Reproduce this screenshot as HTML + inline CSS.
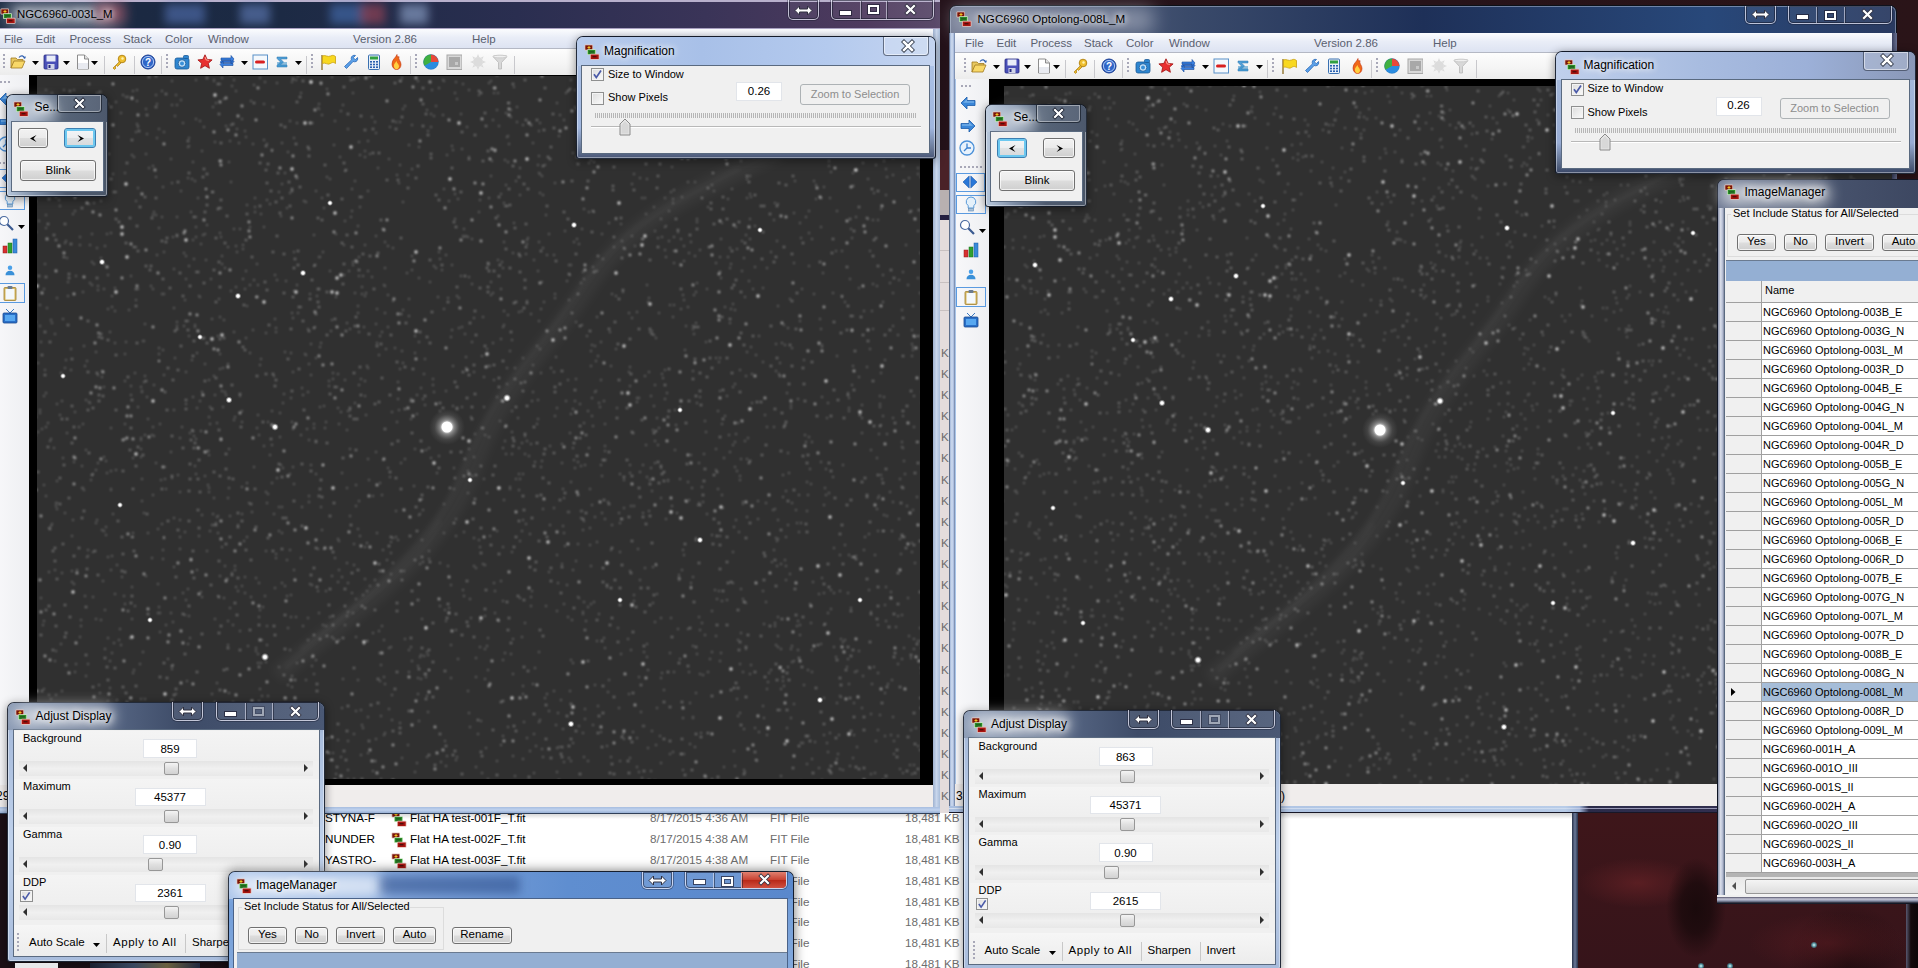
<!DOCTYPE html><html><head><meta charset="utf-8"><style>
html,body{margin:0;padding:0;width:1918px;height:968px;overflow:hidden;background:#140c10;font-family:"Liberation Sans", sans-serif;}
.abs{position:absolute;}
.t{position:absolute;white-space:nowrap;line-height:1;}
.client{position:absolute;background:#f0f0f0;}
.tbx{position:absolute;background:#fff;border:1px solid #dfe3e8;box-sizing:border-box;text-align:center;font-size:12px;color:#000;}
.btn{position:absolute;box-sizing:border-box;border:1px solid #707070;border-radius:3px;background:linear-gradient(#f2f2f2 0%,#ebebeb 45%,#dddddd 50%,#cfcfcf 100%);text-align:center;font-size:11.5px;color:#000;}
.cap{position:absolute;white-space:nowrap;line-height:1;font-size:12px;color:#000;text-shadow:0 0 6px #fff,0 0 8px #fff,0 0 10px #fff;}
.tbtn{position:absolute;box-sizing:border-box;border:1px solid rgba(40,50,70,.75);box-shadow:inset 0 0 0 1px rgba(255,255,255,.35);}
.sep{position:absolute;width:1px;background:#c5c5c5;}
</style></head><body>
<div class="abs" style="left:0;top:0;width:1918px;height:968px;background:linear-gradient(90deg,#1c1016,#24121a 50%,#2a1418);"></div>
<div class="abs" style="left:1578px;top:813px;width:328px;height:155px;background:radial-gradient(ellipse 30px 50px at 118px 95px,#1a0a0c 0%,rgba(26,10,12,.8) 50%,rgba(26,10,12,0) 100%),radial-gradient(ellipse 60px 25px at 60px 70px,rgba(110,36,40,.6) 0%,rgba(110,36,40,0) 100%),radial-gradient(ellipse 80px 30px at 250px 130px,rgba(100,30,36,.5) 0%,rgba(100,30,36,0) 100%),radial-gradient(ellipse 60px 60px at 270px 150px,rgba(20,8,10,.7) 0%,rgba(20,8,10,0) 100%),linear-gradient(#3e161a,#36141a);"></div>
<div class="abs" style="left:1906px;top:813px;width:12px;height:155px;background:linear-gradient(90deg,#585870,#140a0c 40%,#0c0608);"></div>
<div class="abs" style="left:1811px;top:942px;width:6px;height:6px;border-radius:3px;background:radial-gradient(#d0ffff,rgba(80,200,220,.6) 50%,rgba(80,200,220,0))"></div>
<div class="abs" style="left:1698px;top:963px;width:6px;height:6px;border-radius:3px;background:radial-gradient(#d0ffff,rgba(80,200,220,.6) 50%,rgba(80,200,220,0))"></div>
<div class="abs" style="left:1727px;top:963px;width:6px;height:6px;border-radius:3px;background:radial-gradient(#d0ffff,rgba(80,200,220,.6) 50%,rgba(80,200,220,0))"></div>
<div class="abs" style="left:300px;top:150px;width:1272px;height:818px;background:#fff;"></div>
<div class="abs" style="left:1572px;top:813px;width:6px;height:155px;background:linear-gradient(90deg,#28324a,#6a7898,#28324a);"></div>
<div class="abs" style="left:940px;top:150px;width:9px;height:40px;background:#4a2228;"></div>
<div class="abs" style="left:940px;top:190px;width:9px;height:25px;background:#b8b0b0;"></div>
<div class="abs" style="left:940px;top:215px;width:9px;height:5px;background:#262040;"></div>
<div class="abs" style="left:940px;top:220px;width:9px;height:593px;background:#e4dcdc;"></div>
<div class="t" style="left:325px;top:812px;font-size:11.7px;color:#000;">STYNA-F</div>
<svg class="abs" style="left:391px;top:811px" width="16" height="16" viewBox="0 0 16 16">
<rect x="0.5" y="0.5" width="8.5" height="6" rx="1" fill="#e8c8c0"/><rect x="1.3" y="1.3" width="7" height="4.4" fill="#7a1408"/><path d="M3.5 3.5h3M5 2v3" stroke="#f0c020" stroke-width="1"/>
<rect x="3" y="5.2" width="9" height="5.8" rx="1" fill="#c8e8c0"/><rect x="3.8" y="6" width="7.4" height="4.2" fill="#2a8a28"/><path d="M5 7.6h5M5 9h5" stroke="#1a4a18" stroke-width=".7"/>
<rect x="6" y="9.8" width="9.5" height="6" rx="1" fill="#e8c0b8"/><rect x="6.8" y="10.6" width="7.9" height="4.4" fill="#a81410"/><path d="M8.5 12.8h4" stroke="#300808" stroke-width="1"/></svg>
<div class="t" style="left:410px;top:812px;font-size:11.7px;color:#000;">Flat HA test-001F_T.fit</div>
<div class="t" style="left:650px;top:812px;font-size:11.7px;color:#6d6d6d;">8/17/2015 4:36 AM</div>
<div class="t" style="left:770px;top:812px;font-size:11.7px;color:#6d6d6d;">FIT File</div>
<div class="t" style="left:905px;top:812px;font-size:11.7px;color:#6d6d6d;">18,481 KB</div>
<div class="t" style="left:325px;top:833px;font-size:11.7px;color:#000;">NUNDER</div>
<svg class="abs" style="left:391px;top:832px" width="16" height="16" viewBox="0 0 16 16">
<rect x="0.5" y="0.5" width="8.5" height="6" rx="1" fill="#e8c8c0"/><rect x="1.3" y="1.3" width="7" height="4.4" fill="#7a1408"/><path d="M3.5 3.5h3M5 2v3" stroke="#f0c020" stroke-width="1"/>
<rect x="3" y="5.2" width="9" height="5.8" rx="1" fill="#c8e8c0"/><rect x="3.8" y="6" width="7.4" height="4.2" fill="#2a8a28"/><path d="M5 7.6h5M5 9h5" stroke="#1a4a18" stroke-width=".7"/>
<rect x="6" y="9.8" width="9.5" height="6" rx="1" fill="#e8c0b8"/><rect x="6.8" y="10.6" width="7.9" height="4.4" fill="#a81410"/><path d="M8.5 12.8h4" stroke="#300808" stroke-width="1"/></svg>
<div class="t" style="left:410px;top:833px;font-size:11.7px;color:#000;">Flat HA test-002F_T.fit</div>
<div class="t" style="left:650px;top:833px;font-size:11.7px;color:#6d6d6d;">8/17/2015 4:38 AM</div>
<div class="t" style="left:770px;top:833px;font-size:11.7px;color:#6d6d6d;">FIT File</div>
<div class="t" style="left:905px;top:833px;font-size:11.7px;color:#6d6d6d;">18,481 KB</div>
<div class="t" style="left:325px;top:854px;font-size:11.7px;color:#000;">YASTRO-</div>
<svg class="abs" style="left:391px;top:853px" width="16" height="16" viewBox="0 0 16 16">
<rect x="0.5" y="0.5" width="8.5" height="6" rx="1" fill="#e8c8c0"/><rect x="1.3" y="1.3" width="7" height="4.4" fill="#7a1408"/><path d="M3.5 3.5h3M5 2v3" stroke="#f0c020" stroke-width="1"/>
<rect x="3" y="5.2" width="9" height="5.8" rx="1" fill="#c8e8c0"/><rect x="3.8" y="6" width="7.4" height="4.2" fill="#2a8a28"/><path d="M5 7.6h5M5 9h5" stroke="#1a4a18" stroke-width=".7"/>
<rect x="6" y="9.8" width="9.5" height="6" rx="1" fill="#e8c0b8"/><rect x="6.8" y="10.6" width="7.9" height="4.4" fill="#a81410"/><path d="M8.5 12.8h4" stroke="#300808" stroke-width="1"/></svg>
<div class="t" style="left:410px;top:854px;font-size:11.7px;color:#000;">Flat HA test-003F_T.fit</div>
<div class="t" style="left:650px;top:854px;font-size:11.7px;color:#6d6d6d;">8/17/2015 4:38 AM</div>
<div class="t" style="left:770px;top:854px;font-size:11.7px;color:#6d6d6d;">FIT File</div>
<div class="t" style="left:905px;top:854px;font-size:11.7px;color:#6d6d6d;">18,481 KB</div>
<div class="t" style="left:650px;top:875px;font-size:11.7px;color:#6d6d6d;">8/17/2015 4:38 AM</div>
<div class="t" style="left:770px;top:875px;font-size:11.7px;color:#6d6d6d;">FIT File</div>
<div class="t" style="left:905px;top:875px;font-size:11.7px;color:#6d6d6d;">18,481 KB</div>
<div class="t" style="left:650px;top:896px;font-size:11.7px;color:#6d6d6d;">8/17/2015 4:38 AM</div>
<div class="t" style="left:770px;top:896px;font-size:11.7px;color:#6d6d6d;">FIT File</div>
<div class="t" style="left:905px;top:896px;font-size:11.7px;color:#6d6d6d;">18,481 KB</div>
<div class="t" style="left:650px;top:916px;font-size:11.7px;color:#6d6d6d;">8/17/2015 4:38 AM</div>
<div class="t" style="left:770px;top:916px;font-size:11.7px;color:#6d6d6d;">FIT File</div>
<div class="t" style="left:905px;top:916px;font-size:11.7px;color:#6d6d6d;">18,481 KB</div>
<div class="t" style="left:650px;top:937px;font-size:11.7px;color:#6d6d6d;">8/17/2015 4:38 AM</div>
<div class="t" style="left:770px;top:937px;font-size:11.7px;color:#6d6d6d;">FIT File</div>
<div class="t" style="left:905px;top:937px;font-size:11.7px;color:#6d6d6d;">18,481 KB</div>
<div class="t" style="left:650px;top:958px;font-size:11.7px;color:#6d6d6d;">8/17/2015 4:38 AM</div>
<div class="t" style="left:770px;top:958px;font-size:11.7px;color:#6d6d6d;">FIT File</div>
<div class="t" style="left:905px;top:958px;font-size:11.7px;color:#6d6d6d;">18,481 KB</div>
<div class="t" style="left:941px;top:347px;font-size:11.7px;color:#6d6d6d;">K</div>
<div class="t" style="left:941px;top:368px;font-size:11.7px;color:#6d6d6d;">K</div>
<div class="t" style="left:941px;top:389px;font-size:11.7px;color:#6d6d6d;">K</div>
<div class="t" style="left:941px;top:410px;font-size:11.7px;color:#6d6d6d;">K</div>
<div class="t" style="left:941px;top:431px;font-size:11.7px;color:#6d6d6d;">K</div>
<div class="t" style="left:941px;top:452px;font-size:11.7px;color:#6d6d6d;">K</div>
<div class="t" style="left:941px;top:474px;font-size:11.7px;color:#6d6d6d;">K</div>
<div class="t" style="left:941px;top:495px;font-size:11.7px;color:#6d6d6d;">K</div>
<div class="t" style="left:941px;top:516px;font-size:11.7px;color:#6d6d6d;">K</div>
<div class="t" style="left:941px;top:537px;font-size:11.7px;color:#6d6d6d;">K</div>
<div class="t" style="left:941px;top:558px;font-size:11.7px;color:#6d6d6d;">K</div>
<div class="t" style="left:941px;top:579px;font-size:11.7px;color:#6d6d6d;">K</div>
<div class="t" style="left:941px;top:600px;font-size:11.7px;color:#6d6d6d;">K</div>
<div class="t" style="left:941px;top:621px;font-size:11.7px;color:#6d6d6d;">K</div>
<div class="t" style="left:941px;top:642px;font-size:11.7px;color:#6d6d6d;">K</div>
<div class="t" style="left:941px;top:664px;font-size:11.7px;color:#6d6d6d;">K</div>
<div class="t" style="left:941px;top:685px;font-size:11.7px;color:#6d6d6d;">K</div>
<div class="t" style="left:941px;top:706px;font-size:11.7px;color:#6d6d6d;">K</div>
<div class="t" style="left:941px;top:727px;font-size:11.7px;color:#6d6d6d;">K</div>
<div class="t" style="left:941px;top:748px;font-size:11.7px;color:#6d6d6d;">K</div>
<div class="t" style="left:941px;top:769px;font-size:11.7px;color:#6d6d6d;">K</div>
<div class="t" style="left:941px;top:790px;font-size:11.7px;color:#6d6d6d;">K</div>
<div class="abs" style="left:940px;top:250px;width:9px;height:1px;background:#c8c0c0"></div>
<div class="abs" style="left:940px;top:282px;width:9px;height:1px;background:#c8c0c0"></div>
<div class="abs" style="left:940px;top:310px;width:9px;height:1px;background:#c8c0c0"></div>
<svg width="0" height="0" style="position:absolute"><defs><radialGradient id="bigstar"><stop offset="0" stop-color="#fff"/><stop offset=".22" stop-color="#fff"/><stop offset=".4" stop-color="#ccc" stop-opacity=".55"/><stop offset=".7" stop-color="#999" stop-opacity=".18"/><stop offset="1" stop-color="#888" stop-opacity="0"/></radialGradient><radialGradient id="st"><stop offset="0" stop-color="#fff"/><stop offset=".45" stop-color="#eee" stop-opacity=".9"/><stop offset="1" stop-color="#999" stop-opacity="0"/></radialGradient><filter id="blur3"><feGaussianBlur stdDeviation="5"/></filter><filter id="blur1"><feGaussianBlur stdDeviation="2"/></filter><filter id="sblur" x="-5%" y="-5%" width="110%" height="110%"><feGaussianBlur stdDeviation="0.8"/></filter><g id="sky"><path d="M277 676 C 340 620, 440 560, 472 470 S 540 360, 585 290 S 680 200, 760 160 S 860 120, 930 95" fill="none" stroke="#7a7a7a" stroke-width="18" opacity=".11" filter="url(#blur3)"/><path d="M285 668 C 345 612, 430 556, 462 472 S 532 362, 578 292 S 668 208, 740 168" fill="none" stroke="#8a8a8a" stroke-width="6" opacity=".06" filter="url(#blur1)"/><path d="M300 650 C 360 600, 420 570, 440 520" fill="none" stroke="#888" stroke-width="5" opacity=".06" filter="url(#blur1)"/><path d="M437 473h0M862 405h0M487 493h0M196 439h0M597 641h0M115 288h0M112 653h0M654 100h0M914 765h0M619 513h0M172 81h0M506 113h0M201 244h0M57 404h0M426 677h0M497 531h0M480 547h0M442 270h0M928 787h0M786 580h0M314 235h0M290 121h0M720 358h0M792 348h0M892 680h0M30 221h0M849 408h0M912 356h0M96 523h0M731 264h0M108 309h0M898 616h0M136 247h0M121 113h0M747 198h0M533 392h0M202 597h0M148 533h0M135 373h0M222 264h0M904 648h0M304 707h0M220 354h0M799 532h0M120 782h0M222 256h0M725 307h0M297 123h0M111 490h0M249 503h0M365 396h0M893 418h0M547 694h0M195 181h0M848 659h0M255 207h0M695 747h0M207 754h0M824 505h0M409 145h0M65 763h0M245 577h0M261 663h0M567 281h0M188 589h0M92 234h0M533 684h0M583 272h0M856 217h0M45 264h0M431 114h0M189 336h0M545 165h0M356 711h0M912 543h0M652 491h0M156 95h0M46 725h0M661 763h0M49 528h0M464 596h0M317 790h0M98 463h0M693 718h0M693 577h0M744 729h0M347 563h0M841 697h0M405 639h0M807 482h0M592 345h0M554 508h0M102 530h0M924 703h0M685 350h0M692 488h0M426 674h0M105 610h0M57 503h0M463 236h0M659 428h0M583 733h0M260 78h0M301 558h0M212 192h0M845 545h0M428 712h0M324 549h0M209 380h0M755 728h0M822 347h0M555 298h0M153 427h0M783 681h0M670 754h0M279 192h0M436 268h0M223 368h0M593 426h0M314 674h0M914 396h0M97 93h0M816 100h0M668 481h0M308 640h0M47 168h0M439 88h0M777 241h0M157 104h0M596 391h0M597 542h0M757 760h0M646 214h0M458 199h0M40 410h0M673 199h0M275 319h0M658 445h0M583 614h0M384 640h0M846 133h0M869 590h0M147 397h0M593 725h0M369 480h0M821 644h0M880 404h0M616 218h0M680 659h0M607 587h0M222 718h0M912 774h0M513 639h0M318 725h0M800 321h0M104 387h0M525 623h0M469 90h0M758 116h0M750 194h0M332 637h0M156 177h0M495 591h0M786 566h0M881 425h0M884 132h0M229 449h0M291 595h0M605 446h0M789 473h0M311 344h0M791 718h0M217 683h0M902 447h0M546 215h0M512 432h0M575 90h0M902 442h0M391 647h0M537 424h0M652 117h0M515 368h0M891 735h0M272 411h0M144 382h0M764 718h0M459 298h0M202 515h0M863 163h0M731 86h0M205 234h0M648 302h0M350 516h0M124 596h0M141 438h0M255 212h0M507 384h0M368 368h0M506 185h0M214 525h0M605 451h0M796 510h0M801 238h0M697 654h0M842 297h0M313 734h0M226 789h0M829 166h0M245 593h0M264 140h0M779 374h0M741 161h0M393 563h0M46 215h0M644 726h0M902 153h0M485 616h0M483 564h0M200 121h0M126 97h0M527 441h0M542 176h0M196 217h0M786 783h0M864 139h0M86 755h0M446 621h0M324 406h0M494 380h0M571 80h0M661 678h0M193 397h0M695 362h0M206 189h0M491 81h0M834 647h0M664 690h0M596 361h0M570 433h0M914 649h0M262 726h0M700 630h0M763 362h0M837 703h0M655 622h0M719 362h0M680 121h0M338 408h0M40 326h0M605 519h0M239 750h0M629 313h0M624 480h0M510 351h0M930 532h0M661 618h0M912 86h0M584 602h0M261 359h0M75 211h0M368 141h0M256 722h0M525 436h0M900 479h0M926 529h0M759 125h0M568 617h0M71 740h0M174 410h0M182 427h0M580 112h0M881 373h0M504 500h0M359 276h0M620 474h0M285 586h0M296 80h0M251 101h0M171 613h0M381 716h0M704 106h0M920 750h0M96 722h0M417 414h0M906 245h0M501 745h0M680 407h0M911 658h0M573 153h0M592 398h0M213 107h0M505 160h0M429 551h0M440 259h0M554 372h0M730 452h0M928 756h0M691 242h0M132 713h0M736 520h0M353 265h0M647 477h0M563 526h0M708 207h0M254 775h0M854 703h0M66 114h0M274 376h0M591 144h0M517 122h0M108 557h0M526 524h0M366 415h0M220 317h0M700 674h0M97 156h0M758 519h0M722 223h0M412 256h0M759 336h0M618 782h0M323 465h0M701 733h0M415 336h0M117 700h0M101 130h0M538 419h0M647 285h0M728 125h0M222 547h0M104 289h0M682 570h0M285 173h0M352 593h0M360 155h0M668 480h0M857 747h0M852 385h0M753 289h0M316 358h0M871 714h0M253 330h0M359 332h0M386 349h0M205 476h0M747 459h0M783 475h0M189 616h0M823 273h0M50 441h0M520 479h0M900 539h0M754 116h0M522 637h0M106 129h0M693 717h0M106 527h0M159 607h0M614 247h0M228 621h0M499 621h0M385 313h0M901 554h0M474 457h0M679 580h0M853 366h0M774 550h0M798 650h0M780 710h0M892 531h0M501 581h0M752 374h0M408 175h0M697 784h0M368 191h0M214 376h0M293 768h0M83 292h0M133 537h0M728 199h0M86 400h0M556 725h0M63 148h0M196 227h0M242 586h0M565 231h0M196 272h0M185 615h0M311 465h0M765 415h0M264 709h0M853 316h0M523 759h0M464 229h0M75 752h0M751 347h0M505 441h0M277 783h0M622 241h0M40 410h0M364 644h0M672 506h0M172 183h0M320 257h0M812 442h0M603 785h0M270 455h0M166 625h0M31 661h0M792 662h0M104 264h0M675 140h0M462 407h0M890 492h0M802 289h0M740 370h0M855 135h0M774 220h0M519 448h0M172 669h0M310 294h0M98 290h0M451 585h0M354 565h0M125 354h0M446 766h0M777 541h0M41 342h0M669 241h0M538 400h0M39 784h0M750 219h0M584 279h0M368 459h0M298 313h0M383 550h0M261 214h0M688 307h0M881 475h0M681 309h0M774 136h0M157 138h0M640 580h0M192 360h0M783 497h0M111 233h0M171 159h0M396 122h0M859 377h0M490 536h0M720 661h0M377 309h0M401 81h0M391 574h0M914 639h0M624 508h0M47 308h0M338 539h0M126 342h0M488 638h0M773 510h0M173 622h0M843 465h0M347 430h0M158 584h0M918 442h0M674 672h0M207 750h0M594 212h0M105 246h0M549 572h0M326 739h0M355 403h0M142 771h0M152 721h0M519 474h0M534 260h0M848 784h0M766 503h0M140 664h0M290 716h0M247 483h0M778 204h0M523 125h0M59 200h0M918 746h0M623 292h0M634 601h0M373 496h0M753 82h0M210 407h0M159 348h0M543 195h0M498 260h0M541 309h0M608 97h0M634 174h0M893 502h0M453 366h0M591 566h0M712 611h0M467 786h0M784 686h0M398 382h0M539 722h0M503 448h0M419 721h0M319 109h0M683 718h0M689 500h0M707 289h0M564 120h0M142 392h0M482 356h0M77 570h0M504 242h0M306 355h0M242 119h0M850 766h0M629 694h0M409 650h0M230 608h0M540 720h0M119 640h0M141 457h0M886 70h0M250 285h0M322 115h0M836 657h0M388 327h0M557 103h0M58 717h0M307 429h0M871 774h0M455 219h0M296 734h0M837 211h0M784 325h0M455 194h0M822 787h0M212 525h0M202 704h0M75 146h0M683 295h0M840 696h0M672 167h0M656 745h0M431 127h0M231 291h0M669 211h0M193 240h0M628 639h0M365 547h0M826 495h0M236 287h0M864 550h0M279 531h0M111 778h0M426 450h0M508 103h0M570 275h0M256 648h0M108 275h0M710 247h0M281 465h0M198 716h0M919 94h0M445 610h0M376 739h0M480 200h0M530 534h0M354 544h0M735 442h0M485 679h0M646 445h0M886 195h0M732 189h0M577 239h0M426 627h0M738 640h0M242 422h0M229 488h0M479 95h0M567 585h0M545 698h0M192 179h0M46 427h0M421 388h0M267 645h0M95 723h0M542 461h0M742 241h0M162 294h0M68 296h0M589 448h0M268 494h0M110 661h0M184 253h0M174 567h0M778 636h0M85 366h0M358 226h0M903 100h0M471 618h0M918 174h0M440 606h0M65 243h0M831 172h0M384 285h0M412 125h0M61 787h0M717 599h0M237 252h0M527 244h0M445 741h0M358 313h0M913 510h0M66 360h0M615 112h0M339 570h0M808 495h0M828 403h0M384 677h0M373 633h0M224 320h0M195 466h0M177 217h0M223 407h0M308 392h0M924 559h0M806 217h0M375 122h0M652 331h0M277 83h0M194 259h0M384 735h0M674 263h0M355 181h0M873 329h0M719 591h0M846 85h0M320 347h0M105 705h0M323 625h0M497 110h0M385 242h0M67 179h0M566 93h0M311 375h0M520 168h0M666 257h0M683 550h0M162 217h0M282 583h0M395 348h0M809 233h0M293 318h0M224 99h0M52 524h0M539 652h0M908 285h0M633 732h0M225 566h0M630 758h0M812 239h0M599 135h0M415 353h0M84 346h0M325 428h0M282 184h0M392 412h0M180 549h0M246 137h0M338 374h0M166 489h0M661 468h0M660 87h0M382 332h0M87 361h0M79 427h0M557 408h0M323 252h0M51 320h0M833 477h0M266 551h0M197 408h0M584 757h0M356 485h0M878 625h0M595 517h0M400 369h0M279 667h0M822 345h0M849 97h0M152 435h0M308 329h0M909 178h0M203 235h0M642 239h0M31 462h0M385 242h0M474 538h0M523 520h0M535 668h0M902 310h0M342 708h0M312 585h0M656 564h0M898 664h0M174 518h0M472 476h0M363 276h0M704 454h0M243 249h0M322 198h0M492 161h0M87 119h0M122 577h0M131 395h0M725 416h0M176 694h0M813 108h0M259 435h0M747 352h0M674 251h0M674 305h0M330 617h0M788 667h0M541 373h0M666 519h0M778 647h0M143 341h0M632 236h0M196 80h0M557 748h0M903 166h0M649 372h0M598 356h0M870 782h0M74 584h0M137 101h0M287 596h0M924 157h0M327 89h0M518 418h0M366 293h0M750 674h0M285 352h0M586 621h0M913 350h0M655 463h0M750 176h0M188 147h0M870 251h0M469 157h0M321 84h0M539 173h0M593 267h0M235 417h0M359 257h0M76 116h0M833 293h0M101 201h0M465 788h0M212 694h0M466 368h0M756 355h0M82 466h0M621 519h0M279 746h0M808 786h0M429 670h0M682 197h0M54 192h0M137 124h0M353 613h0M309 440h0M39 221h0M893 78h0M505 653h0M743 599h0M389 648h0M775 623h0M917 143h0M885 360h0M665 250h0M849 87h0M549 234h0M380 336h0M621 654h0M358 529h0M349 271h0M845 302h0M115 311h0M697 222h0M699 463h0M642 198h0M125 173h0M345 380h0M38 432h0M393 301h0M513 756h0M214 704h0M319 613h0M128 781h0M417 763h0M228 364h0M665 198h0M276 558h0M883 302h0M195 327h0M921 177h0M601 342h0M609 223h0M585 709h0M801 523h0M484 479h0M133 673h0M651 396h0M629 372h0M376 236h0M571 482h0M494 93h0M595 392h0M564 498h0M868 179h0M452 785h0M694 295h0M693 782h0M392 695h0M144 783h0M472 239h0M786 537h0M874 667h0M748 438h0M924 117h0M813 582h0M256 651h0M439 456h0M809 211h0M282 533h0M96 470h0M738 423h0M248 646h0M800 625h0M524 722h0M747 179h0M359 142h0M63 319h0M808 670h0M136 201h0M380 681h0M585 719h0M95 781h0M216 523h0M819 594h0M207 551h0M418 81h0M336 297h0M597 271h0M573 570h0M193 162h0M654 406h0M146 154h0M877 509h0M352 211h0M925 568h0M693 329h0M309 364h0M162 524h0M412 661h0M398 399h0M486 748h0M342 577h0M242 487h0M286 698h0M288 685h0M639 398h0M870 349h0M699 503h0M434 116h0M407 273h0M427 757h0M294 570h0M635 246h0M400 165h0M836 251h0M409 316h0M768 682h0M562 463h0M119 715h0M110 332h0M367 591h0M632 318h0M838 754h0M51 526h0M452 330h0M448 298h0M634 506h0M903 773h0M923 355h0M776 538h0M661 788h0M90 403h0M391 542h0M226 783h0M218 336h0M159 354h0M698 130h0M180 537h0M591 604h0M258 654h0M688 629h0M138 407h0M44 689h0M880 715h0M52 323h0M512 454h0M130 638h0M301 435h0M142 479h0M147 134h0M491 282h0M730 248h0M403 109h0M226 395h0M532 401h0M796 145h0M795 181h0M903 448h0M396 511h0M807 764h0M402 78h0M168 659h0M691 583h0M171 452h0M56 149h0M301 766h0M609 680h0M71 370h0M101 258h0M131 732h0M326 422h0M619 708h0M882 479h0M481 721h0M385 286h0M695 256h0M361 379h0M459 328h0M417 395h0M75 672h0M86 450h0M523 358h0M230 141h0M365 296h0M466 236h0M705 421h0M38 363h0M900 75h0M564 762h0M359 501h0M362 287h0M578 494h0M314 428h0M495 613h0M78 137h0M257 264h0M746 376h0M804 360h0M287 560h0M107 779h0M778 306h0M316 660h0M739 532h0M81 620h0M73 520h0M527 738h0M605 86h0M871 612h0M552 74h0M693 371h0M642 778h0M855 124h0M733 387h0M706 342h0M433 385h0M136 300h0M691 121h0M134 670h0M630 465h0M132 155h0M309 757h0M534 734h0M220 369h0M513 674h0M141 699h0M455 93h0M419 342h0M637 738h0M474 566h0M379 631h0M125 604h0M180 492h0M212 319h0M177 322h0M562 444h0M380 483h0M788 328h0M555 416h0M913 306h0M658 238h0M265 596h0M547 255h0M88 664h0M370 586h0M419 515h0M534 773h0M849 398h0M468 237h0M708 144h0M306 680h0M62 573h0M541 467h0M330 179h0M886 621h0M755 140h0M736 227h0M209 455h0M579 157h0M718 489h0M839 735h0M650 332h0M886 587h0M292 687h0M684 261h0M254 85h0M513 253h0M294 252h0M148 419h0M275 275h0M280 437h0M816 185h0M804 685h0M578 462h0M691 455h0M624 732h0M728 257h0M79 744h0M356 637h0M240 396h0M363 595h0M879 434h0M539 321h0M239 754h0M129 747h0M621 122h0M842 143h0M539 156h0M920 293h0M815 114h0M630 119h0M57 481h0M915 563h0M800 635h0M499 126h0M504 203h0M504 325h0M479 212h0M665 370h0M467 127h0M468 471h0M905 474h0M151 286h0M332 576h0M875 773h0M885 736h0M803 743h0M48 423h0M562 564h0M581 511h0M870 132h0M497 761h0M59 150h0M812 759h0M52 93h0M777 566h0M498 488h0M712 652h0M31 119h0M745 772h0M780 363h0M332 320h0M43 625h0M266 492h0M504 311h0M637 398h0M241 705h0M188 178h0M258 415h0M735 310h0M244 541h0M264 446h0M259 701h0M196 237h0M301 307h0M684 555h0M741 459h0M101 620h0M250 227h0M403 783h0M364 327h0M850 783h0M378 168h0M741 633h0M334 639h0M372 277h0M564 604h0M458 659h0M42 429h0M372 117h0M853 173h0M215 702h0M894 741h0M338 740h0M158 584h0M881 209h0M152 558h0M824 593h0M884 397h0M365 157h0M276 746h0M94 203h0M343 105h0M306 202h0M141 449h0M516 479h0M716 449h0M882 129h0M231 125h0M308 618h0M862 433h0M174 308h0M542 282h0M744 770h0M444 504h0M791 405h0M202 750h0M910 88h0M716 358h0M77 187h0M186 600h0M220 84h0M228 645h0M479 540h0M449 201h0M44 289h0M67 258h0M587 336h0M456 519h0M315 327h0M825 488h0M405 459h0M444 309h0M852 238h0M872 684h0M824 187h0M488 779h0M290 193h0M681 239h0M555 183h0M883 275h0M117 565h0M342 473h0M478 734h0M493 343h0M31 427h0M272 483h0M599 403h0M111 428h0M464 532h0M903 272h0M428 131h0M750 239h0M776 645h0M259 720h0M484 377h0M530 751h0M471 417h0M292 676h0M483 317h0M207 225h0M781 649h0M911 730h0M647 644h0M670 653h0M751 197h0M763 288h0M250 732h0M51 439h0M339 640h0M579 726h0M869 534h0M88 550h0M128 777h0M814 294h0M197 570h0M712 779h0M591 160h0M684 112h0M811 623h0M737 699h0M542 749h0M605 424h0M376 324h0M51 186h0M746 235h0M618 628h0M655 441h0M314 266h0M199 536h0M648 748h0M328 738h0M850 279h0M887 516h0M896 627h0M330 271h0M500 421h0M62 691h0M512 411h0M700 250h0M209 488h0M247 306h0M93 108h0M350 449h0M884 531h0M403 363h0M242 411h0M893 158h0M420 564h0M716 470h0M607 746h0M842 251h0M517 788h0M505 206h0M719 111h0M165 467h0M275 588h0M684 300h0M720 536h0M665 399h0M419 147h0M457 757h0M830 110h0M94 264h0M655 385h0M145 376h0M546 606h0M393 538h0M643 513h0M72 582h0M146 109h0M456 82h0M96 352h0M452 146h0M888 684h0M468 493h0M314 778h0M138 289h0M229 693h0M488 366h0M389 709h0M262 640h0M667 393h0M359 385h0M438 297h0M591 366h0M303 626h0M440 411h0M822 397h0M368 717h0M909 636h0M391 553h0M697 283h0M682 754h0M620 552h0M422 540h0M233 625h0M515 776h0M338 582h0M45 370h0M720 257h0M582 229h0M389 785h0M207 727h0M84 490h0M769 673h0M382 495h0M671 618h0M702 487h0M256 578h0M535 462h0M918 168h0M733 304h0M684 754h0M277 478h0M505 427h0M180 520h0M834 548h0M290 650h0M408 175h0M575 401h0M507 784h0M543 757h0M347 616h0M98 286h0M653 567h0M776 344h0M276 328h0M514 87h0M367 543h0M164 294h0M815 742h0M255 198h0M136 132h0M745 602h0M268 422h0M656 90h0M767 689h0M220 576h0M659 313h0M821 227h0M457 296h0M428 655h0M543 509h0M918 231h0M230 516h0M165 764h0M337 387h0M418 666h0M854 557h0M184 326h0M666 226h0M824 698h0M234 332h0M236 587h0M72 571h0M86 676h0M519 490h0M116 102h0M348 779h0M570 691h0M86 143h0M49 572h0M189 266h0M630 571h0M320 407h0M290 474h0M350 329h0M254 280h0M265 82h0M309 496h0M272 151h0M791 408h0M491 295h0M828 613h0M590 545h0M653 430h0M402 351h0M484 407h0M506 454h0M740 713h0M232 86h0M301 93h0M747 517h0M287 208h0M812 672h0M645 568h0M700 397h0M388 468h0M822 784h0M855 672h0M97 248h0M904 461h0M493 293h0M806 442h0M921 124h0M924 80h0M163 350h0M606 150h0M536 746h0M422 619h0M563 489h0M186 404h0M840 555h0M225 392h0M519 312h0M550 525h0M46 228h0M621 224h0M96 619h0M330 760h0M533 143h0M603 259h0M763 591h0M713 111h0M61 644h0M156 215h0M57 188h0M456 760h0M319 257h0M775 203h0M602 513h0M872 101h0M537 346h0M771 252h0M673 203h0M476 767h0M246 271h0M856 556h0M89 204h0M243 279h0M790 574h0M912 552h0M595 346h0M676 425h0M83 424h0M376 452h0M74 90h0M915 337h0M327 177h0M563 729h0M192 430h0M480 621h0M539 242h0M201 592h0M100 693h0M60 206h0M451 678h0M588 607h0M715 590h0M76 664h0M163 187h0M64 90h0M819 344h0M108 104h0M792 503h0M855 97h0M131 276h0M202 151h0M210 531h0M181 191h0M512 340h0M165 479h0M487 349h0M457 99h0M584 209h0M332 77h0M829 493h0M383 460h0M876 165h0M375 580h0M365 579h0M847 99h0M286 281h0M705 635h0M660 736h0M197 353h0M798 621h0M131 775h0M696 693h0M356 506h0M893 717h0M549 711h0M929 674h0M620 761h0M159 361h0M538 165h0M733 115h0M596 271h0M321 507h0M202 392h0M801 781h0M266 333h0M654 207h0M794 213h0M531 314h0M31 71h0M32 306h0M278 784h0M604 117h0M674 237h0M463 590h0M801 743h0M409 299h0M388 295h0M697 403h0M647 179h0M735 766h0M213 514h0M176 95h0M403 202h0M688 482h0M637 767h0M82 141h0M62 401h0M772 562h0M523 686h0M365 151h0M607 88h0M236 91h0M175 116h0M508 162h0M573 663h0M340 157h0M634 595h0M826 469h0M554 691h0M639 772h0M288 628h0M600 407h0M40 413h0M267 503h0M489 437h0M83 165h0M576 561h0M921 641h0M291 398h0M485 649h0M385 733h0M466 357h0M462 327h0M930 103h0M390 127h0M640 178h0M164 375h0M572 620h0M430 282h0M361 710h0M222 78h0M827 418h0M149 168h0M831 609h0M88 556h0M222 391h0M575 107h0M872 311h0M160 632h0M128 97h0M617 408h0M841 639h0M216 103h0M573 409h0M301 730h0M218 533h0M96 735h0M884 515h0M318 591h0M843 642h0M67 433h0M156 463h0M885 693h0M254 467h0M316 191h0M699 617h0M333 373h0M657 594h0M447 155h0M116 192h0M774 427h0M610 332h0M362 197h0M907 506h0M146 576h0M568 512h0M723 508h0M819 768h0M396 537h0M367 366h0M360 536h0M347 323h0M792 646h0M639 677h0M377 533h0M256 297h0M121 645h0M859 288h0M370 154h0M158 529h0M833 130h0M259 617h0M233 702h0M348 411h0M211 279h0M412 270h0M686 92h0M605 648h0M324 208h0M138 126h0M743 504h0M44 396h0M569 300h0M61 373h0M348 770h0M354 734h0M811 484h0M143 652h0M111 471h0M118 137h0M399 183h0M923 486h0M837 759h0M712 535h0M456 630h0M632 184h0M507 368h0M494 583h0M650 480h0M740 664h0M113 174h0M72 186h0M893 293h0M425 405h0M538 271h0M731 309h0M791 649h0M31 464h0M114 706h0M92 262h0M722 495h0M630 367h0M498 216h0M446 255h0M638 147h0M154 212h0M510 489h0M33 781h0M782 343h0M173 665h0M909 198h0M710 659h0M873 220h0M138 188h0M238 718h0M849 411h0M145 324h0M247 537h0M678 629h0M423 399h0M451 337h0M440 563h0M670 305h0M540 174h0M71 349h0M353 93h0M102 377h0M878 673h0M57 298h0M362 294h0M153 495h0M785 345h0M189 146h0M44 621h0M238 591h0M742 130h0M200 297h0M722 601h0M303 395h0M350 410h0M744 258h0M759 732h0M571 761h0M874 193h0M922 214h0M754 157h0M302 388h0M785 560h0M213 716h0M809 437h0M76 276h0M293 372h0M878 498h0M768 121h0M251 597h0M336 234h0M87 107h0M401 463h0M390 477h0M292 82h0M637 312h0M472 342h0M273 107h0M297 285h0M133 91h0M463 84h0M821 329h0M429 448h0M52 143h0M737 471h0M474 318h0M706 432h0M743 672h0M834 593h0M637 402h0M510 487h0M503 660h0M802 108h0M707 514h0M569 724h0M75 412h0M368 753h0M178 475h0M160 613h0M470 599h0M306 706h0M36 232h0M690 703h0M730 268h0M103 581h0M688 114h0M871 450h0M60 415h0M334 145h0M827 743h0M142 391h0M276 554h0M129 310h0M399 410h0M422 499h0M876 741h0M847 667h0M236 246h0M444 533h0M576 322h0M923 295h0M47 135h0M218 596h0M787 100h0M243 245h0M738 716h0M267 144h0M900 769h0M675 410h0M702 623h0M488 265h0M503 547h0M322 530h0M162 769h0M220 233h0M894 754h0M863 676h0M794 661h0M540 123h0M689 672h0M784 101h0M85 596h0M469 713h0M922 392h0M638 549h0M654 335h0M606 119h0M840 591h0M752 403h0M215 395h0M643 465h0M128 73h0M388 246h0M234 229h0M404 571h0M852 557h0M49 695h0M578 597h0M582 325h0M335 121h0M628 109h0M643 726h0M631 506h0M757 761h0M761 783h0M444 81h0M583 530h0M807 511h0M357 73h0M778 520h0M917 497h0M797 626h0M922 403h0M837 356h0M40 305h0M346 784h0M385 268h0M652 140h0M305 354h0M142 501h0M411 647h0M336 774h0M206 452h0M234 80h0M301 715h0M292 422h0M502 262h0M511 117h0M344 275h0M764 624h0M661 498h0M810 604h0M80 164h0M703 675h0M920 628h0M172 478h0M592 505h0M151 767h0M489 264h0M913 347h0M93 552h0M264 227h0M302 507h0M318 549h0M845 783h0M830 733h0M258 663h0M111 489h0M98 141h0M884 161h0M675 450h0M31 641h0M85 708h0M767 427h0M432 90h0M660 98h0M503 736h0M640 154h0M679 575h0M326 626h0M551 368h0M503 268h0M288 710h0M345 625h0M360 207h0M31 764h0M706 777h0M560 115h0M177 105h0M581 518h0M890 283h0M240 229h0M162 91h0M474 372h0M361 755h0M312 666h0M509 144h0M57 509h0M817 106h0M662 237h0M648 670h0M684 246h0M170 766h0M854 735h0M517 107h0M362 725h0M90 283h0M68 704h0M348 129h0M351 217h0M420 514h0M622 139h0M511 110h0M427 652h0M266 662h0M250 353h0M743 73h0M529 456h0M673 752h0M655 231h0M209 417h0M283 468h0M111 570h0M405 106h0M139 743h0M794 704h0M381 779h0M183 593h0M878 220h0M34 161h0M105 649h0M576 413h0M133 533h0M153 166h0M564 533h0M751 665h0M153 289h0M160 424h0M56 695h0M644 652h0M470 727h0M781 667h0M755 226h0M341 111h0M718 411h0M918 278h0M418 694h0M902 615h0M824 735h0M274 514h0M87 557h0M887 434h0M161 480h0M89 402h0M102 371h0M766 602h0M798 399h0M427 110h0M740 480h0M397 175h0M443 115h0M138 127h0M412 169h0M775 509h0M810 469h0M174 269h0M786 491h0M612 525h0M73 214h0M418 678h0M879 496h0M264 104h0M533 365h0M868 219h0M214 81h0M56 651h0M814 181h0M44 485h0M252 512h0M851 608h0M282 507h0M291 617h0M262 696h0M641 712h0M341 757h0M554 255h0M612 294h0M132 99h0M579 244h0M120 629h0M158 613h0M276 332h0M869 667h0M781 776h0M573 743h0M590 489h0M321 343h0M543 248h0M608 692h0M678 232h0M55 334h0M421 679h0M522 443h0M575 468h0M640 472h0M527 240h0M141 387h0M828 752h0M294 484h0M497 397h0M190 638h0M107 234h0M281 216h0M204 127h0M501 194h0M608 502h0M592 416h0M581 283h0M448 566h0M224 598h0M557 772h0M585 465h0M721 278h0M365 381h0M691 588h0M197 757h0M914 427h0M926 517h0M376 133h0M46 496h0M677 513h0M735 384h0M698 505h0M601 465h0M630 473h0M112 556h0M663 378h0M903 416h0M180 438h0M352 189h0M830 198h0M671 192h0M495 788h0M110 688h0M35 774h0M848 393h0M604 401h0M177 326h0M427 696h0M133 458h0M454 468h0M743 502h0M321 757h0M569 265h0M523 694h0M72 536h0M469 277h0M173 237h0M424 374h0M571 265h0M588 411h0M746 649h0M243 773h0M522 311h0M259 583h0M423 562h0M260 689h0M268 696h0M425 359h0M550 446h0M523 474h0M885 605h0M113 781h0M44 108h0M767 268h0M56 197h0M476 677h0M48 189h0M41 109h0M314 424h0M902 537h0M799 495h0M849 555h0M246 338h0M462 149h0M862 418h0M210 424h0M755 267h0M559 136h0M247 205h0M485 565h0M235 566h0M557 611h0M926 310h0M927 398h0M489 198h0M106 535h0M123 95h0M106 461h0M206 260h0M720 391h0M163 559h0M925 518h0M431 458h0M662 673h0M737 249h0M732 145h0M145 435h0M196 474h0M286 749h0M420 657h0M880 396h0M722 424h0M389 159h0M623 734h0M649 298h0M503 327h0M382 626h0M36 417h0M491 176h0M689 253h0M393 248h0M568 380h0M645 376h0M735 467h0M125 424h0M258 285h0M883 416h0M695 182h0M597 155h0M229 162h0M52 723h0M898 335h0M41 598h0M627 103h0M720 119h0M240 631h0M721 239h0M487 646h0M573 448h0M196 119h0M199 448h0M566 401h0M602 476h0M611 366h0M788 453h0M822 780h0M775 626h0M651 468h0M253 144h0M625 249h0M581 466h0M576 379h0M245 289h0M657 708h0M317 296h0M433 379h0M599 614h0M721 653h0M683 770h0M434 392h0M616 296h0M776 371h0M531 444h0M358 78h0M280 413h0M886 169h0M843 770h0M742 271h0M47 704h0M92 285h0M875 555h0M771 670h0M190 433h0M115 343h0M476 658h0M290 550h0M157 255h0M83 488h0M558 583h0M408 745h0M680 479h0M816 199h0M293 467h0M569 758h0M641 104h0M880 407h0M215 619h0M595 685h0M526 254h0M453 406h0M347 488h0M164 252h0M137 90h0M503 601h0M392 720h0M578 544h0M288 717h0M343 679h0M250 755h0M645 198h0M688 182h0M377 343h0M331 331h0M175 358h0M114 643h0M348 583h0M415 772h0M822 578h0M787 728h0M867 367h0M564 120h0M358 306h0M590 75h0M709 124h0M411 419h0M788 525h0M163 550h0M242 514h0M402 758h0M434 266h0M309 759h0M344 245h0M512 552h0M877 127h0M326 591h0M476 568h0M637 137h0M75 198h0M304 201h0M288 152h0M54 448h0M712 185h0M115 594h0M101 171h0M472 284h0M736 434h0M501 339h0M55 661h0M381 665h0M125 381h0M516 181h0M97 744h0M875 790h0M520 598h0M571 414h0M185 532h0M429 559h0M68 282h0M132 619h0M461 276h0M733 445h0M291 353h0M32 114h0M63 762h0M821 462h0M877 458h0M643 145h0M423 510h0M398 540h0M339 541h0M217 423h0M415 449h0M80 245h0M674 190h0M459 786h0M579 598h0M724 767h0M379 355h0M709 88h0M452 265h0M531 597h0M805 435h0M653 127h0M624 739h0M584 423h0M490 366h0M191 212h0M745 441h0M65 513h0M778 539h0M192 755h0M194 436h0M444 189h0M270 204h0M181 100h0M611 550h0M256 755h0M411 399h0M865 537h0M449 608h0M696 292h0M93 597h0M703 502h0M135 606h0M188 644h0M590 528h0M98 333h0M690 150h0M65 368h0M797 523h0M237 129h0M783 677h0M661 219h0M706 77h0M185 300h0M891 96h0M175 598h0M716 263h0M99 685h0M903 724h0M539 131h0M696 538h0M778 617h0M482 773h0M446 391h0M604 638h0M559 747h0M274 715h0M820 319h0M56 503h0M588 761h0M532 591h0M714 191h0M630 386h0M225 268h0M356 599h0M527 301h0M80 637h0M708 672h0M738 116h0M283 403h0M297 663h0M214 80h0M436 106h0M56 506h0M574 460h0M93 474h0M501 289h0M231 182h0M465 334h0M557 555h0M279 507h0M263 607h0M214 498h0M693 646h0M508 727h0M918 641h0M353 262h0M594 162h0M189 138h0M616 349h0M859 651h0M508 315h0M318 108h0M130 698h0M298 76h0M912 344h0M727 396h0M902 128h0M456 536h0M52 730h0M335 558h0M101 126h0M108 638h0M878 730h0M508 136h0M729 435h0M734 527h0M540 193h0M159 129h0M419 278h0M889 105h0M713 156h0M123 734h0M228 498h0M556 357h0M345 171h0M656 338h0M571 660h0M98 375h0M348 741h0M589 212h0M443 80h0M493 120h0M154 436h0M514 223h0M555 294h0M662 108h0M787 393h0M186 279h0M595 138h0M851 229h0M400 122h0M441 762h0M198 198h0M522 531h0M159 228h0M574 242h0M55 570h0M812 650h0M800 223h0M309 502h0M584 521h0M528 238h0M245 131h0M82 488h0M108 701h0M893 175h0M899 519h0M35 346h0M355 293h0M90 245h0M46 393h0M464 237h0M862 708h0M480 647h0M348 612h0M730 323h0M696 323h0M186 372h0M132 587h0M257 428h0M758 501h0M848 593h0M653 603h0M652 731h0M565 546h0M525 454h0M877 286h0M201 431h0M310 584h0M602 71h0M218 516h0M387 560h0M453 150h0M651 771h0M113 514h0M582 511h0M485 435h0M920 698h0M421 655h0M631 650h0M928 121h0M221 237h0M767 735h0M234 420h0M831 590h0M558 713h0M861 136h0M899 280h0M583 612h0M294 291h0M845 640h0M909 138h0M594 602h0M891 592h0M282 143h0M186 256h0M544 302h0M164 132h0M647 657h0M141 440h0M912 330h0M511 654h0M51 699h0M727 600h0M339 424h0M876 114h0M104 531h0M887 177h0M200 401h0M740 476h0M624 107h0M209 492h0M682 136h0M112 296h0M403 310h0M183 123h0M611 757h0M601 732h0M144 513h0M358 680h0M569 512h0M853 758h0M154 385h0M107 473h0M232 573h0M350 76h0M829 161h0M272 445h0M81 626h0M675 155h0M589 163h0M507 137h0M284 394h0M520 541h0M864 311h0M345 221h0M694 334h0M221 208h0M409 672h0M424 656h0M454 489h0M260 365h0M682 131h0M439 252h0M292 313h0M208 485h0M66 241h0M267 200h0M781 564h0M829 166h0M199 296h0M488 670h0M781 689h0M46 90h0M333 379h0M36 322h0M145 699h0M219 299h0M187 681h0M131 386h0M228 247h0M925 584h0M693 326h0M910 765h0M602 234h0M74 462h0M468 691h0M929 658h0M248 779h0M581 97h0M217 760h0M746 603h0M626 87h0M873 284h0M724 458h0M469 449h0M857 671h0M385 684h0M188 321h0M319 104h0M391 72h0M902 659h0M461 114h0M267 626h0M294 138h0M414 486h0M144 341h0M531 606h0M396 784h0M260 610h0M101 729h0M520 195h0M763 706h0M147 705h0M893 326h0M741 589h0M540 349h0M312 657h0M734 751h0M91 480h0M665 227h0M49 713h0M733 583h0M329 386h0M761 137h0M680 579h0M447 756h0M598 706h0M205 364h0M293 429h0M709 784h0M849 684h0M908 598h0M693 135h0M397 422h0M125 719h0M365 245h0M104 457h0M333 753h0M601 380h0M172 105h0M649 511h0M475 434h0M400 723h0M80 237h0M745 297h0M329 381h0M296 617h0M116 470h0M673 317h0M686 326h0M590 144h0M316 474h0M580 404h0M63 458h0M809 266h0M217 517h0M239 143h0M97 520h0M824 625h0M561 700h0M794 263h0M373 771h0M878 531h0M597 317h0M112 307h0M238 525h0M620 523h0M850 70h0M215 142h0M363 728h0M451 645h0M195 325h0M749 281h0M687 502h0M620 91h0M354 779h0M368 271h0M929 495h0M657 418h0M591 351h0M277 280h0M235 570h0M109 154h0M486 783h0M733 552h0M697 219h0M489 83h0M498 93h0M134 157h0M341 412h0M226 126h0M139 754h0M916 728h0M153 215h0M821 81h0M164 537h0M898 736h0M790 299h0M690 744h0M840 769h0M716 636h0M662 374h0" stroke="#f0f0f0" stroke-width="2.5" stroke-linecap="round" opacity="0.2" filter="url(#sblur)"/><path d="M546 739h0M545 88h0M433 697h0M668 417h0M871 614h0M232 575h0M813 75h0M873 381h0M793 79h0M318 289h0M226 544h0M746 538h0M849 152h0M288 359h0M744 602h0M922 698h0M507 602h0M766 445h0M641 685h0M779 183h0M57 579h0M764 206h0M796 615h0M178 182h0M622 519h0M174 724h0M224 670h0M881 157h0M661 466h0M854 390h0M401 238h0M792 301h0M850 95h0M830 84h0M681 754h0M319 496h0M402 117h0M785 425h0M752 96h0M177 236h0M765 87h0M50 342h0M378 679h0M803 243h0M698 327h0M720 545h0M93 408h0M411 401h0M530 567h0M392 444h0M775 560h0M204 169h0M274 755h0M378 703h0M898 573h0M362 606h0M482 756h0M481 528h0M646 524h0M190 479h0M415 560h0M727 219h0M363 254h0M895 423h0M435 765h0M734 688h0M483 161h0M365 130h0M390 395h0M462 774h0M509 189h0M191 559h0M494 365h0M474 365h0M640 497h0M74 427h0M255 489h0M447 618h0M898 604h0M586 435h0M132 596h0M207 343h0M556 261h0M807 463h0M905 86h0M448 302h0M547 537h0M562 747h0M427 337h0M705 469h0M272 733h0M233 124h0M514 726h0M799 658h0M580 438h0M292 189h0M429 670h0M529 777h0M750 461h0M562 371h0M846 670h0M191 719h0M639 329h0M700 373h0M654 433h0M598 733h0M831 416h0M378 585h0M630 139h0M489 271h0M613 190h0M298 251h0M282 477h0M807 532h0M612 618h0M382 378h0M616 219h0M708 733h0M823 117h0M854 231h0M147 514h0M342 199h0M577 456h0M513 438h0M585 630h0M679 578h0M775 409h0M606 151h0M103 396h0M643 239h0M894 278h0M472 407h0M904 181h0M256 527h0M356 317h0M149 730h0M428 487h0M251 744h0M125 572h0M89 453h0M323 755h0M425 674h0M56 240h0M918 336h0M64 257h0M356 450h0M374 289h0M457 408h0M195 443h0M549 483h0M696 396h0M222 749h0M136 289h0M405 367h0M220 690h0M302 464h0M578 164h0M418 166h0M518 596h0M799 746h0M132 400h0M630 339h0M880 426h0M813 118h0M380 571h0M784 427h0M803 617h0M402 580h0M495 151h0M840 678h0M833 239h0M729 98h0M480 288h0M485 346h0M525 382h0M713 544h0M280 213h0M244 305h0M412 433h0M718 777h0M265 282h0M497 75h0M601 97h0M565 493h0M375 783h0M311 82h0M126 243h0M694 602h0M348 706h0M177 235h0M544 454h0M741 292h0M842 525h0M650 484h0M220 476h0M879 81h0M327 292h0M259 625h0M614 167h0M664 702h0M89 84h0M571 704h0M525 434h0M396 478h0M851 500h0M701 405h0M825 624h0M488 287h0M300 775h0M606 121h0M499 378h0M569 274h0M844 418h0M776 257h0M829 463h0M521 383h0M878 475h0M511 332h0M442 265h0M430 260h0M99 333h0M55 548h0M115 722h0M315 265h0M525 280h0M681 289h0M859 100h0M81 705h0M650 260h0M609 329h0M487 268h0M516 537h0M792 254h0M543 478h0M817 416h0M808 736h0M397 362h0M902 487h0M508 630h0M574 443h0M622 258h0M370 76h0M679 663h0M692 770h0M710 147h0M319 734h0M127 702h0M747 176h0M219 597h0M618 92h0M507 206h0M803 456h0M42 355h0M39 722h0M829 587h0M32 745h0M268 538h0M717 472h0M134 247h0M688 159h0M369 741h0M398 180h0M615 322h0M741 333h0M776 664h0M190 464h0M431 158h0M851 316h0M580 113h0M886 776h0M646 164h0M627 408h0M456 227h0M167 678h0M574 608h0M695 359h0M525 288h0M619 380h0M736 280h0M373 129h0M65 224h0M45 375h0M371 705h0M68 779h0M115 668h0M352 247h0M580 326h0M45 164h0M641 588h0M924 252h0M722 317h0M494 271h0M400 728h0M257 376h0M848 395h0M762 455h0M345 589h0M618 344h0M928 136h0M795 589h0M669 411h0M704 102h0M633 693h0M397 603h0M656 431h0M723 419h0M138 447h0M708 188h0M445 671h0M42 691h0M346 331h0M659 483h0M289 182h0M409 711h0M925 587h0M656 565h0M853 186h0M160 677h0M48 447h0M393 731h0M592 232h0M88 410h0M527 406h0M553 114h0M354 668h0M290 206h0M191 746h0M812 362h0M327 335h0M824 724h0M887 687h0M642 154h0M878 191h0M695 327h0M63 544h0M259 709h0M193 551h0M423 104h0M284 293h0M727 625h0M872 189h0M220 339h0M318 218h0M707 74h0M513 166h0M312 280h0M446 746h0M693 379h0M921 253h0M199 528h0M723 591h0M486 590h0M329 753h0M696 647h0M516 731h0M453 755h0M429 755h0M316 442h0M534 466h0M789 680h0M194 578h0M503 361h0M134 725h0M920 592h0M544 130h0M319 307h0M108 340h0M360 367h0M92 165h0M886 469h0M240 394h0M357 419h0M189 606h0M870 522h0M894 657h0M513 446h0M652 334h0M99 395h0M765 556h0M66 665h0M72 443h0M190 286h0M238 513h0M670 707h0M485 113h0M64 131h0M145 197h0M297 178h0M796 329h0M462 635h0M193 431h0M67 419h0M865 478h0M302 526h0M482 428h0M603 582h0M831 773h0M895 653h0M644 646h0M205 212h0M789 384h0M49 606h0M151 266h0M859 207h0M774 262h0M744 345h0M536 562h0M676 219h0M634 190h0M250 630h0M168 368h0M133 489h0M188 330h0M911 391h0M481 93h0M266 146h0M588 181h0M189 173h0M696 540h0M293 297h0M279 464h0M543 166h0M168 521h0M282 549h0M188 141h0M93 687h0M513 84h0M351 525h0M227 669h0M34 449h0M547 206h0M918 463h0M148 614h0M55 561h0M781 530h0M51 116h0M777 680h0M273 738h0M762 147h0M827 80h0M322 220h0M219 430h0M71 765h0M219 561h0M347 731h0M534 427h0M714 475h0M436 195h0M750 523h0M447 782h0M448 604h0M177 329h0M598 256h0M927 783h0M611 588h0M274 626h0M805 401h0M539 541h0M254 103h0M194 448h0M603 686h0M271 191h0M408 188h0M263 422h0M646 146h0M186 409h0M499 197h0M624 477h0M897 757h0M595 134h0M500 265h0M281 125h0M652 543h0M277 236h0M923 468h0M658 247h0M878 587h0M488 151h0M423 88h0M219 633h0M130 218h0M337 767h0M178 370h0M509 103h0M537 120h0M318 302h0M927 385h0M299 307h0M300 187h0M314 568h0M347 235h0M65 637h0M298 265h0M793 768h0M526 120h0M782 619h0M46 277h0M782 413h0M189 779h0M221 200h0M655 781h0M666 84h0M48 224h0M628 761h0M134 551h0M638 91h0M842 296h0M367 641h0M519 521h0M82 518h0M164 663h0M727 537h0M610 773h0M776 586h0M354 79h0M930 116h0M69 498h0M923 391h0M218 84h0M175 331h0M344 264h0M821 790h0M911 211h0M657 188h0M446 430h0M314 635h0M228 648h0M719 523h0M99 157h0M756 760h0M246 550h0M712 696h0M152 218h0M87 569h0M352 573h0M178 530h0M275 386h0M561 754h0M202 634h0M75 197h0M657 130h0M787 710h0M227 579h0M614 774h0M476 335h0M820 262h0M852 331h0M397 672h0M711 203h0M623 782h0M390 472h0M620 588h0M381 344h0M189 521h0M327 636h0M70 617h0M174 695h0M771 326h0M119 222h0M217 775h0M756 87h0M38 472h0M439 468h0M787 673h0M151 767h0M443 408h0M166 242h0M198 272h0M520 256h0M272 150h0M92 726h0M425 396h0M148 778h0M41 635h0M69 278h0M467 398h0M664 481h0M662 118h0M294 268h0M463 372h0M127 163h0M85 109h0M612 764h0M564 212h0M580 426h0M285 649h0M267 290h0M71 244h0M860 415h0M686 423h0M269 325h0M488 292h0M494 88h0M379 153h0M461 452h0M850 698h0M834 390h0M295 680h0M137 343h0M86 655h0M701 737h0M197 672h0M658 462h0M429 650h0M455 751h0M863 335h0M515 379h0M841 685h0M391 335h0M316 548h0M629 517h0M499 554h0M35 414h0M654 595h0M763 232h0M864 768h0M588 661h0M207 205h0M226 454h0M834 322h0M870 668h0M70 91h0M928 430h0M731 690h0M303 81h0M810 741h0M389 546h0M40 746h0M580 774h0M650 329h0M191 440h0M808 455h0M515 228h0M162 241h0M304 410h0M878 266h0M235 603h0M874 240h0M299 369h0M85 137h0M526 247h0M240 650h0M464 476h0M620 605h0M859 769h0M131 603h0M52 156h0M260 163h0M167 238h0M761 636h0M481 466h0M703 495h0M99 401h0M212 409h0M910 212h0M320 489h0M623 290h0M385 429h0M867 106h0M831 471h0M855 351h0M615 87h0M230 537h0M327 443h0M915 473h0M632 476h0M257 780h0M372 87h0M413 369h0M216 378h0M95 747h0M499 276h0M523 496h0M380 653h0M440 734h0M720 569h0M176 577h0M911 655h0M69 274h0M32 549h0M828 564h0M627 460h0M687 464h0M749 182h0M454 523h0M92 475h0M854 133h0M691 588h0M831 766h0M604 500h0M457 387h0M572 313h0M749 463h0M421 441h0M668 672h0M764 580h0M250 70h0M139 131h0M486 126h0M456 614h0M426 699h0M354 419h0M268 164h0M550 159h0M163 279h0M685 775h0M225 243h0M903 488h0M747 789h0M624 248h0M914 713h0M33 767h0M614 237h0M457 287h0M727 358h0M107 710h0M328 195h0M660 164h0M575 390h0M139 757h0M654 110h0M840 534h0M770 626h0M183 296h0M185 654h0M883 483h0M629 773h0M499 387h0M283 780h0M140 207h0M796 89h0M208 451h0M243 347h0M53 551h0M97 278h0M122 571h0M226 469h0M60 478h0M338 724h0M204 283h0M812 114h0M472 419h0M292 191h0M479 91h0M39 276h0M370 256h0M669 369h0M578 495h0M670 741h0M535 570h0M531 125h0M781 451h0M65 605h0M481 752h0M405 409h0M836 738h0M723 390h0M418 600h0M838 400h0M662 474h0M526 224h0M284 254h0M916 89h0M227 216h0M764 553h0M308 147h0M636 607h0M607 585h0M568 91h0M746 697h0M181 346h0M915 773h0M765 677h0M172 700h0M770 214h0M851 656h0M854 717h0M114 192h0M755 195h0M343 638h0M777 358h0M401 571h0M926 522h0M342 243h0M198 510h0M678 230h0M700 505h0M545 449h0M400 81h0M514 547h0M829 770h0M613 186h0M803 368h0M897 750h0M111 107h0M74 556h0M473 519h0M322 497h0M116 219h0M690 235h0M132 537h0M915 744h0M824 584h0M37 182h0M554 453h0M783 92h0M593 122h0M710 134h0M468 626h0M917 644h0M734 285h0M605 460h0M475 499h0M430 343h0M717 536h0M908 737h0M751 149h0M483 428h0M741 725h0M207 78h0M813 773h0M334 503h0M377 346h0M603 568h0M841 333h0M475 394h0M917 442h0M856 767h0M56 626h0M131 428h0M597 127h0M551 568h0M343 458h0M387 180h0M260 748h0M603 460h0M755 672h0M710 358h0M516 302h0M88 736h0M102 338h0M797 293h0M850 85h0M165 392h0M602 641h0M837 660h0M197 784h0M72 406h0M344 87h0M213 785h0M903 318h0M930 602h0M60 504h0M214 270h0M676 219h0M347 74h0M319 289h0M132 140h0M396 129h0M873 256h0M361 116h0M761 206h0M99 337h0M851 731h0M450 488h0M96 720h0M709 247h0M786 185h0M465 276h0M541 251h0M519 254h0M44 152h0M740 392h0M491 545h0M260 206h0M397 611h0M689 401h0M576 254h0M883 531h0M753 336h0M551 581h0M509 618h0M275 635h0M316 441h0M159 361h0M828 92h0M199 460h0M622 565h0M648 588h0M572 181h0M520 272h0M35 435h0M907 406h0M714 519h0M64 465h0M920 541h0M298 722h0M632 742h0M794 490h0M451 452h0M317 684h0M145 782h0M335 387h0M578 294h0M577 109h0M813 146h0M816 688h0M738 610h0M198 479h0M86 607h0M739 222h0M428 135h0M631 573h0M84 511h0M821 198h0M847 267h0M45 130h0M711 209h0M804 384h0M105 658h0M325 165h0M33 287h0M445 427h0M554 128h0M33 709h0M412 591h0M835 498h0M697 229h0M221 440h0M918 769h0M238 527h0M291 329h0M283 787h0M375 404h0M108 680h0M107 667h0M246 240h0M68 325h0M890 330h0M329 605h0M237 615h0M900 687h0M66 633h0M740 642h0M551 147h0M639 488h0M467 622h0M194 341h0M599 716h0M921 708h0M266 374h0M502 401h0M101 334h0M868 341h0M821 712h0M493 730h0M909 77h0M562 757h0M309 331h0M167 705h0M537 496h0M567 716h0M495 466h0M432 312h0M902 535h0M475 135h0M605 102h0M454 222h0M383 229h0M232 385h0M138 251h0M678 143h0M792 366h0M221 626h0M369 334h0M31 198h0M874 426h0M422 495h0M111 179h0M806 524h0M317 691h0M292 391h0M736 683h0M283 777h0M219 262h0M493 475h0M516 407h0M732 251h0M422 557h0M832 253h0M350 408h0M271 439h0M876 238h0M778 710h0M470 323h0M136 466h0M790 345h0M259 667h0M172 476h0M720 437h0M294 501h0M333 552h0M746 647h0M726 159h0M273 551h0M603 713h0M426 114h0M96 105h0M514 303h0M64 724h0M88 321h0M727 562h0M227 763h0M433 662h0M410 536h0M890 113h0M541 495h0M901 503h0M266 170h0M528 189h0M346 760h0M194 217h0M633 433h0M848 306h0M712 368h0M925 731h0M204 338h0M457 409h0M562 567h0M164 538h0M771 366h0M273 252h0M577 157h0M220 287h0M650 605h0M519 177h0M348 114h0M927 402h0M784 247h0M278 173h0M379 564h0M527 303h0M146 266h0M723 197h0M922 673h0M182 72h0M772 101h0M632 432h0M401 489h0M46 610h0M787 97h0M284 675h0M207 174h0M754 783h0M919 210h0M149 77h0M136 306h0M894 614h0M193 356h0M524 184h0M82 208h0M300 97h0M907 771h0M455 382h0M528 671h0M400 733h0M891 270h0M551 758h0M304 784h0M481 553h0M116 355h0M621 218h0M903 356h0M540 630h0M311 575h0M690 628h0M316 314h0M555 392h0M455 478h0M713 173h0M221 161h0M496 218h0M867 218h0M433 623h0M285 127h0M238 578h0M344 751h0M170 288h0M475 311h0M296 144h0M485 609h0M362 779h0M590 331h0M359 270h0M116 410h0M511 643h0M100 92h0M847 330h0M682 702h0M282 198h0M732 288h0M482 71h0M555 387h0M218 209h0M864 717h0M310 299h0M335 319h0M375 761h0M45 332h0M524 510h0M330 589h0M416 178h0M850 219h0M664 739h0M183 614h0M730 319h0M855 170h0M497 775h0M503 701h0M391 537h0M467 581h0M691 587h0M714 224h0M618 642h0M702 198h0M525 80h0M904 537h0M251 504h0M311 471h0M738 688h0M914 545h0M514 441h0M166 94h0M830 771h0M777 206h0M593 211h0M320 639h0M868 79h0M731 582h0M658 176h0M345 606h0M213 192h0M461 192h0M267 183h0M221 143h0M401 314h0M156 198h0M393 121h0M297 102h0M695 158h0M452 168h0M644 771h0M664 132h0M206 189h0M827 130h0M717 625h0M780 376h0M406 323h0M617 418h0M665 385h0M788 501h0M273 374h0M239 730h0M72 359h0M416 507h0M123 554h0M150 270h0M312 123h0M929 114h0M843 564h0M867 497h0M523 391h0M524 308h0M189 491h0M744 774h0M847 505h0M214 472h0M176 689h0M710 341h0M321 710h0M423 126h0M631 374h0M136 686h0M219 208h0M506 249h0M330 394h0M867 495h0M419 669h0M864 730h0M53 650h0M728 583h0M685 544h0M216 740h0M745 243h0M510 205h0M242 521h0M156 76h0M586 513h0M847 90h0M309 156h0M853 650h0M167 410h0M650 516h0M465 459h0M219 114h0M172 436h0M159 707h0M293 79h0M612 548h0M700 391h0M854 557h0M870 642h0M276 380h0M216 525h0M379 402h0M360 197h0M561 593h0M344 163h0M583 519h0M524 667h0M877 619h0M569 746h0M537 443h0M216 302h0M357 262h0M276 202h0M123 471h0M422 648h0M682 739h0M849 149h0M622 737h0M104 169h0M49 199h0M882 703h0M158 73h0M126 693h0M321 480h0M354 373h0M602 747h0M88 372h0M672 637h0M594 272h0M54 235h0M534 714h0M560 500h0M375 610h0M903 411h0M609 452h0M258 723h0M97 373h0M862 482h0M381 220h0M365 608h0M643 517h0M885 335h0M286 518h0M867 579h0M802 667h0M50 529h0M251 560h0M739 650h0M202 338h0M172 666h0M664 472h0M524 600h0M439 200h0M889 627h0M476 475h0M216 238h0M79 548h0M762 259h0M205 381h0M285 615h0M252 257h0M395 689h0M671 154h0M156 107h0M632 541h0M180 273h0M797 105h0M688 666h0M619 299h0M696 734h0M532 518h0M571 739h0M906 548h0M469 159h0M469 375h0M642 420h0M247 214h0M704 481h0M723 209h0M431 154h0M186 321h0M277 756h0M125 439h0M114 708h0M123 687h0M314 328h0M118 521h0M95 551h0M510 268h0M615 580h0M89 727h0M818 645h0M861 317h0M146 381h0M856 559h0M128 611h0M757 402h0M614 697h0M411 638h0M543 636h0M793 176h0M200 492h0M343 284h0M30 389h0M928 364h0M224 338h0M570 89h0M183 448h0M358 570h0M147 115h0M851 611h0M609 504h0M203 177h0M430 562h0M446 430h0M102 753h0M245 350h0M755 752h0M361 395h0M786 422h0M137 226h0M334 72h0M87 714h0M780 667h0M303 321h0M875 108h0M420 332h0M699 563h0M925 766h0M576 731h0M568 219h0M488 263h0M848 647h0M122 537h0M610 625h0M162 489h0M128 377h0M355 326h0M398 441h0M130 450h0M98 575h0M62 419h0M33 633h0M878 606h0M440 403h0M710 125h0M350 416h0M186 400h0M346 170h0M560 384h0M143 455h0M233 479h0M317 587h0M568 72h0M333 616h0M333 625h0M806 736h0M707 377h0M462 132h0M295 259h0M748 635h0M597 620h0M417 531h0M351 80h0M501 702h0M478 720h0M378 253h0M173 380h0M309 149h0M311 756h0M732 373h0M241 427h0M330 516h0M283 518h0M720 272h0M229 478h0M546 705h0M761 402h0M474 637h0M548 157h0M373 153h0M633 632h0M602 109h0M395 83h0M645 612h0M211 585h0M75 174h0" stroke="#f0f0f0" stroke-width="2.7" stroke-linecap="round" opacity="0.32" filter="url(#sblur)"/><path d="M864 226h0M614 743h0M720 398h0M416 359h0M169 635h0M498 620h0M461 240h0M262 155h0M677 430h0M377 773h0M358 326h0M230 270h0M253 438h0M408 408h0M782 323h0M576 438h0M883 499h0M868 330h0M204 220h0M767 152h0M291 680h0M86 576h0M384 230h0M881 689h0M221 165h0M529 123h0M881 306h0M315 110h0M469 474h0M144 574h0M492 661h0M858 697h0M425 320h0M604 363h0M440 248h0M164 144h0M601 727h0M914 262h0M214 132h0M124 661h0M342 335h0M206 575h0M202 756h0M51 737h0M399 389h0M481 241h0M855 444h0M520 698h0M625 674h0M137 286h0M221 439h0M266 716h0M218 350h0M394 299h0M668 425h0M746 324h0M783 671h0M393 745h0M865 232h0M526 697h0M236 695h0M303 661h0M370 750h0M819 343h0M41 516h0M540 283h0M854 371h0M506 232h0M688 455h0M161 747h0M280 168h0M680 372h0M755 376h0M529 588h0M817 188h0M131 416h0M168 642h0M337 327h0M107 267h0M356 261h0M220 273h0M682 158h0M484 537h0M50 660h0M712 246h0M83 122h0M817 100h0M577 492h0M622 393h0M436 404h0M711 143h0M272 425h0M404 510h0M383 767h0M223 733h0M45 656h0M122 278h0M412 725h0M149 437h0M742 421h0M680 789h0M752 250h0M323 465h0M705 776h0M793 632h0M579 582h0M814 646h0M184 233h0M396 764h0M313 656h0M295 580h0M815 782h0M544 499h0M181 683h0M220 161h0M805 446h0M445 208h0M861 564h0M808 351h0M463 438h0M113 84h0M565 328h0M788 619h0M632 484h0M247 489h0M630 255h0M449 120h0M636 381h0M226 581h0M749 227h0M36 490h0M887 133h0M752 506h0M664 79h0M387 101h0M883 781h0M671 498h0M727 164h0M916 348h0M416 78h0M103 737h0M206 432h0M683 596h0M427 568h0M781 216h0M377 485h0M653 479h0M59 246h0M352 694h0M585 265h0M540 283h0M900 570h0M822 351h0M148 638h0M193 684h0M721 692h0M545 533h0M56 271h0M138 115h0M509 115h0M475 183h0M199 647h0M918 525h0M583 199h0M412 711h0M95 343h0M249 231h0M165 598h0M335 780h0M320 580h0M358 625h0M84 778h0M253 603h0M321 83h0M515 161h0M734 225h0M75 458h0M557 532h0M672 106h0M844 652h0M702 74h0M292 218h0M824 264h0M387 220h0M688 157h0M449 613h0M356 233h0M491 207h0M685 656h0M242 106h0M366 78h0M794 756h0M564 447h0M560 330h0M516 512h0M793 283h0M162 390h0M74 294h0M489 686h0M559 781h0M737 779h0M824 307h0M192 572h0M695 363h0M769 534h0M767 71h0M785 703h0M240 675h0M267 682h0M780 668h0M116 210h0M523 242h0M372 761h0M851 187h0M181 631h0M542 76h0M894 202h0M107 707h0M774 142h0M549 749h0M926 724h0M785 744h0M389 581h0M800 661h0M568 674h0M712 734h0M846 699h0M197 315h0M475 73h0M285 698h0M908 423h0M495 150h0M513 741h0M308 543h0M765 398h0M419 584h0M190 314h0M238 116h0M249 669h0M704 360h0M133 439h0M288 523h0M801 330h0M324 666h0M801 569h0M332 737h0M87 782h0M680 114h0M183 643h0M871 141h0M587 687h0M630 738h0M820 197h0M107 713h0M252 701h0M891 348h0M720 221h0M490 159h0M594 172h0M413 87h0M910 513h0M334 232h0M735 423h0M540 100h0M359 406h0M786 217h0M74 457h0M226 98h0M127 416h0M414 261h0M664 106h0M294 427h0M250 766h0M335 398h0M885 444h0M240 413h0M922 668h0M310 123h0M863 286h0M103 372h0M717 338h0M753 745h0M635 705h0M560 131h0M640 254h0M758 716h0M449 577h0M74 484h0M624 731h0M93 212h0M715 511h0M435 769h0M94 697h0M131 244h0M622 107h0M719 292h0M746 502h0M260 640h0M856 639h0M114 388h0M91 393h0M284 451h0M811 606h0M744 110h0M467 370h0M683 708h0M37 691h0M328 94h0M587 455h0M895 648h0M452 631h0M831 442h0M316 540h0M796 583h0M587 188h0M686 501h0M681 401h0M64 253h0M563 182h0M323 365h0M158 273h0M435 727h0M677 143h0M382 653h0M30 580h0M676 251h0M42 293h0M325 548h0M99 190h0M679 99h0M565 338h0M332 364h0M337 642h0M854 480h0M646 678h0M128 407h0M54 614h0M835 168h0M410 517h0M509 109h0M398 314h0M572 713h0M101 459h0M446 348h0M203 395h0M136 556h0M295 698h0M249 222h0M199 594h0M786 695h0M494 529h0M351 456h0M131 698h0M413 416h0M123 440h0M206 778h0M97 325h0M100 215h0M482 119h0M600 502h0M719 316h0M602 313h0M649 781h0M191 560h0M748 248h0M75 438h0M489 510h0M715 310h0M756 583h0M250 237h0M437 688h0M818 453h0M506 426h0M703 86h0M667 441h0M537 685h0M127 438h0M886 246h0M585 270h0M721 530h0M155 170h0M342 390h0M748 749h0M527 135h0M443 750h0M100 388h0M270 535h0M220 102h0M198 448h0M409 677h0M221 539h0M864 89h0M472 220h0M377 256h0M712 255h0M915 219h0M295 530h0M142 194h0M331 548h0M769 495h0M288 476h0M914 336h0M132 98h0M437 753h0M877 571h0M239 342h0M221 386h0M724 92h0M499 225h0M587 638h0M719 320h0M837 80h0M296 176h0M645 418h0M572 111h0M123 610h0M614 732h0M420 500h0M416 701h0M296 424h0M739 338h0M420 141h0M895 431h0M454 189h0M399 323h0M198 331h0M349 532h0M96 785h0M789 77h0M439 599h0M67 711h0M901 120h0M321 767h0M286 601h0M752 73h0M460 308h0M772 127h0M633 88h0M576 412h0M864 780h0M770 573h0M369 496h0M412 604h0M908 544h0M163 467h0M509 716h0M319 356h0M655 505h0M474 503h0M236 135h0M422 451h0M686 356h0M332 760h0M847 221h0M800 316h0M76 643h0M504 741h0M421 100h0M383 571h0M240 544h0M235 551h0M40 580h0M214 349h0M902 145h0M98 768h0M761 478h0M503 401h0M610 658h0M153 327h0M483 184h0M128 534h0M916 657h0M315 312h0M919 661h0M566 128h0M148 609h0M361 546h0M178 563h0M492 149h0M146 250h0M384 459h0M882 206h0M205 452h0M231 74h0M486 367h0M616 437h0M96 387h0M113 125h0M803 723h0M891 598h0M582 433h0M501 299h0M815 404h0M852 330h0M255 530h0M664 420h0M228 130h0M598 167h0M791 401h0M681 265h0M847 243h0M922 116h0M693 285h0M875 505h0M691 463h0M719 274h0M370 547h0M84 277h0M207 197h0M258 88h0M531 373h0M696 762h0M568 544h0M836 763h0M429 692h0M413 401h0M259 606h0M257 297h0M430 82h0M767 71h0M150 716h0M727 85h0M228 367h0M47 239h0M341 776h0M77 573h0M221 521h0M41 612h0M861 115h0M905 689h0M308 418h0M35 201h0M81 318h0M256 120h0M87 203h0M82 168h0M784 376h0M109 694h0M185 231h0M69 673h0M433 488h0M490 684h0M842 647h0M509 572h0M225 691h0M495 88h0M327 752h0M293 156h0M917 378h0M547 331h0" stroke="#f0f0f0" stroke-width="2.9" stroke-linecap="round" opacity="0.55" filter="url(#sblur)"/><path d="M264 302h0M870 422h0M671 512h0M251 722h0M856 170h0M73 592h0M165 694h0M469 441h0M278 470h0M311 82h0M512 698h0M630 405h0M794 105h0M222 335h0M50 135h0M750 409h0M619 203h0M849 734h0M335 213h0M341 275h0M375 563h0M720 718h0M583 662h0M614 127h0M186 240h0M127 257h0M632 605h0M434 463h0M607 563h0M416 331h0M499 488h0M153 401h0M481 618h0M287 760h0M681 518h0M481 193h0M337 293h0M459 123h0M49 788h0M37 286h0M393 781h0M337 278h0M467 522h0M818 566h0M98 720h0M847 145h0M768 728h0M787 741h0M306 528h0M731 669h0M573 707h0M624 346h0M882 366h0M124 727h0M364 642h0M828 633h0M650 304h0M487 354h0M758 296h0M426 628h0M132 637h0M529 558h0M642 245h0M830 517h0M351 147h0M215 95h0M292 169h0M57 108h0M122 227h0M116 292h0M126 184h0M553 340h0M645 236h0M616 273h0M416 252h0M112 789h0M262 72h0M584 111h0M122 234h0M212 339h0M332 292h0M730 345h0M840 575h0M826 381h0M333 488h0M929 127h0M643 664h0M527 159h0M928 306h0M860 412h0M136 454h0M296 292h0M832 719h0M548 542h0M628 393h0M721 507h0M923 648h0M828 97h0M450 179h0M305 123h0" stroke="#f0f0f0" stroke-width="3.3" stroke-linecap="round" opacity="0.85" filter="url(#sblur)"/><circle cx="507" cy="398" r="4.2" fill="url(#st)"/><circle cx="507" cy="398" r="1.5" fill="#fff"/><circle cx="275" cy="427" r="3.9" fill="url(#st)"/><circle cx="275" cy="427" r="1.4" fill="#fff"/><circle cx="229" cy="400" r="3.6" fill="url(#st)"/><circle cx="229" cy="400" r="1.3" fill="#fff"/><circle cx="265" cy="657" r="4.2" fill="url(#st)"/><circle cx="265" cy="657" r="1.5" fill="#fff"/><circle cx="303" cy="273" r="3.4" fill="url(#st)"/><circle cx="303" cy="273" r="1.2" fill="#fff"/><circle cx="238" cy="296" r="3.4" fill="url(#st)"/><circle cx="238" cy="296" r="1.2" fill="#fff"/><circle cx="330" cy="203" r="3.1" fill="url(#st)"/><circle cx="330" cy="203" r="1.1" fill="#fff"/><circle cx="102" cy="262" r="3.4" fill="url(#st)"/><circle cx="102" cy="262" r="1.2" fill="#fff"/><circle cx="63" cy="376" r="3.1" fill="url(#st)"/><circle cx="63" cy="376" r="1.1" fill="#fff"/><circle cx="200" cy="337" r="3.1" fill="url(#st)"/><circle cx="200" cy="337" r="1.1" fill="#fff"/><circle cx="574" cy="225" r="3.4" fill="url(#st)"/><circle cx="574" cy="225" r="1.2" fill="#fff"/><circle cx="680" cy="410" r="3.1" fill="url(#st)"/><circle cx="680" cy="410" r="1.1" fill="#fff"/><circle cx="700" cy="540" r="3.4" fill="url(#st)"/><circle cx="700" cy="540" r="1.2" fill="#fff"/><circle cx="820" cy="700" r="3.4" fill="url(#st)"/><circle cx="820" cy="700" r="1.2" fill="#fff"/><circle cx="571" cy="724" r="3.6" fill="url(#st)"/><circle cx="571" cy="724" r="1.3" fill="#fff"/><circle cx="760" cy="230" r="3.1" fill="url(#st)"/><circle cx="760" cy="230" r="1.1" fill="#fff"/><circle cx="860" cy="600" r="3.1" fill="url(#st)"/><circle cx="860" cy="600" r="1.1" fill="#fff"/><circle cx="120" cy="505" r="3.1" fill="url(#st)"/><circle cx="120" cy="505" r="1.1" fill="#fff"/><circle cx="620" cy="600" r="3.1" fill="url(#st)"/><circle cx="620" cy="600" r="1.1" fill="#fff"/><circle cx="470" cy="480" r="3.1" fill="url(#st)"/><circle cx="470" cy="480" r="1.1" fill="#fff"/><circle cx="150" cy="620" r="3.1" fill="url(#st)"/><circle cx="150" cy="620" r="1.1" fill="#fff"/><circle cx="447" cy="427" r="18" fill="url(#bigstar)"/><circle cx="447" cy="427" r="5.5" fill="#fff"/></g></defs></svg>
<div class="abs" style="left:0px;top:0px;width:940px;height:29px;background:linear-gradient(90deg,#1a2840 0%,#1c2a44 30%,#2a2e50 55%,#3a3458 75%,#4e3a5e 92%,#5a4a6a 100%)"></div><div class="abs" style="left:0px;top:0px;width:940px;height:1.5px;background:#b8b0cc"></div><div class="abs" style="left:0px;top:27.5px;width:940px;height:1.5px;background:#a8a0c0"></div><div class="abs" style="left:165px;top:4px;width:40px;height:20px;background:#5a7ac0;filter:blur(5px);opacity:.55"></div><div class="abs" style="left:240px;top:4px;width:30px;height:20px;background:#6a88c8;filter:blur(5px);opacity:.55"></div><div class="abs" style="left:330px;top:4px;width:35px;height:20px;background:#4a78c0;filter:blur(5px);opacity:.55"></div><div class="abs" style="left:360px;top:4px;width:25px;height:20px;background:#b04858;filter:blur(5px);opacity:.55"></div><div class="abs" style="left:400px;top:4px;width:28px;height:20px;background:#a0b8e0;filter:blur(5px);opacity:.55"></div><div class="abs" style="left:8px;top:2px;width:110px;height:26px;background:#dde4f0;filter:blur(9px);opacity:.55"></div><div class="abs" style="left:95px;top:3px;width:30px;height:20px;background:#c04050;filter:blur(6px);opacity:.45"></div><div class="abs" style="left:788px;top:0px;width:31px;height:20px;box-sizing:border-box;border:1px solid rgba(235,235,250,.75);border-top:none;box-shadow:inset 0 0 0 1px rgba(20,24,40,.55),0 0 0 1px rgba(20,24,40,.35);background:rgba(255,255,255,.06);border-radius:0 0 5px 5px"></div><svg class="abs" style="left:794px;top:4.5px" width="19" height="11" viewBox="0 0 19 11"><path d="M1 5.5L5.5 1v3h8V1L18 5.5 13.5 10V7h-8v3z" fill="#fff" stroke="#303040" stroke-width="1"/></svg><div class="abs" style="left:831px;top:0px;width:103px;height:20px;box-sizing:border-box;border:1px solid rgba(235,235,250,.75);border-top:none;box-shadow:inset 0 0 0 1px rgba(20,24,40,.55),0 0 0 1px rgba(20,24,40,.35);background:rgba(255,255,255,.06);border-radius:0 0 5px 5px"></div><div class="abs" style="left:860px;top:1px;width:1px;height:18px;background:rgba(230,230,245,.6);box-shadow:1px 0 0 rgba(20,24,40,.5)"></div><div class="abs" style="left:886px;top:1px;width:1px;height:18px;background:rgba(230,230,245,.6);box-shadow:1px 0 0 rgba(20,24,40,.5)"></div><div class="abs" style="left:840px;top:11px;width:11px;height:4px;background:#fff;box-shadow:0 0 0 1px rgba(30,30,50,.7)"></div><div class="abs" style="left:868px;top:5px;width:11px;height:9px;box-sizing:border-box;border:2.5px solid #fff;box-shadow:0 0 0 1px rgba(30,30,50,.7),inset 0 0 0 1px rgba(30,30,50,.6);opacity:1"></div><svg class="abs" style="left:903.5px;top:3.0px" width="13" height="13" viewBox="-6.5 -6.5 13 13"><path d="M-3.5 -3.5L3.5 3.5M3.5 -3.5L-3.5 3.5" stroke="#303040" stroke-width="3.8000000000000003" stroke-linecap="square"/><path d="M-3.5 -3.5L3.5 3.5M3.5 -3.5L-3.5 3.5" stroke="#fff" stroke-width="2.2" stroke-linecap="square"/></svg><div class="abs" style="left:-6px;top:29px;width:939px;height:19.5px;background:linear-gradient(#fbfcfe,#e9edf7 45%,#dde3f2);border-bottom:1px solid #b4b8c4;box-sizing:border-box"></div><div class="abs" style="left:-6px;top:48.5px;width:939px;height:26.5px;background:linear-gradient(#fdfdfd,#f4f4f4 60%,#ececec)"></div><div class="abs" style="left:-6px;top:75px;width:35px;height:710px;background:linear-gradient(90deg,#f8f8fa,#eeeff2)"></div><div class="abs" style="left:-6px;top:75px;width:1px;height:710px;background:#a8c4e8"></div><div class="abs" style="left:0px;top:81px;width:2px;height:2px;background:#a8a8b8"></div><div class="abs" style="left:4px;top:81px;width:2px;height:2px;background:#a8a8b8"></div><div class="abs" style="left:8px;top:81px;width:2px;height:2px;background:#a8a8b8"></div><svg class="abs" style="left:-1px;top:91px" width="16" height="16" viewBox="0 0 16 16"><path d="M1 8l6-6v3.5h8v5H7V14z" fill="#3a86d8" stroke="#1a5aa8" stroke-width=".8"/><path d="M3 8l4-4v2.3h7v1.5H4z" fill="#8cc0f0" opacity=".7"/></svg><svg class="abs" style="left:-1px;top:114px" width="16" height="16" viewBox="0 0 16 16"><path d="M15 8l-6-6v3.5H1v5h8V14z" fill="#3a86d8" stroke="#1a5aa8" stroke-width=".8"/><path d="M13 8L9 4v2.3H2v1.5h10z" fill="#8cc0f0" opacity=".7"/></svg><svg class="abs" style="left:-2px;top:136px" width="16" height="16" viewBox="0 0 16 16"><circle cx="8" cy="8" r="7" fill="#e8f2fc" stroke="#4a90d8" stroke-width="1.3"/><path d="M8 3.5V8h4M8 8l-3 3" stroke="#3a80d0" stroke-width="1.3" fill="none"/></svg><div class="abs" style="left:-1px;top:162px;width:2px;height:2px;background:#a8a8b8"></div><div class="abs" style="left:3px;top:162px;width:2px;height:2px;background:#a8a8b8"></div><div class="abs" style="left:7px;top:162px;width:2px;height:2px;background:#a8a8b8"></div><div class="abs" style="left:11px;top:162px;width:2px;height:2px;background:#a8a8b8"></div><div class="abs" style="left:15px;top:162px;width:2px;height:2px;background:#a8a8b8"></div><div class="abs" style="left:19px;top:162px;width:2px;height:2px;background:#a8a8b8"></div><div class="abs" style="left:-5px;top:168.5px;width:29px;height:19px;box-sizing:border-box;border:1px solid #5a9ae0"></div><svg class="abs" style="left:1px;top:170px" width="16" height="16" viewBox="0 0 16 16"><path d="M7.2 2L1 8l6.2 6z" fill="#2a78d8" stroke="#1a58a8" stroke-width=".6"/><path d="M8.8 2L15 8l-6.2 6z" fill="#2a78d8" stroke="#1a58a8" stroke-width=".6"/></svg><div class="abs" style="left:-5px;top:190.5px;width:30px;height:19.5px;box-sizing:border-box;border:1px solid #5a9ae0"></div><svg class="abs" style="left:2px;top:192px" width="16" height="16" viewBox="0 0 16 16"><path d="M8 1a4.8 4.8 0 0 0-2.8 8.7V12h5.6V9.7A4.8 4.8 0 0 0 8 1z" fill="#e4f0fa" stroke="#5a9ad8" stroke-width="1"/><rect x="5.5" y="12.5" width="5" height="2.5" fill="#a8c0d8" stroke="#5a8ab8" stroke-width=".6"/></svg><svg class="abs" style="left:-2px;top:215px" width="16" height="16" viewBox="0 0 16 16"><circle cx="6" cy="6" r="4.5" fill="#fff" stroke="#4a6aa0" stroke-width="1.2"/><path d="M9.3 9.3L15 15" stroke="#3a5a90" stroke-width="2.2"/></svg><svg class="abs" style="left:18px;top:225px" width="7" height="4"><path d="M0 0h7L3.5 4z" fill="#000"/></svg><svg class="abs" style="left:2px;top:238px" width="16" height="16" viewBox="0 0 16 16"><rect x="1" y="8" width="4" height="7" fill="#d83030" stroke="#901818" stroke-width=".5"/><rect x="6" y="5" width="4" height="10" fill="#30a030" stroke="#187018" stroke-width=".5"/><rect x="11" y="1" width="4" height="14" fill="#3a8ad8" stroke="#1a5aa8" stroke-width=".5"/></svg><svg class="abs" style="left:3.5px;top:264px" width="12" height="12" viewBox="0 0 16 16"><circle cx="8" cy="5" r="3" fill="#4aa0e8"/><path d="M2 15c0-4 2.5-6 6-6s6 2 6 6z" fill="#3a90d8"/></svg><div class="abs" style="left:-5px;top:283px;width:30px;height:19.5px;box-sizing:border-box;border:1px solid #5a9ae0"></div><svg class="abs" style="left:2px;top:284.5px" width="16" height="16" viewBox="0 0 16 16"><rect x="2" y="2.5" width="12" height="13" rx="1" fill="#d8b860" stroke="#a08030" stroke-width=".8"/><rect x="3.5" y="4" width="9" height="10.5" fill="#f4f8fc"/><rect x="5.5" y="1" width="5" height="3" rx="1" fill="#6a7a90"/></svg><svg class="abs" style="left:2px;top:307.5px" width="16" height="16" viewBox="0 0 16 16"><path d="M4 1l4 4 4-4" stroke="#3a78c0" stroke-width="1" fill="none"/><rect x="1" y="5" width="14" height="10" rx="1" fill="#2a70c8" stroke="#1a4a90" stroke-width=".8"/><rect x="3" y="7" width="10" height="6" fill="#58a8f0"/></svg><div class="t" style="left:4.0px;top:34.07px;font-size:11.5px;color:#5a6070;">File</div><div class="t" style="left:35.5px;top:34.07px;font-size:11.5px;color:#5a6070;">Edit</div><div class="t" style="left:69.4px;top:34.07px;font-size:11.5px;color:#5a6070;">Process</div><div class="t" style="left:123.0px;top:34.07px;font-size:11.5px;color:#5a6070;">Stack</div><div class="t" style="left:165.0px;top:34.07px;font-size:11.5px;color:#5a6070;">Color</div><div class="t" style="left:208.0px;top:34.07px;font-size:11.5px;color:#5a6070;">Window</div><div class="t" style="left:353.0px;top:34.07px;font-size:11.5px;color:#5a6070;">Version 2.86</div><div class="t" style="left:472.0px;top:34.07px;font-size:11.5px;color:#5a6070;">Help</div><div class="abs" style="left:3px;top:54px;width:2px;height:2px;background:#a8a8b8"></div><div class="abs" style="left:3px;top:58px;width:2px;height:2px;background:#a8a8b8"></div><div class="abs" style="left:3px;top:62px;width:2px;height:2px;background:#a8a8b8"></div><div class="abs" style="left:3px;top:66px;width:2px;height:2px;background:#a8a8b8"></div><svg class="abs" style="left:10px;top:54px" width="16" height="16" viewBox="0 0 16 16"><path d="M1 4h5l1.5 1.5H13v2H4.5L1 14z" fill="#e8c860" stroke="#a07820" stroke-width=".8"/><path d="M1 14l3-7h11l-3 7z" fill="#f8d868" stroke="#a07820" stroke-width=".8"/><path d="M9 3.5c2-2.5 5-2 5.5 1" fill="none" stroke="#3060b0" stroke-width="1.2"/><path d="M13.5 3l1.5 2 1-2.5z" fill="#3060b0"/></svg><svg class="abs" style="left:32px;top:61px" width="7" height="4"><path d="M0 0h7L3.5 4z" fill="#000"/></svg><svg class="abs" style="left:43px;top:54px" width="16" height="16" viewBox="0 0 16 16"><rect x="1" y="1" width="14" height="14" rx="1" fill="#4a50b8" stroke="#262a80" stroke-width=".8"/><rect x="3.5" y="1.5" width="9" height="6" fill="#e8ecf8"/><rect x="4.5" y="10" width="7" height="5" fill="#d0d4e8"/><rect x="5.5" y="11" width="2" height="3" fill="#262a80"/></svg><svg class="abs" style="left:63px;top:61px" width="7" height="4"><path d="M0 0h7L3.5 4z" fill="#000"/></svg><svg class="abs" style="left:75px;top:54px" width="16" height="16" viewBox="0 0 16 16"><path d="M2.5 1h7l4 4v10h-11z" fill="#fff" stroke="#808080" stroke-width=".9"/><path d="M9.5 1v4h4" fill="#e0e0e0" stroke="#808080" stroke-width=".9"/><rect x="3" y="9" width="10" height="6" fill="#e8eaf0"/></svg><svg class="abs" style="left:91px;top:61px" width="7" height="4"><path d="M0 0h7L3.5 4z" fill="#000"/></svg><div class="abs" style="left:104px;top:56px;width:1px;height:18px;background:#c8c8cc"></div><svg class="abs" style="left:111px;top:54px" width="16" height="16" viewBox="0 0 16 16"><circle cx="11" cy="5" r="3.8" fill="#f0c030" stroke="#b08010" stroke-width=".9"/><circle cx="11.5" cy="4.5" r="1.2" fill="#fff3b0"/><path d="M8.5 7.5L2 14l1.5 1.5L5 14l-1-1 1.5-1.5 1 1L10 9z" fill="#e8b828" stroke="#b08010" stroke-width=".7"/></svg><div class="abs" style="left:134px;top:56px;width:1px;height:18px;background:#c8c8cc"></div><svg class="abs" style="left:140px;top:54px" width="16" height="16" viewBox="0 0 16 16"><circle cx="8" cy="8" r="7" fill="#2f66c8" stroke="#1a3c90" stroke-width="1"/><circle cx="8" cy="8" r="5.6" fill="none" stroke="#b8d0f8" stroke-width=".9"/><text x="8" y="12" font-size="10" font-weight="bold" text-anchor="middle" fill="#fff" font-family="Liberation Sans">?</text></svg><div class="abs" style="left:161px;top:56px;width:1px;height:18px;background:#c8c8cc"></div><div class="abs" style="left:166px;top:54px;width:2px;height:2px;background:#a8a8b8"></div><div class="abs" style="left:166px;top:58px;width:2px;height:2px;background:#a8a8b8"></div><div class="abs" style="left:166px;top:62px;width:2px;height:2px;background:#a8a8b8"></div><div class="abs" style="left:166px;top:66px;width:2px;height:2px;background:#a8a8b8"></div><svg class="abs" style="left:174px;top:54px" width="16" height="16" viewBox="0 0 16 16"><rect x="1" y="4" width="14" height="11" rx="2" fill="#2e86d0" stroke="#1a5a98" stroke-width=".8"/><rect x="9.5" y="1.5" width="5" height="3" rx="1" fill="#2e86d0" stroke="#1a5a98" stroke-width=".8"/><circle cx="8" cy="9.5" r="3.8" fill="#c8e4fa" stroke="#1a5a98" stroke-width=".8"/><circle cx="8" cy="9.5" r="2" fill="#3a90d8"/></svg><svg class="abs" style="left:197px;top:54px" width="16" height="16" viewBox="0 0 16 16"><path d="M8 .8l2.1 4.6 5 .5-3.8 3.4 1.1 5L8 11.7l-4.4 2.6 1.1-5L.9 5.9l5-.5z" fill="#e83030" stroke="#a01010" stroke-width=".8"/><path d="M8 3l1.2 3 2.8.3" fill="none" stroke="#ffb0a0" stroke-width=".9"/></svg><svg class="abs" style="left:219px;top:54px" width="16" height="16" viewBox="0 0 16 16"><path d="M2 6.5h10V4l3 3.5-3 3.5V8.5H4v2L1 8" fill="#3070d0" stroke="#1a4a98" stroke-width=".6"/><path d="M14 10h-10v2.5L1 9.5 4 6v2h8" fill="none"/><path d="M14 9.5H4V7L1 10.5 4 14v-2.5h10z" fill="#3a80e0" stroke="#1a4a98" stroke-width=".6"/><path d="M2 4h10V1.5L15 5l-3 3.5V6H2z" fill="#3a80e0" stroke="#1a4a98" stroke-width=".6"/></svg><svg class="abs" style="left:241px;top:61px" width="7" height="4"><path d="M0 0h7L3.5 4z" fill="#000"/></svg><svg class="abs" style="left:252px;top:54px" width="16" height="16" viewBox="0 0 16 16"><rect x="1" y="1" width="14.5" height="14" fill="#f4f8fc" stroke="#5890c8" stroke-width="1"/><rect x="3" y="6.5" width="10" height="3" rx="1.5" fill="#d82020"/></svg><svg class="abs" style="left:274px;top:54px" width="16" height="16" viewBox="0 0 16 16"><path d="M3 3h10v2H6.5l3 3-3 3H13v2H3v-1.5L6.5 8 3 4.5z" fill="#50a0d8" stroke="#2a70a8" stroke-width=".5"/><rect x="3" y="8" width="10" height="5" fill="#3a90c8" opacity=".55"/></svg><svg class="abs" style="left:295px;top:61px" width="7" height="4"><path d="M0 0h7L3.5 4z" fill="#000"/></svg><div class="abs" style="left:306px;top:56px;width:1px;height:18px;background:#c8c8cc"></div><div class="abs" style="left:311px;top:54px;width:2px;height:2px;background:#a8a8b8"></div><div class="abs" style="left:311px;top:58px;width:2px;height:2px;background:#a8a8b8"></div><div class="abs" style="left:311px;top:62px;width:2px;height:2px;background:#a8a8b8"></div><div class="abs" style="left:311px;top:66px;width:2px;height:2px;background:#a8a8b8"></div><svg class="abs" style="left:320px;top:54px" width="16" height="16" viewBox="0 0 16 16"><path d="M2 1v15" stroke="#806010" stroke-width="1.2"/><path d="M2.5 2c3-1.5 5 1.5 8 0s4 0 5 .5v7c-1-.5-2-2-5 0s-5-1.5-8 0z" fill="#f8d820" stroke="#c8a010" stroke-width=".8"/></svg><svg class="abs" style="left:343px;top:54px" width="16" height="16" viewBox="0 0 16 16"><path d="M14.5 3.5l-2.2 2.2-2-2L12.5 1.5c-2-.8-4.5.6-4.3 3 0 .6.2 1 .3 1.4L1.5 12.5l2 2 6.6-7c.4.2.9.3 1.4.3 2.4.2 3.8-2.3 3-4.3z" fill="#5aa0e8" stroke="#2a68b8" stroke-width=".8"/></svg><svg class="abs" style="left:366px;top:54px" width="16" height="16" viewBox="0 0 16 16"><rect x="2.5" y="1" width="11" height="14.5" rx="1" fill="#e8f0f8" stroke="#3a70b0" stroke-width="1"/><rect x="4" y="2.5" width="8" height="3" fill="#30a040"/><g fill="#2a60b0"><rect x="4" y="7" width="2" height="1.6"/><rect x="7" y="7" width="2" height="1.6"/><rect x="10" y="7" width="2" height="1.6"/><rect x="4" y="9.7" width="2" height="1.6"/><rect x="7" y="9.7" width="2" height="1.6"/><rect x="10" y="9.7" width="2" height="1.6"/><rect x="4" y="12.4" width="2" height="1.6"/><rect x="7" y="12.4" width="2" height="1.6"/><rect x="10" y="12.4" width="2" height="1.6"/></g></svg><svg class="abs" style="left:388px;top:54px" width="16" height="16" viewBox="0 0 16 16"><path d="M9 .5c-1 3-5 5-5 9.5 0 3 2 5.5 4.5 5.5S13 13.5 13 10.5C13 7 10 6 11 2.5 10 3.5 9 3 9 .5z" fill="#f06818" stroke="#c03010" stroke-width=".6"/><path d="M8.5 7c-1 2-3 3-2.5 5.5.3 1.8 1.3 2.7 2.5 2.7s2.5-1 2.5-3c0-2-2-2.5-2.5-5.2z" fill="#ffd040"/></svg><div class="abs" style="left:410px;top:56px;width:1px;height:18px;background:#c8c8cc"></div><div class="abs" style="left:415px;top:54px;width:2px;height:2px;background:#a8a8b8"></div><div class="abs" style="left:415px;top:58px;width:2px;height:2px;background:#a8a8b8"></div><div class="abs" style="left:415px;top:62px;width:2px;height:2px;background:#a8a8b8"></div><div class="abs" style="left:415px;top:66px;width:2px;height:2px;background:#a8a8b8"></div><svg class="abs" style="left:423px;top:54px" width="16" height="16" viewBox="0 0 16 16"><circle cx="8" cy="8" r="7.5" fill="#2a8ce0"/><path d="M8 8V.5A7.5 7.5 0 0 1 15.5 8z" fill="#e84838"/><path d="M8 8H15.5A7.5 7.5 0 0 1 15.5 8" fill="#e84838"/><path d="M8 8V.5A7.5 7.5 0 0 0 1.5 11.8z" fill="#40b040"/><circle cx="8" cy="8" r="7.5" fill="none" stroke="#1a6098" stroke-width=".5" opacity=".5"/></svg><svg class="abs" style="left:446px;top:54px" width="16" height="16" viewBox="0 0 16 16"><rect x="1" y="1" width="15" height="14.5" fill="#d8d8d8" stroke="#a8a8a8" stroke-width="1"/><rect x="3" y="3" width="11" height="10" fill="#a8a8a8"/><rect x="9" y="8" width="3" height="3" fill="#c8c8c8"/></svg><svg class="abs" style="left:470px;top:54px" width="16" height="16" viewBox="0 0 16 16"><g fill="#dcdcdc"><circle cx="8" cy="8" r="5"/><path d="M8 0l1.2 3h-2.4zM8 16l1.2-3h-2.4zM0 8l3 1.2v-2.4zM16 8l-3 1.2v-2.4zM2.3 2.3l3 1.4-1.6 1.6zM13.7 13.7l-3-1.4 1.6-1.6zM2.3 13.7l1.4-3 1.6 1.6zM13.7 2.3l-1.4 3-1.6-1.6z"/></g></svg><svg class="abs" style="left:492px;top:54px" width="16" height="16" viewBox="0 0 16 16"><path d="M1 2.5C1 1 15 1 15 2.5L9.5 8.5V15h-3V8.5z" fill="#d8d8d8" stroke="#b8b8b8" stroke-width=".8"/><ellipse cx="8" cy="2.5" rx="7" ry="1.3" fill="#f0f0f0" stroke="#b8b8b8" stroke-width=".5"/></svg><div class="abs" style="left:514px;top:56px;width:1px;height:18px;background:#c8c8cc"></div><div class="abs" style="left:29px;top:75px;width:904px;height:710px;background:#000"></div><svg class="abs" style="left:37px;top:76px" width="883" height="703"><rect width="100%" height="100%" fill="#303030"/><use href="#sky" transform="translate(-37,-76)"/></svg><div class="abs" style="left:-6px;top:785px;width:939px;height:22px;background:#f0edec"></div><div class="abs" style="left:300px;top:813px;width:640px;height:6px;background:linear-gradient(rgba(0,0,0,.18),rgba(0,0,0,0))"></div><div class="abs" style="left:933px;top:29px;width:7px;height:784px;background:linear-gradient(90deg,#9fb2d0,#c8d6ec 50%,#a8bcd8)"></div><div class="abs" style="left:0px;top:807px;width:940px;height:6px;background:linear-gradient(#a8bee0,#c0d2ee 50%,#98b0d4);border-bottom:1px solid #304058"></div><div class="t" style="left:-4.0px;top:789.84px;font-size:12px;color:#000;">29</div><svg class="abs" style="left:0px;top:8px" width="16" height="16" viewBox="0 0 16 16">
<rect x="0.5" y="0.5" width="8.5" height="6" rx="1" fill="#e8c8c0"/><rect x="1.3" y="1.3" width="7" height="4.4" fill="#7a1408"/><path d="M3.5 3.5h3M5 2v3" stroke="#f0c020" stroke-width="1"/>
<rect x="3" y="5.2" width="9" height="5.8" rx="1" fill="#c8e8c0"/><rect x="3.8" y="6" width="7.4" height="4.2" fill="#2a8a28"/><path d="M5 7.6h5M5 9h5" stroke="#1a4a18" stroke-width=".7"/>
<rect x="6" y="9.8" width="9.5" height="6" rx="1" fill="#e8c0b8"/><rect x="6.8" y="10.6" width="7.9" height="4.4" fill="#a81410"/><path d="M8.5 12.8h4" stroke="#300808" stroke-width="1"/></svg><div class="t" style="left:17.0px;top:8.95px;font-size:11.4px;color:#000;text-shadow:0 0 6px #fff,0 0 10px #fff">NGC6960-003L_M</div>
<div class="abs" style="left:949px;top:5px;width:948px;height:808px;background:linear-gradient(90deg,#707890 0%,#3a4a6a 25%,#1e3058 50%,#28487a 80%,#2a3a60 100%);border:1px solid #0c1018;border-radius:7px 7px 0 0;box-sizing:border-box;box-shadow:inset 0 0 0 1px rgba(200,210,230,.45)"></div><div class="abs" style="left:953px;top:8px;width:200px;height:24px;background:#c8ccd8;filter:blur(9px);opacity:.5"></div><div class="abs" style="left:1745px;top:5.5px;width:31px;height:18.5px;box-sizing:border-box;border:1px solid rgba(235,235,250,.75);border-top:none;box-shadow:inset 0 0 0 1px rgba(20,24,40,.55),0 0 0 1px rgba(20,24,40,.35);background:rgba(255,255,255,.06);border-radius:0 0 5px 5px"></div><svg class="abs" style="left:1751px;top:9.2px" width="19" height="11" viewBox="0 0 19 11"><path d="M1 5.5L5.5 1v3h8V1L18 5.5 13.5 10V7h-8v3z" fill="#fff" stroke="#303040" stroke-width="1"/></svg><div class="abs" style="left:1787.5px;top:5.5px;width:104.0px;height:18.5px;box-sizing:border-box;border:1px solid rgba(235,235,250,.75);border-top:none;box-shadow:inset 0 0 0 1px rgba(20,24,40,.55),0 0 0 1px rgba(20,24,40,.35);background:rgba(255,255,255,.06);border-radius:0 0 5px 5px"></div><div class="abs" style="left:1816px;top:6.5px;width:1px;height:16.5px;background:rgba(230,230,245,.6);box-shadow:1px 0 0 rgba(20,24,40,.5)"></div><div class="abs" style="left:1844px;top:6.5px;width:1px;height:16.5px;background:rgba(230,230,245,.6);box-shadow:1px 0 0 rgba(20,24,40,.5)"></div><div class="abs" style="left:1797px;top:15.0px;width:11px;height:4px;background:#fff;box-shadow:0 0 0 1px rgba(30,30,50,.7)"></div><div class="abs" style="left:1825px;top:10.5px;width:11px;height:9px;box-sizing:border-box;border:2.5px solid #fff;box-shadow:0 0 0 1px rgba(30,30,50,.7),inset 0 0 0 1px rgba(30,30,50,.6);opacity:1"></div><svg class="abs" style="left:1861.25px;top:7.75px" width="13" height="13" viewBox="-6.5 -6.5 13 13"><path d="M-3.5 -3.5L3.5 3.5M3.5 -3.5L-3.5 3.5" stroke="#303040" stroke-width="3.8000000000000003" stroke-linecap="square"/><path d="M-3.5 -3.5L3.5 3.5M3.5 -3.5L-3.5 3.5" stroke="#fff" stroke-width="2.2" stroke-linecap="square"/></svg><div class="abs" style="left:955px;top:33px;width:937px;height:19.5px;background:linear-gradient(#fbfcfe,#e9edf7 45%,#dde3f2);border-bottom:1px solid #b4b8c4;box-sizing:border-box"></div><div class="abs" style="left:955px;top:52.5px;width:937px;height:26.5px;background:linear-gradient(#fdfdfd,#f4f4f4 60%,#ececec)"></div><div class="abs" style="left:955px;top:79px;width:35px;height:705px;background:linear-gradient(90deg,#f8f8fa,#eeeff2)"></div><div class="abs" style="left:955px;top:79px;width:1px;height:705px;background:#a8c4e8"></div><div class="abs" style="left:961px;top:85px;width:2px;height:2px;background:#a8a8b8"></div><div class="abs" style="left:965px;top:85px;width:2px;height:2px;background:#a8a8b8"></div><div class="abs" style="left:969px;top:85px;width:2px;height:2px;background:#a8a8b8"></div><svg class="abs" style="left:960px;top:95px" width="16" height="16" viewBox="0 0 16 16"><path d="M1 8l6-6v3.5h8v5H7V14z" fill="#3a86d8" stroke="#1a5aa8" stroke-width=".8"/><path d="M3 8l4-4v2.3h7v1.5H4z" fill="#8cc0f0" opacity=".7"/></svg><svg class="abs" style="left:960px;top:118px" width="16" height="16" viewBox="0 0 16 16"><path d="M15 8l-6-6v3.5H1v5h8V14z" fill="#3a86d8" stroke="#1a5aa8" stroke-width=".8"/><path d="M13 8L9 4v2.3H2v1.5h10z" fill="#8cc0f0" opacity=".7"/></svg><svg class="abs" style="left:959px;top:140px" width="16" height="16" viewBox="0 0 16 16"><circle cx="8" cy="8" r="7" fill="#e8f2fc" stroke="#4a90d8" stroke-width="1.3"/><path d="M8 3.5V8h4M8 8l-3 3" stroke="#3a80d0" stroke-width="1.3" fill="none"/></svg><div class="abs" style="left:960px;top:166px;width:2px;height:2px;background:#a8a8b8"></div><div class="abs" style="left:964px;top:166px;width:2px;height:2px;background:#a8a8b8"></div><div class="abs" style="left:968px;top:166px;width:2px;height:2px;background:#a8a8b8"></div><div class="abs" style="left:972px;top:166px;width:2px;height:2px;background:#a8a8b8"></div><div class="abs" style="left:976px;top:166px;width:2px;height:2px;background:#a8a8b8"></div><div class="abs" style="left:980px;top:166px;width:2px;height:2px;background:#a8a8b8"></div><div class="abs" style="left:956px;top:172.5px;width:29px;height:19px;box-sizing:border-box;border:1px solid #5a9ae0"></div><svg class="abs" style="left:962px;top:174px" width="16" height="16" viewBox="0 0 16 16"><path d="M7.2 2L1 8l6.2 6z" fill="#2a78d8" stroke="#1a58a8" stroke-width=".6"/><path d="M8.8 2L15 8l-6.2 6z" fill="#2a78d8" stroke="#1a58a8" stroke-width=".6"/></svg><div class="abs" style="left:956px;top:194.5px;width:30px;height:19.5px;box-sizing:border-box;border:1px solid #5a9ae0"></div><svg class="abs" style="left:963px;top:196px" width="16" height="16" viewBox="0 0 16 16"><path d="M8 1a4.8 4.8 0 0 0-2.8 8.7V12h5.6V9.7A4.8 4.8 0 0 0 8 1z" fill="#e4f0fa" stroke="#5a9ad8" stroke-width="1"/><rect x="5.5" y="12.5" width="5" height="2.5" fill="#a8c0d8" stroke="#5a8ab8" stroke-width=".6"/></svg><svg class="abs" style="left:959px;top:219px" width="16" height="16" viewBox="0 0 16 16"><circle cx="6" cy="6" r="4.5" fill="#fff" stroke="#4a6aa0" stroke-width="1.2"/><path d="M9.3 9.3L15 15" stroke="#3a5a90" stroke-width="2.2"/></svg><svg class="abs" style="left:979px;top:229px" width="7" height="4"><path d="M0 0h7L3.5 4z" fill="#000"/></svg><svg class="abs" style="left:963px;top:242px" width="16" height="16" viewBox="0 0 16 16"><rect x="1" y="8" width="4" height="7" fill="#d83030" stroke="#901818" stroke-width=".5"/><rect x="6" y="5" width="4" height="10" fill="#30a030" stroke="#187018" stroke-width=".5"/><rect x="11" y="1" width="4" height="14" fill="#3a8ad8" stroke="#1a5aa8" stroke-width=".5"/></svg><svg class="abs" style="left:964.5px;top:268px" width="12" height="12" viewBox="0 0 16 16"><circle cx="8" cy="5" r="3" fill="#4aa0e8"/><path d="M2 15c0-4 2.5-6 6-6s6 2 6 6z" fill="#3a90d8"/></svg><div class="abs" style="left:956px;top:287px;width:30px;height:19.5px;box-sizing:border-box;border:1px solid #5a9ae0"></div><svg class="abs" style="left:963px;top:288.5px" width="16" height="16" viewBox="0 0 16 16"><rect x="2" y="2.5" width="12" height="13" rx="1" fill="#d8b860" stroke="#a08030" stroke-width=".8"/><rect x="3.5" y="4" width="9" height="10.5" fill="#f4f8fc"/><rect x="5.5" y="1" width="5" height="3" rx="1" fill="#6a7a90"/></svg><svg class="abs" style="left:963px;top:311.5px" width="16" height="16" viewBox="0 0 16 16"><path d="M4 1l4 4 4-4" stroke="#3a78c0" stroke-width="1" fill="none"/><rect x="1" y="5" width="14" height="10" rx="1" fill="#2a70c8" stroke="#1a4a90" stroke-width=".8"/><rect x="3" y="7" width="10" height="6" fill="#58a8f0"/></svg><div class="t" style="left:965.0px;top:38.07px;font-size:11.5px;color:#5a6070;">File</div><div class="t" style="left:996.5px;top:38.07px;font-size:11.5px;color:#5a6070;">Edit</div><div class="t" style="left:1030.4px;top:38.07px;font-size:11.5px;color:#5a6070;">Process</div><div class="t" style="left:1084.0px;top:38.07px;font-size:11.5px;color:#5a6070;">Stack</div><div class="t" style="left:1126.0px;top:38.07px;font-size:11.5px;color:#5a6070;">Color</div><div class="t" style="left:1169.0px;top:38.07px;font-size:11.5px;color:#5a6070;">Window</div><div class="t" style="left:1314.0px;top:38.07px;font-size:11.5px;color:#5a6070;">Version 2.86</div><div class="t" style="left:1433.0px;top:38.07px;font-size:11.5px;color:#5a6070;">Help</div><div class="abs" style="left:964px;top:58px;width:2px;height:2px;background:#a8a8b8"></div><div class="abs" style="left:964px;top:62px;width:2px;height:2px;background:#a8a8b8"></div><div class="abs" style="left:964px;top:66px;width:2px;height:2px;background:#a8a8b8"></div><div class="abs" style="left:964px;top:70px;width:2px;height:2px;background:#a8a8b8"></div><svg class="abs" style="left:971px;top:58px" width="16" height="16" viewBox="0 0 16 16"><path d="M1 4h5l1.5 1.5H13v2H4.5L1 14z" fill="#e8c860" stroke="#a07820" stroke-width=".8"/><path d="M1 14l3-7h11l-3 7z" fill="#f8d868" stroke="#a07820" stroke-width=".8"/><path d="M9 3.5c2-2.5 5-2 5.5 1" fill="none" stroke="#3060b0" stroke-width="1.2"/><path d="M13.5 3l1.5 2 1-2.5z" fill="#3060b0"/></svg><svg class="abs" style="left:993px;top:65px" width="7" height="4"><path d="M0 0h7L3.5 4z" fill="#000"/></svg><svg class="abs" style="left:1004px;top:58px" width="16" height="16" viewBox="0 0 16 16"><rect x="1" y="1" width="14" height="14" rx="1" fill="#4a50b8" stroke="#262a80" stroke-width=".8"/><rect x="3.5" y="1.5" width="9" height="6" fill="#e8ecf8"/><rect x="4.5" y="10" width="7" height="5" fill="#d0d4e8"/><rect x="5.5" y="11" width="2" height="3" fill="#262a80"/></svg><svg class="abs" style="left:1024px;top:65px" width="7" height="4"><path d="M0 0h7L3.5 4z" fill="#000"/></svg><svg class="abs" style="left:1036px;top:58px" width="16" height="16" viewBox="0 0 16 16"><path d="M2.5 1h7l4 4v10h-11z" fill="#fff" stroke="#808080" stroke-width=".9"/><path d="M9.5 1v4h4" fill="#e0e0e0" stroke="#808080" stroke-width=".9"/><rect x="3" y="9" width="10" height="6" fill="#e8eaf0"/></svg><svg class="abs" style="left:1053px;top:65px" width="7" height="4"><path d="M0 0h7L3.5 4z" fill="#000"/></svg><div class="abs" style="left:1065px;top:60px;width:1px;height:18px;background:#c8c8cc"></div><svg class="abs" style="left:1072px;top:58px" width="16" height="16" viewBox="0 0 16 16"><circle cx="11" cy="5" r="3.8" fill="#f0c030" stroke="#b08010" stroke-width=".9"/><circle cx="11.5" cy="4.5" r="1.2" fill="#fff3b0"/><path d="M8.5 7.5L2 14l1.5 1.5L5 14l-1-1 1.5-1.5 1 1L10 9z" fill="#e8b828" stroke="#b08010" stroke-width=".7"/></svg><div class="abs" style="left:1094px;top:60px;width:1px;height:18px;background:#c8c8cc"></div><svg class="abs" style="left:1101px;top:58px" width="16" height="16" viewBox="0 0 16 16"><circle cx="8" cy="8" r="7" fill="#2f66c8" stroke="#1a3c90" stroke-width="1"/><circle cx="8" cy="8" r="5.6" fill="none" stroke="#b8d0f8" stroke-width=".9"/><text x="8" y="12" font-size="10" font-weight="bold" text-anchor="middle" fill="#fff" font-family="Liberation Sans">?</text></svg><div class="abs" style="left:1122px;top:60px;width:1px;height:18px;background:#c8c8cc"></div><div class="abs" style="left:1127px;top:58px;width:2px;height:2px;background:#a8a8b8"></div><div class="abs" style="left:1127px;top:62px;width:2px;height:2px;background:#a8a8b8"></div><div class="abs" style="left:1127px;top:66px;width:2px;height:2px;background:#a8a8b8"></div><div class="abs" style="left:1127px;top:70px;width:2px;height:2px;background:#a8a8b8"></div><svg class="abs" style="left:1135px;top:58px" width="16" height="16" viewBox="0 0 16 16"><rect x="1" y="4" width="14" height="11" rx="2" fill="#2e86d0" stroke="#1a5a98" stroke-width=".8"/><rect x="9.5" y="1.5" width="5" height="3" rx="1" fill="#2e86d0" stroke="#1a5a98" stroke-width=".8"/><circle cx="8" cy="9.5" r="3.8" fill="#c8e4fa" stroke="#1a5a98" stroke-width=".8"/><circle cx="8" cy="9.5" r="2" fill="#3a90d8"/></svg><svg class="abs" style="left:1158px;top:58px" width="16" height="16" viewBox="0 0 16 16"><path d="M8 .8l2.1 4.6 5 .5-3.8 3.4 1.1 5L8 11.7l-4.4 2.6 1.1-5L.9 5.9l5-.5z" fill="#e83030" stroke="#a01010" stroke-width=".8"/><path d="M8 3l1.2 3 2.8.3" fill="none" stroke="#ffb0a0" stroke-width=".9"/></svg><svg class="abs" style="left:1180px;top:58px" width="16" height="16" viewBox="0 0 16 16"><path d="M2 6.5h10V4l3 3.5-3 3.5V8.5H4v2L1 8" fill="#3070d0" stroke="#1a4a98" stroke-width=".6"/><path d="M14 10h-10v2.5L1 9.5 4 6v2h8" fill="none"/><path d="M14 9.5H4V7L1 10.5 4 14v-2.5h10z" fill="#3a80e0" stroke="#1a4a98" stroke-width=".6"/><path d="M2 4h10V1.5L15 5l-3 3.5V6H2z" fill="#3a80e0" stroke="#1a4a98" stroke-width=".6"/></svg><svg class="abs" style="left:1202px;top:65px" width="7" height="4"><path d="M0 0h7L3.5 4z" fill="#000"/></svg><svg class="abs" style="left:1213px;top:58px" width="16" height="16" viewBox="0 0 16 16"><rect x="1" y="1" width="14.5" height="14" fill="#f4f8fc" stroke="#5890c8" stroke-width="1"/><rect x="3" y="6.5" width="10" height="3" rx="1.5" fill="#d82020"/></svg><svg class="abs" style="left:1235px;top:58px" width="16" height="16" viewBox="0 0 16 16"><path d="M3 3h10v2H6.5l3 3-3 3H13v2H3v-1.5L6.5 8 3 4.5z" fill="#50a0d8" stroke="#2a70a8" stroke-width=".5"/><rect x="3" y="8" width="10" height="5" fill="#3a90c8" opacity=".55"/></svg><svg class="abs" style="left:1256px;top:65px" width="7" height="4"><path d="M0 0h7L3.5 4z" fill="#000"/></svg><div class="abs" style="left:1267px;top:60px;width:1px;height:18px;background:#c8c8cc"></div><div class="abs" style="left:1272px;top:58px;width:2px;height:2px;background:#a8a8b8"></div><div class="abs" style="left:1272px;top:62px;width:2px;height:2px;background:#a8a8b8"></div><div class="abs" style="left:1272px;top:66px;width:2px;height:2px;background:#a8a8b8"></div><div class="abs" style="left:1272px;top:70px;width:2px;height:2px;background:#a8a8b8"></div><svg class="abs" style="left:1281px;top:58px" width="16" height="16" viewBox="0 0 16 16"><path d="M2 1v15" stroke="#806010" stroke-width="1.2"/><path d="M2.5 2c3-1.5 5 1.5 8 0s4 0 5 .5v7c-1-.5-2-2-5 0s-5-1.5-8 0z" fill="#f8d820" stroke="#c8a010" stroke-width=".8"/></svg><svg class="abs" style="left:1304px;top:58px" width="16" height="16" viewBox="0 0 16 16"><path d="M14.5 3.5l-2.2 2.2-2-2L12.5 1.5c-2-.8-4.5.6-4.3 3 0 .6.2 1 .3 1.4L1.5 12.5l2 2 6.6-7c.4.2.9.3 1.4.3 2.4.2 3.8-2.3 3-4.3z" fill="#5aa0e8" stroke="#2a68b8" stroke-width=".8"/></svg><svg class="abs" style="left:1326px;top:58px" width="16" height="16" viewBox="0 0 16 16"><rect x="2.5" y="1" width="11" height="14.5" rx="1" fill="#e8f0f8" stroke="#3a70b0" stroke-width="1"/><rect x="4" y="2.5" width="8" height="3" fill="#30a040"/><g fill="#2a60b0"><rect x="4" y="7" width="2" height="1.6"/><rect x="7" y="7" width="2" height="1.6"/><rect x="10" y="7" width="2" height="1.6"/><rect x="4" y="9.7" width="2" height="1.6"/><rect x="7" y="9.7" width="2" height="1.6"/><rect x="10" y="9.7" width="2" height="1.6"/><rect x="4" y="12.4" width="2" height="1.6"/><rect x="7" y="12.4" width="2" height="1.6"/><rect x="10" y="12.4" width="2" height="1.6"/></g></svg><svg class="abs" style="left:1349px;top:58px" width="16" height="16" viewBox="0 0 16 16"><path d="M9 .5c-1 3-5 5-5 9.5 0 3 2 5.5 4.5 5.5S13 13.5 13 10.5C13 7 10 6 11 2.5 10 3.5 9 3 9 .5z" fill="#f06818" stroke="#c03010" stroke-width=".6"/><path d="M8.5 7c-1 2-3 3-2.5 5.5.3 1.8 1.3 2.7 2.5 2.7s2.5-1 2.5-3c0-2-2-2.5-2.5-5.2z" fill="#ffd040"/></svg><div class="abs" style="left:1371px;top:60px;width:1px;height:18px;background:#c8c8cc"></div><div class="abs" style="left:1376px;top:58px;width:2px;height:2px;background:#a8a8b8"></div><div class="abs" style="left:1376px;top:62px;width:2px;height:2px;background:#a8a8b8"></div><div class="abs" style="left:1376px;top:66px;width:2px;height:2px;background:#a8a8b8"></div><div class="abs" style="left:1376px;top:70px;width:2px;height:2px;background:#a8a8b8"></div><svg class="abs" style="left:1384px;top:58px" width="16" height="16" viewBox="0 0 16 16"><circle cx="8" cy="8" r="7.5" fill="#2a8ce0"/><path d="M8 8V.5A7.5 7.5 0 0 1 15.5 8z" fill="#e84838"/><path d="M8 8H15.5A7.5 7.5 0 0 1 15.5 8" fill="#e84838"/><path d="M8 8V.5A7.5 7.5 0 0 0 1.5 11.8z" fill="#40b040"/><circle cx="8" cy="8" r="7.5" fill="none" stroke="#1a6098" stroke-width=".5" opacity=".5"/></svg><svg class="abs" style="left:1407px;top:58px" width="16" height="16" viewBox="0 0 16 16"><rect x="1" y="1" width="15" height="14.5" fill="#d8d8d8" stroke="#a8a8a8" stroke-width="1"/><rect x="3" y="3" width="11" height="10" fill="#a8a8a8"/><rect x="9" y="8" width="3" height="3" fill="#c8c8c8"/></svg><svg class="abs" style="left:1431px;top:58px" width="16" height="16" viewBox="0 0 16 16"><g fill="#dcdcdc"><circle cx="8" cy="8" r="5"/><path d="M8 0l1.2 3h-2.4zM8 16l1.2-3h-2.4zM0 8l3 1.2v-2.4zM16 8l-3 1.2v-2.4zM2.3 2.3l3 1.4-1.6 1.6zM13.7 13.7l-3-1.4 1.6-1.6zM2.3 13.7l1.4-3 1.6 1.6zM13.7 2.3l-1.4 3-1.6-1.6z"/></g></svg><svg class="abs" style="left:1453px;top:58px" width="16" height="16" viewBox="0 0 16 16"><path d="M1 2.5C1 1 15 1 15 2.5L9.5 8.5V15h-3V8.5z" fill="#d8d8d8" stroke="#b8b8b8" stroke-width=".8"/><ellipse cx="8" cy="2.5" rx="7" ry="1.3" fill="#f0f0f0" stroke="#b8b8b8" stroke-width=".5"/></svg><div class="abs" style="left:1476px;top:60px;width:1px;height:18px;background:#c8c8cc"></div><div class="abs" style="left:989px;top:79px;width:903px;height:705px;background:#000"></div><svg class="abs" style="left:1004px;top:86px" width="888" height="698"><rect width="100%" height="100%" fill="#303030"/><use href="#sky" transform="translate(-71,-83)"/></svg><div class="abs" style="left:955px;top:784px;width:937px;height:22px;background:#f0edec"></div><div class="abs" style="left:949px;top:33px;width:6px;height:775px;background:linear-gradient(90deg,#28344c 0%,#a8bcdc 20%,#d0dcf0 50%,#a0b4d8 85%,#5a6a88 100%)"></div><div class="abs" style="left:1892px;top:33px;width:5px;height:780px;background:linear-gradient(90deg,#3a4060,#6a7090)"></div><div class="abs" style="left:1281px;top:813px;width:291px;height:6px;background:linear-gradient(rgba(0,0,0,.18),rgba(0,0,0,0))"></div><div class="abs" style="left:949px;top:806px;width:948px;height:7px;background:linear-gradient(90deg,#a8bee0 0%,#b8cce8 65%,#a0b4d8 66.5%,#2a2a48 67.5%,#3a3458 100%);border-bottom:1px solid #181828;box-sizing:border-box"></div><div class="abs" style="left:949px;top:807.5px;width:948px;height:1.5px;background:linear-gradient(90deg,rgba(255,255,255,.5),rgba(255,255,255,.3) 66%,rgba(200,200,230,.7) 67%,rgba(200,200,230,.6))"></div><div class="t" style="left:956.0px;top:789.84px;font-size:12px;color:#000;">3</div><div class="t" style="left:1281.0px;top:789.84px;font-size:12px;color:#000;">)</div><svg class="abs" style="left:956px;top:11px" width="16" height="16" viewBox="0 0 16 16">
<rect x="0.5" y="0.5" width="8.5" height="6" rx="1" fill="#e8c8c0"/><rect x="1.3" y="1.3" width="7" height="4.4" fill="#7a1408"/><path d="M3.5 3.5h3M5 2v3" stroke="#f0c020" stroke-width="1"/>
<rect x="3" y="5.2" width="9" height="5.8" rx="1" fill="#c8e8c0"/><rect x="3.8" y="6" width="7.4" height="4.2" fill="#2a8a28"/><path d="M5 7.6h5M5 9h5" stroke="#1a4a18" stroke-width=".7"/>
<rect x="6" y="9.8" width="9.5" height="6" rx="1" fill="#e8c0b8"/><rect x="6.8" y="10.6" width="7.9" height="4.4" fill="#a81410"/><path d="M8.5 12.8h4" stroke="#300808" stroke-width="1"/></svg><div class="t" style="left:977.5px;top:12.88px;font-size:11.6px;color:#000;text-shadow:0 0 6px #fff,0 0 10px #fff">NGC6960 Optolong-008L_M</div>
<div class="abs" style="left:0px;top:0px"><div class="abs" style="left:575.5px;top:36px;width:360.5px;height:123px;box-sizing:border-box;border:1px solid rgba(10,16,28,.85);border-radius:7px 7px 3px 3px;background:linear-gradient(#b0c6ea,#a0b6de 75%,#6a7a98 92%,#4a5878);box-shadow:inset 0 0 0 1px rgba(255,255,255,.4),0 2px 10px rgba(0,0,0,.45)"></div><div class="abs" style="left:576.5px;top:37px;width:358.5px;height:28.5px;border-radius:6px 6px 0 0;background:linear-gradient(90deg,#b8ccec 0%,#a8c0e8 35%,#b4caee 70%,#c4d4f0 100%)"></div><div class="abs" style="left:581px;top:64.5px;width:349px;height:89.5px;background:#f0f0f0;border:1px solid #5a6a80;box-sizing:border-box"></div><div class="abs" style="left:883px;top:37px;width:46px;height:19px;box-sizing:border-box;border:1px solid rgba(30,40,60,.6);border-top:none;border-radius:0 0 4px 4px;box-shadow:inset 0 0 0 1px rgba(255,255,255,.5);background:rgba(255,255,255,.18)"></div><svg class="abs" style="left:900.5px;top:38.8px" width="14" height="14" viewBox="-7.0 -7.0 14 14"><path d="M-4.0 -4.0L4.0 4.0M4.0 -4.0L-4.0 4.0" stroke="#283040" stroke-width="4.2" stroke-linecap="square"/><path d="M-4.0 -4.0L4.0 4.0M4.0 -4.0L-4.0 4.0" stroke="#fff" stroke-width="2.6" stroke-linecap="square"/></svg><svg class="abs" style="left:584px;top:44px" width="16" height="16" viewBox="0 0 16 16">
<rect x="0.5" y="0.5" width="8.5" height="6" rx="1" fill="#e8c8c0"/><rect x="1.3" y="1.3" width="7" height="4.4" fill="#7a1408"/><path d="M3.5 3.5h3M5 2v3" stroke="#f0c020" stroke-width="1"/>
<rect x="3" y="5.2" width="9" height="5.8" rx="1" fill="#c8e8c0"/><rect x="3.8" y="6" width="7.4" height="4.2" fill="#2a8a28"/><path d="M5 7.6h5M5 9h5" stroke="#1a4a18" stroke-width=".7"/>
<rect x="6" y="9.8" width="9.5" height="6" rx="1" fill="#e8c0b8"/><rect x="6.8" y="10.6" width="7.9" height="4.4" fill="#a81410"/><path d="M8.5 12.8h4" stroke="#300808" stroke-width="1"/></svg><div class="t" style="left:604.0px;top:44.84px;font-size:12px;color:#000;text-shadow:0 0 6px #fff,0 0 8px #fff">Magnification</div><div class="abs" style="left:591px;top:68px;width:13px;height:13px;box-sizing:border-box;border:1px solid #8e8f8f;background:linear-gradient(135deg,#dcdcdc,#fbfbfb);box-shadow:inset 0 0 0 1px #f4f4f4"></div><svg class="abs" style="left:591px;top:68px" width="13" height="13" viewBox="0 0 13 13"><path d="M3 6.2l2.3 3.3L10 2.5" fill="none" stroke="#4a5aa8" stroke-width="1.7"/></svg><div class="t" style="left:608.0px;top:68.69px;font-size:11px;color:#000;">Size to Window</div><div class="abs" style="left:591px;top:91.5px;width:13px;height:13px;box-sizing:border-box;border:1px solid #8e8f8f;background:linear-gradient(135deg,#dcdcdc,#fbfbfb);box-shadow:inset 0 0 0 1px #f4f4f4"></div><div class="t" style="left:608.0px;top:92.49px;font-size:11px;color:#000;">Show Pixels</div><div class="abs" style="left:736px;top:82px;width:46px;height:19px;background:#fff;border:1px solid #e2e5ea;box-sizing:border-box"></div><div class="t" style="left:736px;width:46px;text-align:center;top:85.77px;font-size:11.5px;color:#000">0.26</div><div class="abs" style="left:800px;top:83.5px;width:110px;height:21.0px;box-sizing:border-box;border:1px solid #adb2b5;border-radius:3px;background:#f0f0f0"></div><div class="t" style="left:800px;width:110px;text-align:center;top:88.69px;font-size:11px;color:#8d8d8d">Zoom to Selection</div><svg class="abs" style="left:594px;top:113px" width="326" height="6"><path d="M1.5 0v5M3.5 0v5M5.5 0v5M7.5 0v5M9.5 0v5M11.5 0v5M13.5 0v5M15.5 0v5M17.5 0v5M19.5 0v5M21.5 0v5M23.5 0v5M25.5 0v5M27.5 0v5M29.5 0v5M31.5 0v5M33.5 0v5M35.5 0v5M37.5 0v5M39.5 0v5M41.5 0v5M43.5 0v5M45.5 0v5M47.5 0v5M49.5 0v5M51.5 0v5M53.5 0v5M55.5 0v5M57.5 0v5M59.5 0v5M61.5 0v5M63.5 0v5M65.5 0v5M67.5 0v5M69.5 0v5M71.5 0v5M73.5 0v5M75.5 0v5M77.5 0v5M79.5 0v5M81.5 0v5M83.5 0v5M85.5 0v5M87.5 0v5M89.5 0v5M91.5 0v5M93.5 0v5M95.5 0v5M97.5 0v5M99.5 0v5M101.5 0v5M103.5 0v5M105.5 0v5M107.5 0v5M109.5 0v5M111.5 0v5M113.5 0v5M115.5 0v5M117.5 0v5M119.5 0v5M121.5 0v5M123.5 0v5M125.5 0v5M127.5 0v5M129.5 0v5M131.5 0v5M133.5 0v5M135.5 0v5M137.5 0v5M139.5 0v5M141.5 0v5M143.5 0v5M145.5 0v5M147.5 0v5M149.5 0v5M151.5 0v5M153.5 0v5M155.5 0v5M157.5 0v5M159.5 0v5M161.5 0v5M163.5 0v5M165.5 0v5M167.5 0v5M169.5 0v5M171.5 0v5M173.5 0v5M175.5 0v5M177.5 0v5M179.5 0v5M181.5 0v5M183.5 0v5M185.5 0v5M187.5 0v5M189.5 0v5M191.5 0v5M193.5 0v5M195.5 0v5M197.5 0v5M199.5 0v5M201.5 0v5M203.5 0v5M205.5 0v5M207.5 0v5M209.5 0v5M211.5 0v5M213.5 0v5M215.5 0v5M217.5 0v5M219.5 0v5M221.5 0v5M223.5 0v5M225.5 0v5M227.5 0v5M229.5 0v5M231.5 0v5M233.5 0v5M235.5 0v5M237.5 0v5M239.5 0v5M241.5 0v5M243.5 0v5M245.5 0v5M247.5 0v5M249.5 0v5M251.5 0v5M253.5 0v5M255.5 0v5M257.5 0v5M259.5 0v5M261.5 0v5M263.5 0v5M265.5 0v5M267.5 0v5M269.5 0v5M271.5 0v5M273.5 0v5M275.5 0v5M277.5 0v5M279.5 0v5M281.5 0v5M283.5 0v5M285.5 0v5M287.5 0v5M289.5 0v5M291.5 0v5M293.5 0v5M295.5 0v5M297.5 0v5M299.5 0v5M301.5 0v5M303.5 0v5M305.5 0v5M307.5 0v5M309.5 0v5M311.5 0v5M313.5 0v5M315.5 0v5M317.5 0v5M319.5 0v5M321.5 0v5" stroke="#a8a8a8" stroke-width="1" opacity=".8"/></svg><div class="abs" style="left:591px;top:126px;width:330px;height:1px;background:#b8b8b8"></div><div class="abs" style="left:591px;top:127px;width:330px;height:1px;background:#fff"></div><svg class="abs" style="left:619px;top:118px" width="12" height="18" viewBox="0 0 12 18"><path d="M1 6L6 1l5 5v11H1z" fill="#e6e6e6" stroke="#8a8a8a" stroke-width="1"/><path d="M2.5 7L6 3.2 9.5 7v8.5h-7z" fill="#d8d8d8"/></svg></div>
<div class="abs" style="left:979.5px;top:14.5px"><div class="abs" style="left:575.5px;top:36px;width:360.5px;height:123px;box-sizing:border-box;border:1px solid rgba(10,16,28,.85);border-radius:7px 7px 3px 3px;background:linear-gradient(#a8bcdc,#98acd4 75%,#5a6a88 92%,#3a4868);box-shadow:inset 0 0 0 1px rgba(255,255,255,.4),0 2px 10px rgba(0,0,0,.45)"></div><div class="abs" style="left:576.5px;top:37px;width:358.5px;height:28.5px;border-radius:6px 6px 0 0;background:linear-gradient(90deg,#c0d0ec 0%,#a8bce0 40%,#9cb0d8 70%,#8a98b8 100%)"></div><div class="abs" style="left:581px;top:64.5px;width:349px;height:89.5px;background:#f0f0f0;border:1px solid #5a6a80;box-sizing:border-box"></div><div class="abs" style="left:883px;top:37px;width:46px;height:19px;box-sizing:border-box;border:1px solid rgba(30,40,60,.6);border-top:none;border-radius:0 0 4px 4px;box-shadow:inset 0 0 0 1px rgba(255,255,255,.5);background:rgba(255,255,255,.18)"></div><svg class="abs" style="left:900.5px;top:38.8px" width="14" height="14" viewBox="-7.0 -7.0 14 14"><path d="M-4.0 -4.0L4.0 4.0M4.0 -4.0L-4.0 4.0" stroke="#283040" stroke-width="4.2" stroke-linecap="square"/><path d="M-4.0 -4.0L4.0 4.0M4.0 -4.0L-4.0 4.0" stroke="#fff" stroke-width="2.6" stroke-linecap="square"/></svg><svg class="abs" style="left:584px;top:44px" width="16" height="16" viewBox="0 0 16 16">
<rect x="0.5" y="0.5" width="8.5" height="6" rx="1" fill="#e8c8c0"/><rect x="1.3" y="1.3" width="7" height="4.4" fill="#7a1408"/><path d="M3.5 3.5h3M5 2v3" stroke="#f0c020" stroke-width="1"/>
<rect x="3" y="5.2" width="9" height="5.8" rx="1" fill="#c8e8c0"/><rect x="3.8" y="6" width="7.4" height="4.2" fill="#2a8a28"/><path d="M5 7.6h5M5 9h5" stroke="#1a4a18" stroke-width=".7"/>
<rect x="6" y="9.8" width="9.5" height="6" rx="1" fill="#e8c0b8"/><rect x="6.8" y="10.6" width="7.9" height="4.4" fill="#a81410"/><path d="M8.5 12.8h4" stroke="#300808" stroke-width="1"/></svg><div class="t" style="left:604.0px;top:44.84px;font-size:12px;color:#000;text-shadow:0 0 6px #fff,0 0 8px #fff">Magnification</div><div class="abs" style="left:591px;top:68px;width:13px;height:13px;box-sizing:border-box;border:1px solid #8e8f8f;background:linear-gradient(135deg,#dcdcdc,#fbfbfb);box-shadow:inset 0 0 0 1px #f4f4f4"></div><svg class="abs" style="left:591px;top:68px" width="13" height="13" viewBox="0 0 13 13"><path d="M3 6.2l2.3 3.3L10 2.5" fill="none" stroke="#4a5aa8" stroke-width="1.7"/></svg><div class="t" style="left:608.0px;top:68.69px;font-size:11px;color:#000;">Size to Window</div><div class="abs" style="left:591px;top:91.5px;width:13px;height:13px;box-sizing:border-box;border:1px solid #8e8f8f;background:linear-gradient(135deg,#dcdcdc,#fbfbfb);box-shadow:inset 0 0 0 1px #f4f4f4"></div><div class="t" style="left:608.0px;top:92.49px;font-size:11px;color:#000;">Show Pixels</div><div class="abs" style="left:736px;top:82px;width:46px;height:19px;background:#fff;border:1px solid #e2e5ea;box-sizing:border-box"></div><div class="t" style="left:736px;width:46px;text-align:center;top:85.77px;font-size:11.5px;color:#000">0.26</div><div class="abs" style="left:800px;top:83.5px;width:110px;height:21.0px;box-sizing:border-box;border:1px solid #adb2b5;border-radius:3px;background:#f0f0f0"></div><div class="t" style="left:800px;width:110px;text-align:center;top:88.69px;font-size:11px;color:#8d8d8d">Zoom to Selection</div><svg class="abs" style="left:594px;top:113px" width="326" height="6"><path d="M1.5 0v5M3.5 0v5M5.5 0v5M7.5 0v5M9.5 0v5M11.5 0v5M13.5 0v5M15.5 0v5M17.5 0v5M19.5 0v5M21.5 0v5M23.5 0v5M25.5 0v5M27.5 0v5M29.5 0v5M31.5 0v5M33.5 0v5M35.5 0v5M37.5 0v5M39.5 0v5M41.5 0v5M43.5 0v5M45.5 0v5M47.5 0v5M49.5 0v5M51.5 0v5M53.5 0v5M55.5 0v5M57.5 0v5M59.5 0v5M61.5 0v5M63.5 0v5M65.5 0v5M67.5 0v5M69.5 0v5M71.5 0v5M73.5 0v5M75.5 0v5M77.5 0v5M79.5 0v5M81.5 0v5M83.5 0v5M85.5 0v5M87.5 0v5M89.5 0v5M91.5 0v5M93.5 0v5M95.5 0v5M97.5 0v5M99.5 0v5M101.5 0v5M103.5 0v5M105.5 0v5M107.5 0v5M109.5 0v5M111.5 0v5M113.5 0v5M115.5 0v5M117.5 0v5M119.5 0v5M121.5 0v5M123.5 0v5M125.5 0v5M127.5 0v5M129.5 0v5M131.5 0v5M133.5 0v5M135.5 0v5M137.5 0v5M139.5 0v5M141.5 0v5M143.5 0v5M145.5 0v5M147.5 0v5M149.5 0v5M151.5 0v5M153.5 0v5M155.5 0v5M157.5 0v5M159.5 0v5M161.5 0v5M163.5 0v5M165.5 0v5M167.5 0v5M169.5 0v5M171.5 0v5M173.5 0v5M175.5 0v5M177.5 0v5M179.5 0v5M181.5 0v5M183.5 0v5M185.5 0v5M187.5 0v5M189.5 0v5M191.5 0v5M193.5 0v5M195.5 0v5M197.5 0v5M199.5 0v5M201.5 0v5M203.5 0v5M205.5 0v5M207.5 0v5M209.5 0v5M211.5 0v5M213.5 0v5M215.5 0v5M217.5 0v5M219.5 0v5M221.5 0v5M223.5 0v5M225.5 0v5M227.5 0v5M229.5 0v5M231.5 0v5M233.5 0v5M235.5 0v5M237.5 0v5M239.5 0v5M241.5 0v5M243.5 0v5M245.5 0v5M247.5 0v5M249.5 0v5M251.5 0v5M253.5 0v5M255.5 0v5M257.5 0v5M259.5 0v5M261.5 0v5M263.5 0v5M265.5 0v5M267.5 0v5M269.5 0v5M271.5 0v5M273.5 0v5M275.5 0v5M277.5 0v5M279.5 0v5M281.5 0v5M283.5 0v5M285.5 0v5M287.5 0v5M289.5 0v5M291.5 0v5M293.5 0v5M295.5 0v5M297.5 0v5M299.5 0v5M301.5 0v5M303.5 0v5M305.5 0v5M307.5 0v5M309.5 0v5M311.5 0v5M313.5 0v5M315.5 0v5M317.5 0v5M319.5 0v5M321.5 0v5" stroke="#a8a8a8" stroke-width="1" opacity=".8"/></svg><div class="abs" style="left:591px;top:126px;width:330px;height:1px;background:#b8b8b8"></div><div class="abs" style="left:591px;top:127px;width:330px;height:1px;background:#fff"></div><svg class="abs" style="left:619px;top:118px" width="12" height="18" viewBox="0 0 12 18"><path d="M1 6L6 1l5 5v11H1z" fill="#e6e6e6" stroke="#8a8a8a" stroke-width="1"/><path d="M2.5 7L6 3.2 9.5 7v8.5h-7z" fill="#d8d8d8"/></svg></div>
<div class="abs" style="left:0px;top:0px"><div class="abs" style="left:6px;top:94px;width:102px;height:103px;box-sizing:border-box;border:1px solid rgba(10,16,28,.85);border-radius:7px 7px 3px 3px;background:linear-gradient(90deg,#b8c8dc 0%,#7a8aa2 30%,#4e5a6e 60%,#4a5668 100%);box-shadow:inset 0 0 0 1px rgba(255,255,255,.4),0 2px 10px rgba(0,0,0,.45)"></div><div class="abs" style="left:7px;top:95px;width:100px;height:27px;border-radius:6px 6px 0 0;background:linear-gradient(90deg,#c0cee0 0%,#8898b0 30%,#566478 55%,#4c586c 100%)"></div><div class="abs" style="left:11px;top:121px;width:93px;height:71px;background:#f0f0f0;border:1px solid #5a6a80;box-sizing:border-box"></div><div class="abs" style="left:18px;top:100px;width:40px;height:20px;background:rgba(255,255,255,0.45);filter:blur(7px);border-radius:10px"></div><div class="abs" style="left:57px;top:95px;width:45px;height:17.5px;box-sizing:border-box;border:1px solid rgba(20,28,40,.75);border-top:none;border-radius:0 0 4px 4px;box-shadow:inset 0 0 0 1px rgba(255,255,255,.4);background:rgba(255,255,255,.08)"></div><svg class="abs" style="left:73.0px;top:96.5px" width="13" height="13" viewBox="-6.5 -6.5 13 13"><path d="M-3.5 -3.5L3.5 3.5M3.5 -3.5L-3.5 3.5" stroke="#1a2030" stroke-width="3.8000000000000003" stroke-linecap="square"/><path d="M-3.5 -3.5L3.5 3.5M3.5 -3.5L-3.5 3.5" stroke="#fff" stroke-width="2.2" stroke-linecap="square"/></svg><svg class="abs" style="left:13px;top:101px" width="16" height="16" viewBox="0 0 16 16">
<rect x="0.5" y="0.5" width="8.5" height="6" rx="1" fill="#e8c8c0"/><rect x="1.3" y="1.3" width="7" height="4.4" fill="#7a1408"/><path d="M3.5 3.5h3M5 2v3" stroke="#f0c020" stroke-width="1"/>
<rect x="3" y="5.2" width="9" height="5.8" rx="1" fill="#c8e8c0"/><rect x="3.8" y="6" width="7.4" height="4.2" fill="#2a8a28"/><path d="M5 7.6h5M5 9h5" stroke="#1a4a18" stroke-width=".7"/>
<rect x="6" y="9.8" width="9.5" height="6" rx="1" fill="#e8c0b8"/><rect x="6.8" y="10.6" width="7.9" height="4.4" fill="#a81410"/><path d="M8.5 12.8h4" stroke="#300808" stroke-width="1"/></svg><div class="t" style="left:34.5px;top:101.34px;font-size:12px;color:#000;text-shadow:0 0 5px #fff,0 0 8px #fff">Se...</div><div class="abs" style="left:18px;top:128px;width:30px;height:20px;box-sizing:border-box;border:1px solid #707070;border-radius:3px;background:linear-gradient(#f2f2f2 0%,#ebebeb 48%,#dddddd 52%,#cfcfcf 100%);box-shadow:inset 0 0 0 1px rgba(255,255,255,.7)"></div><div class="t" style="left:18px;width:30px;text-align:center;top:131.84px;font-size:12px;color:#000"></div><div class="abs" style="left:64px;top:128px;width:32px;height:20px;box-sizing:border-box;border:1px solid #3c7fb1;border-radius:3px;background:linear-gradient(#f4f6f8 0%,#eceef0 48%,#dfe2e4 52%,#d6d8da 100%);box-shadow:inset 0 0 0 2px #6cc8f0"></div><div class="t" style="left:64px;width:32px;text-align:center;top:131.84px;font-size:12px;color:#000"></div><svg class="abs" style="left:29px;top:134px" width="9" height="9" viewBox="0 0 9 9"><path d="M7.5 1L1 4.5 7.5 8 4.5 4.5z" fill="#000"/></svg><svg class="abs" style="left:76px;top:134px" width="9" height="9" viewBox="0 0 9 9"><path d="M1.5 1L8 4.5 1.5 8 4.5 4.5z" fill="#000"/></svg><div class="abs" style="left:20px;top:160px;width:76px;height:21px;box-sizing:border-box;border:1px solid #707070;border-radius:3px;background:linear-gradient(#f2f2f2 0%,#ebebeb 48%,#dddddd 52%,#cfcfcf 100%);box-shadow:inset 0 0 0 1px rgba(255,255,255,.7)"></div><div class="t" style="left:20px;width:76px;text-align:center;top:165.27px;font-size:11.5px;color:#000">Blink</div></div>
<div class="abs" style="left:979px;top:10px"><div class="abs" style="left:6px;top:94px;width:102px;height:103px;box-sizing:border-box;border:1px solid rgba(10,16,28,.85);border-radius:7px 7px 3px 3px;background:linear-gradient(90deg,#b8c8dc 0%,#7a8aa2 30%,#4e5a6e 60%,#4a5668 100%);box-shadow:inset 0 0 0 1px rgba(255,255,255,.4),0 2px 10px rgba(0,0,0,.45)"></div><div class="abs" style="left:7px;top:95px;width:100px;height:27px;border-radius:6px 6px 0 0;background:linear-gradient(90deg,#c0cee0 0%,#8898b0 30%,#566478 55%,#4c586c 100%)"></div><div class="abs" style="left:11px;top:121px;width:93px;height:71px;background:#f0f0f0;border:1px solid #5a6a80;box-sizing:border-box"></div><div class="abs" style="left:18px;top:100px;width:40px;height:20px;background:rgba(255,255,255,0.45);filter:blur(7px);border-radius:10px"></div><div class="abs" style="left:57px;top:95px;width:45px;height:17.5px;box-sizing:border-box;border:1px solid rgba(20,28,40,.75);border-top:none;border-radius:0 0 4px 4px;box-shadow:inset 0 0 0 1px rgba(255,255,255,.4);background:rgba(255,255,255,.08)"></div><svg class="abs" style="left:73.0px;top:96.5px" width="13" height="13" viewBox="-6.5 -6.5 13 13"><path d="M-3.5 -3.5L3.5 3.5M3.5 -3.5L-3.5 3.5" stroke="#1a2030" stroke-width="3.8000000000000003" stroke-linecap="square"/><path d="M-3.5 -3.5L3.5 3.5M3.5 -3.5L-3.5 3.5" stroke="#fff" stroke-width="2.2" stroke-linecap="square"/></svg><svg class="abs" style="left:13px;top:101px" width="16" height="16" viewBox="0 0 16 16">
<rect x="0.5" y="0.5" width="8.5" height="6" rx="1" fill="#e8c8c0"/><rect x="1.3" y="1.3" width="7" height="4.4" fill="#7a1408"/><path d="M3.5 3.5h3M5 2v3" stroke="#f0c020" stroke-width="1"/>
<rect x="3" y="5.2" width="9" height="5.8" rx="1" fill="#c8e8c0"/><rect x="3.8" y="6" width="7.4" height="4.2" fill="#2a8a28"/><path d="M5 7.6h5M5 9h5" stroke="#1a4a18" stroke-width=".7"/>
<rect x="6" y="9.8" width="9.5" height="6" rx="1" fill="#e8c0b8"/><rect x="6.8" y="10.6" width="7.9" height="4.4" fill="#a81410"/><path d="M8.5 12.8h4" stroke="#300808" stroke-width="1"/></svg><div class="t" style="left:34.5px;top:101.34px;font-size:12px;color:#000;text-shadow:0 0 5px #fff,0 0 8px #fff">Se...</div><div class="abs" style="left:18px;top:128px;width:30px;height:20px;box-sizing:border-box;border:1px solid #3c7fb1;border-radius:3px;background:linear-gradient(#f4f6f8 0%,#eceef0 48%,#dfe2e4 52%,#d6d8da 100%);box-shadow:inset 0 0 0 2px #6cc8f0"></div><div class="t" style="left:18px;width:30px;text-align:center;top:131.84px;font-size:12px;color:#000"></div><div class="abs" style="left:64px;top:128px;width:32px;height:20px;box-sizing:border-box;border:1px solid #707070;border-radius:3px;background:linear-gradient(#f2f2f2 0%,#ebebeb 48%,#dddddd 52%,#cfcfcf 100%);box-shadow:inset 0 0 0 1px rgba(255,255,255,.7)"></div><div class="t" style="left:64px;width:32px;text-align:center;top:131.84px;font-size:12px;color:#000"></div><svg class="abs" style="left:29px;top:134px" width="9" height="9" viewBox="0 0 9 9"><path d="M7.5 1L1 4.5 7.5 8 4.5 4.5z" fill="#000"/></svg><svg class="abs" style="left:76px;top:134px" width="9" height="9" viewBox="0 0 9 9"><path d="M1.5 1L8 4.5 1.5 8 4.5 4.5z" fill="#000"/></svg><div class="abs" style="left:20px;top:160px;width:76px;height:21px;box-sizing:border-box;border:1px solid #707070;border-radius:3px;background:linear-gradient(#f2f2f2 0%,#ebebeb 48%,#dddddd 52%,#cfcfcf 100%);box-shadow:inset 0 0 0 1px rgba(255,255,255,.7)"></div><div class="t" style="left:20px;width:76px;text-align:center;top:165.27px;font-size:11.5px;color:#000">Blink</div></div>
<div class="abs" style="left:0px;top:0px"><div class="abs" style="left:7px;top:701.5px;width:318px;height:260.5px;box-sizing:border-box;border:1px solid rgba(10,16,28,.85);border-radius:7px 7px 3px 3px;background:linear-gradient(#7a8aa8,#a8bcdc 12%,#c0d2ec 55%,#a8bcdc);box-shadow:inset 0 0 0 1px rgba(255,255,255,.4),0 2px 10px rgba(0,0,0,.45)"></div><div class="abs" style="left:8px;top:702.5px;width:316px;height:27.5px;border-radius:6px 6px 0 0;background:linear-gradient(90deg,#8a9ab4 0%,#5a6a88 28%,#3e4c68 55%,#4a5874 100%)"></div><div class="abs" style="left:12.5px;top:729px;width:307.5px;height:228px;background:#f0f0f0;border:1px solid #5a6a80;box-sizing:border-box"></div><div class="abs" style="left:14px;top:705px;width:100px;height:22px;background:rgba(255,255,255,0.6);filter:blur(7px);border-radius:10px"></div><div class="abs" style="left:172px;top:702px;width:31px;height:19px;box-sizing:border-box;border:1px solid rgba(235,235,250,.75);border-top:none;box-shadow:inset 0 0 0 1px rgba(20,24,40,.55),0 0 0 1px rgba(20,24,40,.35);background:rgba(255,255,255,.08);border-radius:0 0 5px 5px"></div><svg class="abs" style="left:178px;top:706.0px" width="19" height="11" viewBox="0 0 19 11"><path d="M1 5.5L5.5 1v3h8V1L18 5.5 13.5 10V7h-8v3z" fill="#fff" stroke="#303040" stroke-width="1"/></svg><div class="abs" style="left:215.5px;top:702px;width:103.5px;height:19px;box-sizing:border-box;border:1px solid rgba(235,235,250,.75);border-top:none;box-shadow:inset 0 0 0 1px rgba(20,24,40,.55),0 0 0 1px rgba(20,24,40,.35);background:rgba(255,255,255,.08);border-radius:0 0 5px 5px"></div><div class="abs" style="left:244.5px;top:703px;width:1px;height:17px;background:rgba(230,230,245,.6);box-shadow:1px 0 0 rgba(20,24,40,.5)"></div><div class="abs" style="left:272px;top:703px;width:1px;height:17px;background:rgba(230,230,245,.6);box-shadow:1px 0 0 rgba(20,24,40,.5)"></div><div class="abs" style="left:225px;top:712px;width:11px;height:4px;background:#fff;box-shadow:0 0 0 1px rgba(30,30,50,.7)"></div><div class="abs" style="left:253px;top:707px;width:11px;height:9px;box-sizing:border-box;border:2.5px solid #fff;box-shadow:0 0 0 1px rgba(30,30,50,.7),inset 0 0 0 1px rgba(30,30,50,.6);opacity:.45"></div><svg class="abs" style="left:289.0px;top:704.5px" width="13" height="13" viewBox="-6.5 -6.5 13 13"><path d="M-3.5 -3.5L3.5 3.5M3.5 -3.5L-3.5 3.5" stroke="#303040" stroke-width="3.8000000000000003" stroke-linecap="square"/><path d="M-3.5 -3.5L3.5 3.5M3.5 -3.5L-3.5 3.5" stroke="#fff" stroke-width="2.2" stroke-linecap="square"/></svg><svg class="abs" style="left:15px;top:709px" width="16" height="16" viewBox="0 0 16 16">
<rect x="0.5" y="0.5" width="8.5" height="6" rx="1" fill="#e8c8c0"/><rect x="1.3" y="1.3" width="7" height="4.4" fill="#7a1408"/><path d="M3.5 3.5h3M5 2v3" stroke="#f0c020" stroke-width="1"/>
<rect x="3" y="5.2" width="9" height="5.8" rx="1" fill="#c8e8c0"/><rect x="3.8" y="6" width="7.4" height="4.2" fill="#2a8a28"/><path d="M5 7.6h5M5 9h5" stroke="#1a4a18" stroke-width=".7"/>
<rect x="6" y="9.8" width="9.5" height="6" rx="1" fill="#e8c0b8"/><rect x="6.8" y="10.6" width="7.9" height="4.4" fill="#a81410"/><path d="M8.5 12.8h4" stroke="#300808" stroke-width="1"/></svg><div class="t" style="left:35.5px;top:709.84px;font-size:12px;color:#000;text-shadow:0 0 6px #fff,0 0 9px #fff">Adjust Display</div><div class="abs" style="left:14px;top:731px;width:305px;height:30px;background:linear-gradient(#f4f4f4,#efefef)"></div><div class="t" style="left:23.0px;top:732.99px;font-size:11px;color:#000;">Background</div><div class="abs" style="left:143px;top:739px;width:54px;height:19px;background:#fff;border:1px solid #e2e5ea;box-sizing:border-box"></div><div class="t" style="left:143px;width:54px;text-align:center;top:744.07px;font-size:11.5px;color:#000">859</div><div class="abs" style="left:19px;top:761px;width:294px;height:15px;background:linear-gradient(#e4e4e4,#f0f0f0 50%,#e8e8e8)"></div><svg class="abs" style="left:23px;top:764px" width="5" height="9"><path d="M4 0v8L0 4z" fill="#303030"/></svg><svg class="abs" style="left:304px;top:764px" width="5" height="9"><path d="M0 0v8l4-4z" fill="#303030"/></svg><div class="abs" style="left:164px;top:762px;width:15px;height:13px;box-sizing:border-box;border:1px solid #979797;border-radius:2px;background:linear-gradient(#f4f4f4,#e0e0e0 50%,#d2d2d2)"></div><div class="abs" style="left:14px;top:779px;width:305px;height:30px;background:linear-gradient(#f4f4f4,#efefef)"></div><div class="t" style="left:23.0px;top:780.99px;font-size:11px;color:#000;">Maximum</div><div class="abs" style="left:134.5px;top:788px;width:71.0px;height:18px;background:#fff;border:1px solid #e2e5ea;box-sizing:border-box"></div><div class="t" style="left:134.5px;width:71.0px;text-align:center;top:792.07px;font-size:11.5px;color:#000">45377</div><div class="abs" style="left:19px;top:809px;width:294px;height:15px;background:linear-gradient(#e4e4e4,#f0f0f0 50%,#e8e8e8)"></div><svg class="abs" style="left:23px;top:812px" width="5" height="9"><path d="M4 0v8L0 4z" fill="#303030"/></svg><svg class="abs" style="left:304px;top:812px" width="5" height="9"><path d="M0 0v8l4-4z" fill="#303030"/></svg><div class="abs" style="left:164px;top:810px;width:15px;height:13px;box-sizing:border-box;border:1px solid #979797;border-radius:2px;background:linear-gradient(#f4f4f4,#e0e0e0 50%,#d2d2d2)"></div><div class="abs" style="left:14px;top:827px;width:305px;height:30px;background:linear-gradient(#f4f4f4,#efefef)"></div><div class="t" style="left:23.0px;top:828.99px;font-size:11px;color:#000;">Gamma</div><div class="abs" style="left:143px;top:835px;width:54px;height:19px;background:#fff;border:1px solid #e2e5ea;box-sizing:border-box"></div><div class="t" style="left:143px;width:54px;text-align:center;top:840.07px;font-size:11.5px;color:#000">0.90</div><div class="abs" style="left:19px;top:857px;width:294px;height:15px;background:linear-gradient(#e4e4e4,#f0f0f0 50%,#e8e8e8)"></div><svg class="abs" style="left:23px;top:860px" width="5" height="9"><path d="M4 0v8L0 4z" fill="#303030"/></svg><svg class="abs" style="left:304px;top:860px" width="5" height="9"><path d="M0 0v8l4-4z" fill="#303030"/></svg><div class="abs" style="left:148px;top:858px;width:15px;height:13px;box-sizing:border-box;border:1px solid #979797;border-radius:2px;background:linear-gradient(#f4f4f4,#e0e0e0 50%,#d2d2d2)"></div><div class="abs" style="left:14px;top:875px;width:305px;height:30px;background:linear-gradient(#f4f4f4,#efefef)"></div><div class="t" style="left:23.0px;top:876.99px;font-size:11px;color:#000;">DDP</div><div class="abs" style="left:134.5px;top:884px;width:71.0px;height:18px;background:#fff;border:1px solid #e2e5ea;box-sizing:border-box"></div><div class="t" style="left:134.5px;width:71.0px;text-align:center;top:888.07px;font-size:11.5px;color:#000">2361</div><div class="abs" style="left:19px;top:905px;width:294px;height:15px;background:linear-gradient(#e4e4e4,#f0f0f0 50%,#e8e8e8)"></div><svg class="abs" style="left:23px;top:908px" width="5" height="9"><path d="M4 0v8L0 4z" fill="#303030"/></svg><svg class="abs" style="left:304px;top:908px" width="5" height="9"><path d="M0 0v8l4-4z" fill="#303030"/></svg><div class="abs" style="left:164px;top:906px;width:15px;height:13px;box-sizing:border-box;border:1px solid #979797;border-radius:2px;background:linear-gradient(#f4f4f4,#e0e0e0 50%,#d2d2d2)"></div><div class="abs" style="left:20px;top:889.5px;width:12.5px;height:12.5px;box-sizing:border-box;border:1px solid #8e8f8f;background:linear-gradient(135deg,#dcdcdc,#fbfbfb);box-shadow:inset 0 0 0 1px #f4f4f4"></div><svg class="abs" style="left:20px;top:889.5px" width="12.5" height="12.5" viewBox="0 0 13 13"><path d="M3 6.2l2.3 3.3L10 2.5" fill="none" stroke="#4a5aa8" stroke-width="1.7"/></svg><div class="abs" style="left:14px;top:925px;width:305px;height:31px;background:linear-gradient(#f6f6f6,#ececec)"></div><div class="abs" style="left:17px;top:933px;width:2px;height:2px;background:#a8a8b8"></div><div class="abs" style="left:17px;top:937px;width:2px;height:2px;background:#a8a8b8"></div><div class="abs" style="left:17px;top:941px;width:2px;height:2px;background:#a8a8b8"></div><div class="abs" style="left:17px;top:945px;width:2px;height:2px;background:#a8a8b8"></div><div class="abs" style="left:17px;top:949px;width:2px;height:2px;background:#a8a8b8"></div><div class="t" style="left:29.0px;top:937.27px;font-size:11.5px;color:#000;">Auto Scale</div><svg class="abs" style="left:93px;top:943px" width="7" height="4"><path d="M0 0h7L3.5 4z" fill="#000"/></svg><div class="abs" style="left:106px;top:934px;width:1px;height:19px;background:#c8c8c8"></div><div class="t" style="left:113.0px;top:937.27px;font-size:11.5px;color:#000;letter-spacing:.55px">Apply to All</div><div class="abs" style="left:185px;top:934px;width:1px;height:19px;background:#c8c8c8"></div><div class="t" style="left:192.0px;top:937.27px;font-size:11.5px;color:#000;">Sharpen</div></div>
<div class="abs" style="left:955.5px;top:8px"><div class="abs" style="left:7px;top:701.5px;width:318px;height:260.5px;box-sizing:border-box;border:1px solid rgba(10,16,28,.85);border-radius:7px 7px 3px 3px;background:linear-gradient(#7a8aa8,#a8bcdc 12%,#c0d2ec 55%,#a8bcdc);box-shadow:inset 0 0 0 1px rgba(255,255,255,.4),0 2px 10px rgba(0,0,0,.45)"></div><div class="abs" style="left:8px;top:702.5px;width:316px;height:27.5px;border-radius:6px 6px 0 0;background:linear-gradient(90deg,#8a9ab4 0%,#5a6a88 28%,#3e4c68 55%,#4a5874 100%)"></div><div class="abs" style="left:12.5px;top:729px;width:307.5px;height:228px;background:#f0f0f0;border:1px solid #5a6a80;box-sizing:border-box"></div><div class="abs" style="left:14px;top:705px;width:100px;height:22px;background:rgba(255,255,255,0.6);filter:blur(7px);border-radius:10px"></div><div class="abs" style="left:172px;top:702px;width:31px;height:19px;box-sizing:border-box;border:1px solid rgba(235,235,250,.75);border-top:none;box-shadow:inset 0 0 0 1px rgba(20,24,40,.55),0 0 0 1px rgba(20,24,40,.35);background:rgba(255,255,255,.08);border-radius:0 0 5px 5px"></div><svg class="abs" style="left:178px;top:706.0px" width="19" height="11" viewBox="0 0 19 11"><path d="M1 5.5L5.5 1v3h8V1L18 5.5 13.5 10V7h-8v3z" fill="#fff" stroke="#303040" stroke-width="1"/></svg><div class="abs" style="left:215.5px;top:702px;width:103.5px;height:19px;box-sizing:border-box;border:1px solid rgba(235,235,250,.75);border-top:none;box-shadow:inset 0 0 0 1px rgba(20,24,40,.55),0 0 0 1px rgba(20,24,40,.35);background:rgba(255,255,255,.08);border-radius:0 0 5px 5px"></div><div class="abs" style="left:244.5px;top:703px;width:1px;height:17px;background:rgba(230,230,245,.6);box-shadow:1px 0 0 rgba(20,24,40,.5)"></div><div class="abs" style="left:272px;top:703px;width:1px;height:17px;background:rgba(230,230,245,.6);box-shadow:1px 0 0 rgba(20,24,40,.5)"></div><div class="abs" style="left:225px;top:712px;width:11px;height:4px;background:#fff;box-shadow:0 0 0 1px rgba(30,30,50,.7)"></div><div class="abs" style="left:253px;top:707px;width:11px;height:9px;box-sizing:border-box;border:2.5px solid #fff;box-shadow:0 0 0 1px rgba(30,30,50,.7),inset 0 0 0 1px rgba(30,30,50,.6);opacity:.45"></div><svg class="abs" style="left:289.0px;top:704.5px" width="13" height="13" viewBox="-6.5 -6.5 13 13"><path d="M-3.5 -3.5L3.5 3.5M3.5 -3.5L-3.5 3.5" stroke="#303040" stroke-width="3.8000000000000003" stroke-linecap="square"/><path d="M-3.5 -3.5L3.5 3.5M3.5 -3.5L-3.5 3.5" stroke="#fff" stroke-width="2.2" stroke-linecap="square"/></svg><svg class="abs" style="left:15px;top:709px" width="16" height="16" viewBox="0 0 16 16">
<rect x="0.5" y="0.5" width="8.5" height="6" rx="1" fill="#e8c8c0"/><rect x="1.3" y="1.3" width="7" height="4.4" fill="#7a1408"/><path d="M3.5 3.5h3M5 2v3" stroke="#f0c020" stroke-width="1"/>
<rect x="3" y="5.2" width="9" height="5.8" rx="1" fill="#c8e8c0"/><rect x="3.8" y="6" width="7.4" height="4.2" fill="#2a8a28"/><path d="M5 7.6h5M5 9h5" stroke="#1a4a18" stroke-width=".7"/>
<rect x="6" y="9.8" width="9.5" height="6" rx="1" fill="#e8c0b8"/><rect x="6.8" y="10.6" width="7.9" height="4.4" fill="#a81410"/><path d="M8.5 12.8h4" stroke="#300808" stroke-width="1"/></svg><div class="t" style="left:35.5px;top:709.84px;font-size:12px;color:#000;text-shadow:0 0 6px #fff,0 0 9px #fff">Adjust Display</div><div class="abs" style="left:14px;top:731px;width:305px;height:30px;background:linear-gradient(#f4f4f4,#efefef)"></div><div class="t" style="left:23.0px;top:732.99px;font-size:11px;color:#000;">Background</div><div class="abs" style="left:143px;top:739px;width:54px;height:19px;background:#fff;border:1px solid #e2e5ea;box-sizing:border-box"></div><div class="t" style="left:143px;width:54px;text-align:center;top:744.07px;font-size:11.5px;color:#000">863</div><div class="abs" style="left:19px;top:761px;width:294px;height:15px;background:linear-gradient(#e4e4e4,#f0f0f0 50%,#e8e8e8)"></div><svg class="abs" style="left:23px;top:764px" width="5" height="9"><path d="M4 0v8L0 4z" fill="#303030"/></svg><svg class="abs" style="left:304px;top:764px" width="5" height="9"><path d="M0 0v8l4-4z" fill="#303030"/></svg><div class="abs" style="left:164px;top:762px;width:15px;height:13px;box-sizing:border-box;border:1px solid #979797;border-radius:2px;background:linear-gradient(#f4f4f4,#e0e0e0 50%,#d2d2d2)"></div><div class="abs" style="left:14px;top:779px;width:305px;height:30px;background:linear-gradient(#f4f4f4,#efefef)"></div><div class="t" style="left:23.0px;top:780.99px;font-size:11px;color:#000;">Maximum</div><div class="abs" style="left:134.5px;top:788px;width:71.0px;height:18px;background:#fff;border:1px solid #e2e5ea;box-sizing:border-box"></div><div class="t" style="left:134.5px;width:71.0px;text-align:center;top:792.07px;font-size:11.5px;color:#000">45371</div><div class="abs" style="left:19px;top:809px;width:294px;height:15px;background:linear-gradient(#e4e4e4,#f0f0f0 50%,#e8e8e8)"></div><svg class="abs" style="left:23px;top:812px" width="5" height="9"><path d="M4 0v8L0 4z" fill="#303030"/></svg><svg class="abs" style="left:304px;top:812px" width="5" height="9"><path d="M0 0v8l4-4z" fill="#303030"/></svg><div class="abs" style="left:164px;top:810px;width:15px;height:13px;box-sizing:border-box;border:1px solid #979797;border-radius:2px;background:linear-gradient(#f4f4f4,#e0e0e0 50%,#d2d2d2)"></div><div class="abs" style="left:14px;top:827px;width:305px;height:30px;background:linear-gradient(#f4f4f4,#efefef)"></div><div class="t" style="left:23.0px;top:828.99px;font-size:11px;color:#000;">Gamma</div><div class="abs" style="left:143px;top:835px;width:54px;height:19px;background:#fff;border:1px solid #e2e5ea;box-sizing:border-box"></div><div class="t" style="left:143px;width:54px;text-align:center;top:840.07px;font-size:11.5px;color:#000">0.90</div><div class="abs" style="left:19px;top:857px;width:294px;height:15px;background:linear-gradient(#e4e4e4,#f0f0f0 50%,#e8e8e8)"></div><svg class="abs" style="left:23px;top:860px" width="5" height="9"><path d="M4 0v8L0 4z" fill="#303030"/></svg><svg class="abs" style="left:304px;top:860px" width="5" height="9"><path d="M0 0v8l4-4z" fill="#303030"/></svg><div class="abs" style="left:148px;top:858px;width:15px;height:13px;box-sizing:border-box;border:1px solid #979797;border-radius:2px;background:linear-gradient(#f4f4f4,#e0e0e0 50%,#d2d2d2)"></div><div class="abs" style="left:14px;top:875px;width:305px;height:30px;background:linear-gradient(#f4f4f4,#efefef)"></div><div class="t" style="left:23.0px;top:876.99px;font-size:11px;color:#000;">DDP</div><div class="abs" style="left:134.5px;top:884px;width:71.0px;height:18px;background:#fff;border:1px solid #e2e5ea;box-sizing:border-box"></div><div class="t" style="left:134.5px;width:71.0px;text-align:center;top:888.07px;font-size:11.5px;color:#000">2615</div><div class="abs" style="left:19px;top:905px;width:294px;height:15px;background:linear-gradient(#e4e4e4,#f0f0f0 50%,#e8e8e8)"></div><svg class="abs" style="left:23px;top:908px" width="5" height="9"><path d="M4 0v8L0 4z" fill="#303030"/></svg><svg class="abs" style="left:304px;top:908px" width="5" height="9"><path d="M0 0v8l4-4z" fill="#303030"/></svg><div class="abs" style="left:164px;top:906px;width:15px;height:13px;box-sizing:border-box;border:1px solid #979797;border-radius:2px;background:linear-gradient(#f4f4f4,#e0e0e0 50%,#d2d2d2)"></div><div class="abs" style="left:20px;top:889.5px;width:12.5px;height:12.5px;box-sizing:border-box;border:1px solid #8e8f8f;background:linear-gradient(135deg,#dcdcdc,#fbfbfb);box-shadow:inset 0 0 0 1px #f4f4f4"></div><svg class="abs" style="left:20px;top:889.5px" width="12.5" height="12.5" viewBox="0 0 13 13"><path d="M3 6.2l2.3 3.3L10 2.5" fill="none" stroke="#4a5aa8" stroke-width="1.7"/></svg><div class="abs" style="left:14px;top:925px;width:305px;height:31px;background:linear-gradient(#f6f6f6,#ececec)"></div><div class="abs" style="left:17px;top:933px;width:2px;height:2px;background:#a8a8b8"></div><div class="abs" style="left:17px;top:937px;width:2px;height:2px;background:#a8a8b8"></div><div class="abs" style="left:17px;top:941px;width:2px;height:2px;background:#a8a8b8"></div><div class="abs" style="left:17px;top:945px;width:2px;height:2px;background:#a8a8b8"></div><div class="abs" style="left:17px;top:949px;width:2px;height:2px;background:#a8a8b8"></div><div class="t" style="left:29.0px;top:937.27px;font-size:11.5px;color:#000;">Auto Scale</div><svg class="abs" style="left:93px;top:943px" width="7" height="4"><path d="M0 0h7L3.5 4z" fill="#000"/></svg><div class="abs" style="left:106px;top:934px;width:1px;height:19px;background:#c8c8c8"></div><div class="t" style="left:113.0px;top:937.27px;font-size:11.5px;color:#000;letter-spacing:.55px">Apply to All</div><div class="abs" style="left:185px;top:934px;width:1px;height:19px;background:#c8c8c8"></div><div class="t" style="left:192.0px;top:937.27px;font-size:11.5px;color:#000;">Sharpen</div><div class="abs" style="left:244px;top:934px;width:1px;height:19px;background:#c8c8c8"></div><div class="t" style="left:251.0px;top:937.27px;font-size:11.5px;color:#000;">Invert</div></div>
<div class="abs" style="left:228px;top:871px;width:566px;height:120px;box-sizing:border-box;border:1px solid rgba(10,16,28,.9);border-radius:7px 7px 0 0;background:linear-gradient(#6a98d8,#88acdc);box-shadow:0 0 12px rgba(0,0,0,.55)"></div><div class="abs" style="left:229px;top:872px;width:564px;height:27px;border-radius:6px 6px 0 0;background:linear-gradient(90deg,#aac4ea 0%,#7aa0d8 35%,#5f8ed0 60%,#5a88cc 100%)"></div><div class="abs" style="left:233px;top:874px;width:150px;height:24px;background:rgba(255,255,255,0.65);filter:blur(7px);border-radius:10px"></div><div class="abs" style="left:380px;top:876px;width:140px;height:18px;background:rgba(40,70,130,.5);filter:blur(5px)"></div><div class="abs" style="left:641.5px;top:871.5px;width:31px;height:17.5px;box-sizing:border-box;border:1px solid rgba(235,235,250,.75);border-top:none;box-shadow:inset 0 0 0 1px rgba(20,24,40,.55),0 0 0 1px rgba(20,24,40,.35);background:rgba(255,255,255,.12);border-radius:0 0 5px 5px"></div><svg class="abs" style="left:647.5px;top:874.8px" width="19" height="11" viewBox="0 0 19 11"><path d="M1 5.5L5.5 1v3h8V1L18 5.5 13.5 10V7h-8v3z" fill="#fff" stroke="#303040" stroke-width="1"/></svg><div class="abs" style="left:685px;top:871.5px;width:102px;height:17.5px;box-sizing:border-box;border:1px solid rgba(235,235,250,.75);border-top:none;box-shadow:inset 0 0 0 1px rgba(20,24,40,.55),0 0 0 1px rgba(20,24,40,.35);background:rgba(255,255,255,.12);border-radius:0 0 5px 5px"></div><div class="abs" style="left:741px;top:871.5px;width:45px;height:16.5px;background:linear-gradient(#e08070,#c84030 50%,#b82818 51%,#d05040);border-radius:0 0 4px 0"></div><div class="abs" style="left:713px;top:872.5px;width:1px;height:15.5px;background:rgba(230,230,245,.6);box-shadow:1px 0 0 rgba(20,24,40,.5)"></div><div class="abs" style="left:741px;top:872.5px;width:1px;height:15.5px;background:rgba(230,230,245,.6);box-shadow:1px 0 0 rgba(20,24,40,.5)"></div><div class="abs" style="left:694px;top:880.0px;width:11px;height:4px;background:#fff;box-shadow:0 0 0 1px rgba(30,30,50,.7)"></div><div class="abs" style="left:722px;top:876.5px;width:11px;height:9px;box-sizing:border-box;border:2.5px solid #fff;box-shadow:0 0 0 1px rgba(30,30,50,.7),inset 0 0 0 1px rgba(30,30,50,.6);opacity:1"></div><svg class="abs" style="left:757.5px;top:873.25px" width="13" height="13" viewBox="-6.5 -6.5 13 13"><path d="M-3.5 -3.5L3.5 3.5M3.5 -3.5L-3.5 3.5" stroke="#303040" stroke-width="3.8000000000000003" stroke-linecap="square"/><path d="M-3.5 -3.5L3.5 3.5M3.5 -3.5L-3.5 3.5" stroke="#fff" stroke-width="2.2" stroke-linecap="square"/></svg><div class="abs" style="left:233px;top:898px;width:555px;height:80px;background:#f0f0f0;border:1px solid #4a6288;box-sizing:border-box"></div><svg class="abs" style="left:236px;top:878px" width="16" height="16" viewBox="0 0 16 16">
<rect x="0.5" y="0.5" width="8.5" height="6" rx="1" fill="#e8c8c0"/><rect x="1.3" y="1.3" width="7" height="4.4" fill="#7a1408"/><path d="M3.5 3.5h3M5 2v3" stroke="#f0c020" stroke-width="1"/>
<rect x="3" y="5.2" width="9" height="5.8" rx="1" fill="#c8e8c0"/><rect x="3.8" y="6" width="7.4" height="4.2" fill="#2a8a28"/><path d="M5 7.6h5M5 9h5" stroke="#1a4a18" stroke-width=".7"/>
<rect x="6" y="9.8" width="9.5" height="6" rx="1" fill="#e8c0b8"/><rect x="6.8" y="10.6" width="7.9" height="4.4" fill="#a81410"/><path d="M8.5 12.8h4" stroke="#300808" stroke-width="1"/></svg><div class="t" style="left:256.0px;top:878.84px;font-size:12px;color:#000;text-shadow:0 0 6px #fff,0 0 9px #fff">ImageManager</div><div class="t" style="left:244.0px;top:901.49px;font-size:11px;color:#000;">Set Include Status for All/Selected</div><div class="abs" style="left:238px;top:907px;width:206px;height:43px;box-sizing:border-box;border:1px solid #dcdcdc;border-top:none"></div><div class="abs" style="left:238px;top:907px;width:4px;height:1px;background:#dcdcdc"></div><div class="abs" style="left:410px;top:907px;width:34px;height:1px;background:#dcdcdc"></div><div class="abs" style="left:248px;top:926.5px;width:39px;height:17.0px;box-sizing:border-box;border:1px solid #707070;border-radius:3px;background:linear-gradient(#f2f2f2 0%,#ebebeb 48%,#dddddd 52%,#cfcfcf 100%);box-shadow:inset 0 0 0 1px rgba(255,255,255,.7)"></div><div class="t" style="left:248px;width:39px;text-align:center;top:928.77px;font-size:11.5px;color:#000">Yes</div><div class="abs" style="left:295px;top:926.5px;width:33px;height:17.0px;box-sizing:border-box;border:1px solid #707070;border-radius:3px;background:linear-gradient(#f2f2f2 0%,#ebebeb 48%,#dddddd 52%,#cfcfcf 100%);box-shadow:inset 0 0 0 1px rgba(255,255,255,.7)"></div><div class="t" style="left:295px;width:33px;text-align:center;top:928.77px;font-size:11.5px;color:#000">No</div><div class="abs" style="left:336px;top:926.5px;width:49px;height:17.0px;box-sizing:border-box;border:1px solid #707070;border-radius:3px;background:linear-gradient(#f2f2f2 0%,#ebebeb 48%,#dddddd 52%,#cfcfcf 100%);box-shadow:inset 0 0 0 1px rgba(255,255,255,.7)"></div><div class="t" style="left:336px;width:49px;text-align:center;top:928.77px;font-size:11.5px;color:#000">Invert</div><div class="abs" style="left:393px;top:926.5px;width:43px;height:17.0px;box-sizing:border-box;border:1px solid #707070;border-radius:3px;background:linear-gradient(#f2f2f2 0%,#ebebeb 48%,#dddddd 52%,#cfcfcf 100%);box-shadow:inset 0 0 0 1px rgba(255,255,255,.7)"></div><div class="t" style="left:393px;width:43px;text-align:center;top:928.77px;font-size:11.5px;color:#000">Auto</div><div class="abs" style="left:452px;top:926.5px;width:60px;height:17.0px;box-sizing:border-box;border:1px solid #707070;border-radius:3px;background:linear-gradient(#f2f2f2 0%,#ebebeb 48%,#dddddd 52%,#cfcfcf 100%);box-shadow:inset 0 0 0 1px rgba(255,255,255,.7)"></div><div class="t" style="left:452px;width:60px;text-align:center;top:928.77px;font-size:11.5px;color:#000">Rename</div><div class="abs" style="left:237px;top:951.5px;width:550px;height:20px;background:#94afd3;border-top:1px solid #6a7a90;box-sizing:border-box"></div>
<div class="abs" style="left:1717px;top:178.5px;width:210px;height:725px;box-sizing:border-box;border:1px solid rgba(10,16,28,.9);border-radius:7px 7px 0 0;background:linear-gradient(90deg,#6a7088,#c8ccdc 40%,#9aa0b8 70%,#3a4058)"></div><div class="abs" style="left:1718px;top:179.5px;width:210px;height:28px;border-radius:6px 6px 0 0;background:linear-gradient(90deg,#6a7690 0%,#4a5670 40%,#3c4660 100%)"></div><div class="abs" style="left:1720px;top:182px;width:110px;height:24px;background:rgba(255,255,255,0.6);filter:blur(7px);border-radius:10px"></div><div class="abs" style="left:1718px;top:207.5px;width:6px;height:690px;background:linear-gradient(90deg,#8890a8,#d8dce8 40%,#c0c8dc 70%,#8088a0)"></div><div class="abs" style="left:1724px;top:207.5px;width:200px;height:690px;background:#f0f0f0;border-left:1px solid #5a6a80;box-sizing:border-box"></div><svg class="abs" style="left:1724px;top:184px" width="16" height="16" viewBox="0 0 16 16">
<rect x="0.5" y="0.5" width="8.5" height="6" rx="1" fill="#e8c8c0"/><rect x="1.3" y="1.3" width="7" height="4.4" fill="#7a1408"/><path d="M3.5 3.5h3M5 2v3" stroke="#f0c020" stroke-width="1"/>
<rect x="3" y="5.2" width="9" height="5.8" rx="1" fill="#c8e8c0"/><rect x="3.8" y="6" width="7.4" height="4.2" fill="#2a8a28"/><path d="M5 7.6h5M5 9h5" stroke="#1a4a18" stroke-width=".7"/>
<rect x="6" y="9.8" width="9.5" height="6" rx="1" fill="#e8c0b8"/><rect x="6.8" y="10.6" width="7.9" height="4.4" fill="#a81410"/><path d="M8.5 12.8h4" stroke="#300808" stroke-width="1"/></svg><div class="t" style="left:1744.5px;top:186.44px;font-size:12px;color:#000;text-shadow:0 0 6px #fff,0 0 9px #fff">ImageManager</div><div class="t" style="left:1733.0px;top:208.49px;font-size:11px;color:#000;">Set Include Status for All/Selected</div><div class="abs" style="left:1727px;top:214px;width:206px;height:43px;box-sizing:border-box;border:1px solid #dcdcdc;border-top:none"></div><div class="abs" style="left:1727px;top:214px;width:4px;height:1px;background:#dcdcdc"></div><div class="abs" style="left:1899px;top:214px;width:34px;height:1px;background:#dcdcdc"></div><div class="abs" style="left:1737px;top:233.5px;width:39px;height:17.0px;box-sizing:border-box;border:1px solid #707070;border-radius:3px;background:linear-gradient(#f2f2f2 0%,#ebebeb 48%,#dddddd 52%,#cfcfcf 100%);box-shadow:inset 0 0 0 1px rgba(255,255,255,.7)"></div><div class="t" style="left:1737px;width:39px;text-align:center;top:235.77px;font-size:11.5px;color:#000">Yes</div><div class="abs" style="left:1784px;top:233.5px;width:33px;height:17.0px;box-sizing:border-box;border:1px solid #707070;border-radius:3px;background:linear-gradient(#f2f2f2 0%,#ebebeb 48%,#dddddd 52%,#cfcfcf 100%);box-shadow:inset 0 0 0 1px rgba(255,255,255,.7)"></div><div class="t" style="left:1784px;width:33px;text-align:center;top:235.77px;font-size:11.5px;color:#000">No</div><div class="abs" style="left:1825px;top:233.5px;width:49px;height:17.0px;box-sizing:border-box;border:1px solid #707070;border-radius:3px;background:linear-gradient(#f2f2f2 0%,#ebebeb 48%,#dddddd 52%,#cfcfcf 100%);box-shadow:inset 0 0 0 1px rgba(255,255,255,.7)"></div><div class="t" style="left:1825px;width:49px;text-align:center;top:235.77px;font-size:11.5px;color:#000">Invert</div><div class="abs" style="left:1882px;top:233.5px;width:43px;height:17.0px;box-sizing:border-box;border:1px solid #707070;border-radius:3px;background:linear-gradient(#f2f2f2 0%,#ebebeb 48%,#dddddd 52%,#cfcfcf 100%);box-shadow:inset 0 0 0 1px rgba(255,255,255,.7)"></div><div class="t" style="left:1882px;width:43px;text-align:center;top:235.77px;font-size:11.5px;color:#000">Auto</div><div class="abs" style="left:1726px;top:259.5px;width:200px;height:21px;background:#94afd3;border-top:1px solid #6a7a90;box-sizing:border-box"></div><div class="abs" style="left:1726px;top:280.5px;width:200px;height:593px;background:#fff"></div><div class="abs" style="left:1726px;top:280.5px;width:35px;height:593px;background:#f0f0f0"></div><div class="abs" style="left:1761px;top:280.5px;width:1px;height:593px;background:#a0a0a0"></div><div class="abs" style="left:1726px;top:301.5px;width:200px;height:1px;background:#a0a0a0"></div><div class="abs" style="left:1726px;top:280.5px;width:200px;height:21px;background:#f0f0f0"></div><div class="abs" style="left:1761px;top:280.5px;width:1px;height:21px;background:#a0a0a0"></div><div class="abs" style="left:1726px;top:301.5px;width:200px;height:1px;background:#a0a0a0"></div><div class="t" style="left:1765.0px;top:285.29px;font-size:11px;color:#000;">Name</div><div class="abs" style="left:1726px;top:320.5px;width:200px;height:1px;background:#a0a0a0"></div><div class="t" style="left:1763.0px;top:306.69px;font-size:11px;color:#000;">NGC6960 Optolong-003B_E</div><div class="abs" style="left:1726px;top:339.5px;width:200px;height:1px;background:#a0a0a0"></div><div class="t" style="left:1763.0px;top:325.69px;font-size:11px;color:#000;">NGC6960 Optolong-003G_N</div><div class="abs" style="left:1726px;top:358.5px;width:200px;height:1px;background:#a0a0a0"></div><div class="t" style="left:1763.0px;top:344.69px;font-size:11px;color:#000;">NGC6960 Optolong-003L_M</div><div class="abs" style="left:1726px;top:377.5px;width:200px;height:1px;background:#a0a0a0"></div><div class="t" style="left:1763.0px;top:363.69px;font-size:11px;color:#000;">NGC6960 Optolong-003R_D</div><div class="abs" style="left:1726px;top:396.5px;width:200px;height:1px;background:#a0a0a0"></div><div class="t" style="left:1763.0px;top:382.69px;font-size:11px;color:#000;">NGC6960 Optolong-004B_E</div><div class="abs" style="left:1726px;top:415.5px;width:200px;height:1px;background:#a0a0a0"></div><div class="t" style="left:1763.0px;top:401.69px;font-size:11px;color:#000;">NGC6960 Optolong-004G_N</div><div class="abs" style="left:1726px;top:434.5px;width:200px;height:1px;background:#a0a0a0"></div><div class="t" style="left:1763.0px;top:420.69px;font-size:11px;color:#000;">NGC6960 Optolong-004L_M</div><div class="abs" style="left:1726px;top:453.5px;width:200px;height:1px;background:#a0a0a0"></div><div class="t" style="left:1763.0px;top:439.69px;font-size:11px;color:#000;">NGC6960 Optolong-004R_D</div><div class="abs" style="left:1726px;top:472.5px;width:200px;height:1px;background:#a0a0a0"></div><div class="t" style="left:1763.0px;top:458.69px;font-size:11px;color:#000;">NGC6960 Optolong-005B_E</div><div class="abs" style="left:1726px;top:491.5px;width:200px;height:1px;background:#a0a0a0"></div><div class="t" style="left:1763.0px;top:477.69px;font-size:11px;color:#000;">NGC6960 Optolong-005G_N</div><div class="abs" style="left:1726px;top:510.5px;width:200px;height:1px;background:#a0a0a0"></div><div class="t" style="left:1763.0px;top:496.69px;font-size:11px;color:#000;">NGC6960 Optolong-005L_M</div><div class="abs" style="left:1726px;top:529.5px;width:200px;height:1px;background:#a0a0a0"></div><div class="t" style="left:1763.0px;top:515.69px;font-size:11px;color:#000;">NGC6960 Optolong-005R_D</div><div class="abs" style="left:1726px;top:548.5px;width:200px;height:1px;background:#a0a0a0"></div><div class="t" style="left:1763.0px;top:534.69px;font-size:11px;color:#000;">NGC6960 Optolong-006B_E</div><div class="abs" style="left:1726px;top:567.5px;width:200px;height:1px;background:#a0a0a0"></div><div class="t" style="left:1763.0px;top:553.69px;font-size:11px;color:#000;">NGC6960 Optolong-006R_D</div><div class="abs" style="left:1726px;top:586.5px;width:200px;height:1px;background:#a0a0a0"></div><div class="t" style="left:1763.0px;top:572.69px;font-size:11px;color:#000;">NGC6960 Optolong-007B_E</div><div class="abs" style="left:1726px;top:605.5px;width:200px;height:1px;background:#a0a0a0"></div><div class="t" style="left:1763.0px;top:591.69px;font-size:11px;color:#000;">NGC6960 Optolong-007G_N</div><div class="abs" style="left:1726px;top:624.5px;width:200px;height:1px;background:#a0a0a0"></div><div class="t" style="left:1763.0px;top:610.69px;font-size:11px;color:#000;">NGC6960 Optolong-007L_M</div><div class="abs" style="left:1726px;top:643.5px;width:200px;height:1px;background:#a0a0a0"></div><div class="t" style="left:1763.0px;top:629.69px;font-size:11px;color:#000;">NGC6960 Optolong-007R_D</div><div class="abs" style="left:1726px;top:662.5px;width:200px;height:1px;background:#a0a0a0"></div><div class="t" style="left:1763.0px;top:648.69px;font-size:11px;color:#000;">NGC6960 Optolong-008B_E</div><div class="abs" style="left:1726px;top:681.5px;width:200px;height:1px;background:#a0a0a0"></div><div class="t" style="left:1763.0px;top:667.69px;font-size:11px;color:#000;">NGC6960 Optolong-008G_N</div><div class="abs" style="left:1762px;top:682.5px;width:160px;height:18px;background:#a6bdd8"></div><svg class="abs" style="left:1731px;top:687.5px" width="5" height="9"><path d="M0 0v8l4.5-4z" fill="#000"/></svg><div class="abs" style="left:1726px;top:700.5px;width:200px;height:1px;background:#a0a0a0"></div><div class="t" style="left:1763.0px;top:686.69px;font-size:11px;color:#000;">NGC6960 Optolong-008L_M</div><div class="abs" style="left:1726px;top:719.5px;width:200px;height:1px;background:#a0a0a0"></div><div class="t" style="left:1763.0px;top:705.69px;font-size:11px;color:#000;">NGC6960 Optolong-008R_D</div><div class="abs" style="left:1726px;top:738.5px;width:200px;height:1px;background:#a0a0a0"></div><div class="t" style="left:1763.0px;top:724.69px;font-size:11px;color:#000;">NGC6960 Optolong-009L_M</div><div class="abs" style="left:1726px;top:757.5px;width:200px;height:1px;background:#a0a0a0"></div><div class="t" style="left:1763.0px;top:743.69px;font-size:11px;color:#000;">NGC6960-001H_A</div><div class="abs" style="left:1726px;top:776.5px;width:200px;height:1px;background:#a0a0a0"></div><div class="t" style="left:1763.0px;top:762.69px;font-size:11px;color:#000;">NGC6960-001O_III</div><div class="abs" style="left:1726px;top:795.5px;width:200px;height:1px;background:#a0a0a0"></div><div class="t" style="left:1763.0px;top:781.69px;font-size:11px;color:#000;">NGC6960-001S_II</div><div class="abs" style="left:1726px;top:814.5px;width:200px;height:1px;background:#a0a0a0"></div><div class="t" style="left:1763.0px;top:800.69px;font-size:11px;color:#000;">NGC6960-002H_A</div><div class="abs" style="left:1726px;top:833.5px;width:200px;height:1px;background:#a0a0a0"></div><div class="t" style="left:1763.0px;top:819.69px;font-size:11px;color:#000;">NGC6960-002O_III</div><div class="abs" style="left:1726px;top:852.5px;width:200px;height:1px;background:#a0a0a0"></div><div class="t" style="left:1763.0px;top:838.69px;font-size:11px;color:#000;">NGC6960-002S_II</div><div class="abs" style="left:1726px;top:871.5px;width:200px;height:1px;background:#a0a0a0"></div><div class="t" style="left:1763.0px;top:857.69px;font-size:11px;color:#000;">NGC6960-003H_A</div><div class="abs" style="left:1726px;top:872.5px;width:200px;height:5px;background:#b4b4b4"></div><div class="abs" style="left:1726px;top:877px;width:200px;height:18px;background:linear-gradient(#e8e8e8,#f4f4f4)"></div><svg class="abs" style="left:1732px;top:882px" width="5" height="8"><path d="M4 0v8L0 4z" fill="#505050"/></svg><div class="abs" style="left:1745px;top:878.5px;width:180px;height:15px;box-sizing:border-box;border:1px solid #979797;border-radius:2px;background:linear-gradient(#f4f4f4,#dedede)"></div><div class="abs" style="left:1717px;top:895px;width:210px;height:8px;background:linear-gradient(#f0f0f0 0%,#f0f0f0 25%,#6a6a80 30%,#c8c8d8 50%,#8890a8 75%,#20202c 100%)"></div>
<div class="abs" style="left:15px;top:963px;width:43px;height:5px;background:#e8e8ea"></div>
<div class="abs" style="left:90px;top:963px;width:110px;height:5px;background:linear-gradient(90deg,#1a2030,#3a4860 40%,#6a6040 70%,#202840)"></div>
</body></html>
